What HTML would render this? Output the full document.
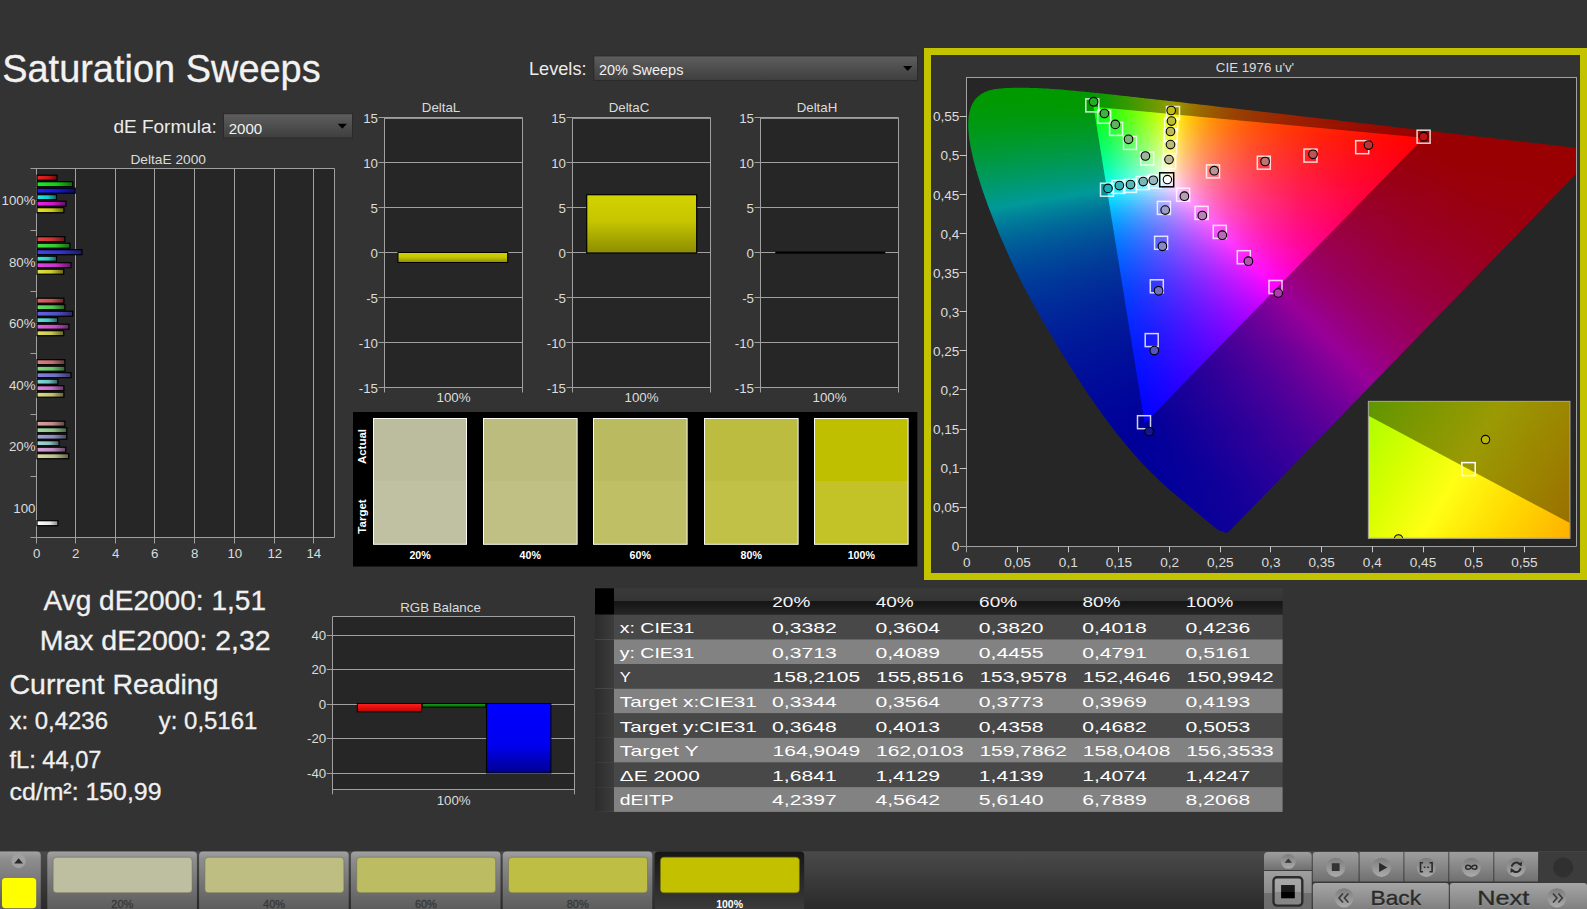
<!DOCTYPE html>
<html><head><meta charset="utf-8"><title>Saturation Sweeps</title>
<style>html,body{margin:0;padding:0;background:#333333;overflow:hidden}svg{display:block}text{font-family:'Liberation Sans', sans-serif}</style>
</head><body>
<svg width="1587" height="909" viewBox="0 0 1587 909">
<defs>
<linearGradient id="dd" x1="0" y1="0" x2="0" y2="1"><stop offset="0" stop-color="#5e5e5e"/><stop offset="1" stop-color="#3e3e3e"/></linearGradient>
<linearGradient id="b1" x1="0" y1="0" x2="1" y2="0"><stop offset="0" stop-color="#e52626"/><stop offset="0.55" stop-color="#cc1616"/><stop offset="1" stop-color="#660b0b"/></linearGradient>
<linearGradient id="b2" x1="0" y1="0" x2="1" y2="0"><stop offset="0" stop-color="#26e526"/><stop offset="0.55" stop-color="#16cc16"/><stop offset="1" stop-color="#0b660b"/></linearGradient>
<linearGradient id="b3" x1="0" y1="0" x2="1" y2="0"><stop offset="0" stop-color="#2626e5"/><stop offset="0.55" stop-color="#1616cc"/><stop offset="1" stop-color="#0b0b66"/></linearGradient>
<linearGradient id="b4" x1="0" y1="0" x2="1" y2="0"><stop offset="0" stop-color="#26e5e5"/><stop offset="0.55" stop-color="#16cccc"/><stop offset="1" stop-color="#0b6666"/></linearGradient>
<linearGradient id="b5" x1="0" y1="0" x2="1" y2="0"><stop offset="0" stop-color="#e526e5"/><stop offset="0.55" stop-color="#cc16cc"/><stop offset="1" stop-color="#660b66"/></linearGradient>
<linearGradient id="b6" x1="0" y1="0" x2="1" y2="0"><stop offset="0" stop-color="#e5e526"/><stop offset="0.55" stop-color="#cccc16"/><stop offset="1" stop-color="#66660b"/></linearGradient>
<linearGradient id="b7" x1="0" y1="0" x2="1" y2="0"><stop offset="0" stop-color="#e24545"/><stop offset="0.55" stop-color="#c93333"/><stop offset="1" stop-color="#641919"/></linearGradient>
<linearGradient id="b8" x1="0" y1="0" x2="1" y2="0"><stop offset="0" stop-color="#45e245"/><stop offset="0.55" stop-color="#33c933"/><stop offset="1" stop-color="#196419"/></linearGradient>
<linearGradient id="b9" x1="0" y1="0" x2="1" y2="0"><stop offset="0" stop-color="#4545e2"/><stop offset="0.55" stop-color="#3333c9"/><stop offset="1" stop-color="#191964"/></linearGradient>
<linearGradient id="b10" x1="0" y1="0" x2="1" y2="0"><stop offset="0" stop-color="#45e2e2"/><stop offset="0.55" stop-color="#33c9c9"/><stop offset="1" stop-color="#196464"/></linearGradient>
<linearGradient id="b11" x1="0" y1="0" x2="1" y2="0"><stop offset="0" stop-color="#e245e2"/><stop offset="0.55" stop-color="#c933c9"/><stop offset="1" stop-color="#641964"/></linearGradient>
<linearGradient id="b12" x1="0" y1="0" x2="1" y2="0"><stop offset="0" stop-color="#e2e245"/><stop offset="0.55" stop-color="#c9c933"/><stop offset="1" stop-color="#646419"/></linearGradient>
<linearGradient id="b13" x1="0" y1="0" x2="1" y2="0"><stop offset="0" stop-color="#df6464"/><stop offset="0.55" stop-color="#c65151"/><stop offset="1" stop-color="#632828"/></linearGradient>
<linearGradient id="b14" x1="0" y1="0" x2="1" y2="0"><stop offset="0" stop-color="#64df64"/><stop offset="0.55" stop-color="#51c651"/><stop offset="1" stop-color="#286328"/></linearGradient>
<linearGradient id="b15" x1="0" y1="0" x2="1" y2="0"><stop offset="0" stop-color="#6464df"/><stop offset="0.55" stop-color="#5151c6"/><stop offset="1" stop-color="#282863"/></linearGradient>
<linearGradient id="b16" x1="0" y1="0" x2="1" y2="0"><stop offset="0" stop-color="#64dfdf"/><stop offset="0.55" stop-color="#51c6c6"/><stop offset="1" stop-color="#286363"/></linearGradient>
<linearGradient id="b17" x1="0" y1="0" x2="1" y2="0"><stop offset="0" stop-color="#df64df"/><stop offset="0.55" stop-color="#c651c6"/><stop offset="1" stop-color="#632863"/></linearGradient>
<linearGradient id="b18" x1="0" y1="0" x2="1" y2="0"><stop offset="0" stop-color="#dfdf64"/><stop offset="0.55" stop-color="#c6c651"/><stop offset="1" stop-color="#636328"/></linearGradient>
<linearGradient id="b19" x1="0" y1="0" x2="1" y2="0"><stop offset="0" stop-color="#dc8383"/><stop offset="0.55" stop-color="#c36f6f"/><stop offset="1" stop-color="#613737"/></linearGradient>
<linearGradient id="b20" x1="0" y1="0" x2="1" y2="0"><stop offset="0" stop-color="#83dc83"/><stop offset="0.55" stop-color="#6fc36f"/><stop offset="1" stop-color="#376137"/></linearGradient>
<linearGradient id="b21" x1="0" y1="0" x2="1" y2="0"><stop offset="0" stop-color="#8383dc"/><stop offset="0.55" stop-color="#6f6fc3"/><stop offset="1" stop-color="#373761"/></linearGradient>
<linearGradient id="b22" x1="0" y1="0" x2="1" y2="0"><stop offset="0" stop-color="#83dcdc"/><stop offset="0.55" stop-color="#6fc3c3"/><stop offset="1" stop-color="#376161"/></linearGradient>
<linearGradient id="b23" x1="0" y1="0" x2="1" y2="0"><stop offset="0" stop-color="#dc83dc"/><stop offset="0.55" stop-color="#c36fc3"/><stop offset="1" stop-color="#613761"/></linearGradient>
<linearGradient id="b24" x1="0" y1="0" x2="1" y2="0"><stop offset="0" stop-color="#dcdc83"/><stop offset="0.55" stop-color="#c3c36f"/><stop offset="1" stop-color="#616137"/></linearGradient>
<linearGradient id="b25" x1="0" y1="0" x2="1" y2="0"><stop offset="0" stop-color="#d9a3a3"/><stop offset="0.55" stop-color="#c08d8d"/><stop offset="1" stop-color="#604646"/></linearGradient>
<linearGradient id="b26" x1="0" y1="0" x2="1" y2="0"><stop offset="0" stop-color="#a3d9a3"/><stop offset="0.55" stop-color="#8dc08d"/><stop offset="1" stop-color="#466046"/></linearGradient>
<linearGradient id="b27" x1="0" y1="0" x2="1" y2="0"><stop offset="0" stop-color="#a3a3d9"/><stop offset="0.55" stop-color="#8d8dc0"/><stop offset="1" stop-color="#464660"/></linearGradient>
<linearGradient id="b28" x1="0" y1="0" x2="1" y2="0"><stop offset="0" stop-color="#a3d9d9"/><stop offset="0.55" stop-color="#8dc0c0"/><stop offset="1" stop-color="#466060"/></linearGradient>
<linearGradient id="b29" x1="0" y1="0" x2="1" y2="0"><stop offset="0" stop-color="#d9a3d9"/><stop offset="0.55" stop-color="#c08dc0"/><stop offset="1" stop-color="#604660"/></linearGradient>
<linearGradient id="b30" x1="0" y1="0" x2="1" y2="0"><stop offset="0" stop-color="#d9d9a3"/><stop offset="0.55" stop-color="#c0c08d"/><stop offset="1" stop-color="#606046"/></linearGradient>
<linearGradient id="bw" x1="0" y1="0" x2="1" y2="0"><stop offset="0" stop-color="#ffffff"/><stop offset="0.6" stop-color="#e8e8e8"/><stop offset="1" stop-color="#8a8a8a"/></linearGradient>
<linearGradient id="yb" x1="0" y1="0" x2="0" y2="1"><stop offset="0" stop-color="#d2d200"/><stop offset="0.45" stop-color="#c6c600"/><stop offset="1" stop-color="#8c8c00"/></linearGradient>
<linearGradient id="d1" gradientUnits="userSpaceOnUse" x1="1005.5" x2="1035.5"><stop offset="0" stop-color="#009900"/><stop offset="1" stop-color="#009900"/></linearGradient>
<linearGradient id="d2" gradientUnits="userSpaceOnUse" x1="989.5" x2="1066.5"><stop offset="0" stop-color="#009900"/><stop offset="1" stop-color="#009900"/></linearGradient>
<linearGradient id="d3" gradientUnits="userSpaceOnUse" x1="984.5" x2="1088.5"><stop offset="0" stop-color="#009900"/><stop offset="1" stop-color="#019900"/></linearGradient>
<linearGradient id="d4" gradientUnits="userSpaceOnUse" x1="980.5" x2="1107.5"><stop offset="0" stop-color="#009900"/><stop offset="0.8425" stop-color="#009900"/><stop offset="0.9055" stop-color="#059900"/><stop offset="1" stop-color="#159900"/></linearGradient>
<linearGradient id="d5" gradientUnits="userSpaceOnUse" x1="977.5" x2="1125.5"><stop offset="0" stop-color="#009901"/><stop offset="0.7568" stop-color="#019900"/><stop offset="0.8311" stop-color="#0b9900"/><stop offset="1" stop-color="#339900"/></linearGradient>
<linearGradient id="d6" gradientUnits="userSpaceOnUse" x1="975.5" x2="1143.5"><stop offset="0" stop-color="#009901"/><stop offset="0.6905" stop-color="#029900"/><stop offset="0.8036" stop-color="#1a9900"/><stop offset="1" stop-color="#549900"/></linearGradient>
<linearGradient id="d7" gradientUnits="userSpaceOnUse" x1="973.5" x2="1161.5"><stop offset="0" stop-color="#009902"/><stop offset="0.633" stop-color="#029900"/><stop offset="0.6862" stop-color="#0e9900"/><stop offset="0.8032" stop-color="#319900"/><stop offset="1" stop-color="#7a9900"/></linearGradient>
<linearGradient id="d8" gradientUnits="userSpaceOnUse" x1="972.5" x2="1179.5"><stop offset="0" stop-color="#009903"/><stop offset="0.5845" stop-color="#039900"/><stop offset="0.6522" stop-color="#159900"/><stop offset="0.7778" stop-color="#419900"/><stop offset="0.9758" stop-color="#989900"/><stop offset="1" stop-color="#998f00"/></linearGradient>
<linearGradient id="d9" gradientUnits="userSpaceOnUse" x1="971.5" x2="1196.5"><stop offset="0" stop-color="#009904"/><stop offset="0.5422" stop-color="#039901"/><stop offset="0.6044" stop-color="#159901"/><stop offset="0.72" stop-color="#419900"/><stop offset="0.9022" stop-color="#999900"/><stop offset="1" stop-color="#996f00"/></linearGradient>
<linearGradient id="d10" gradientUnits="userSpaceOnUse" x1="970.5" x2="1213.5"><stop offset="0" stop-color="#009905"/><stop offset="0.5021" stop-color="#029902"/><stop offset="0.5514" stop-color="#109901"/><stop offset="0.6667" stop-color="#409901"/><stop offset="0.7531" stop-color="#699900"/><stop offset="0.8395" stop-color="#999900"/><stop offset="0.9136" stop-color="#997500"/><stop offset="1" stop-color="#995800"/></linearGradient>
<linearGradient id="d11" gradientUnits="userSpaceOnUse" x1="969.5" x2="1231.5"><stop offset="0" stop-color="#009906"/><stop offset="0.4695" stop-color="#029903"/><stop offset="0.5153" stop-color="#109902"/><stop offset="0.6183" stop-color="#3e9901"/><stop offset="0.6985" stop-color="#679901"/><stop offset="0.7824" stop-color="#999900"/><stop offset="0.8779" stop-color="#996a00"/><stop offset="1" stop-color="#994600"/></linearGradient>
<linearGradient id="d12" gradientUnits="userSpaceOnUse" x1="1092.5" x2="1108.5"><stop offset="0" stop-color="#03ff05"/><stop offset="0.375" stop-color="#0cff05"/><stop offset="1" stop-color="#25ff04"/></linearGradient>
<linearGradient id="d13" gradientUnits="userSpaceOnUse" x1="969.5" x2="1248.5"><stop offset="0" stop-color="#009907"/><stop offset="0.448" stop-color="#039905"/><stop offset="0.5878" stop-color="#429902"/><stop offset="0.7312" stop-color="#979901"/><stop offset="0.7885" stop-color="#997900"/><stop offset="0.8459" stop-color="#996100"/><stop offset="0.9176" stop-color="#994b00"/><stop offset="1" stop-color="#993900"/></linearGradient>
<linearGradient id="d14" gradientUnits="userSpaceOnUse" x1="1092.5" x2="1129.5"><stop offset="0" stop-color="#03ff08"/><stop offset="0.2973" stop-color="#18ff07"/><stop offset="1" stop-color="#61ff04"/></linearGradient>
<linearGradient id="d15" gradientUnits="userSpaceOnUse" x1="968.5" x2="1265.5"><stop offset="0" stop-color="#009908"/><stop offset="0.4242" stop-color="#039907"/><stop offset="0.5926" stop-color="#579903"/><stop offset="0.6902" stop-color="#989901"/><stop offset="0.7508" stop-color="#997501"/><stop offset="0.8182" stop-color="#995900"/><stop offset="0.899" stop-color="#994200"/><stop offset="1" stop-color="#992f00"/></linearGradient>
<linearGradient id="d16" gradientUnits="userSpaceOnUse" x1="1093.5" x2="1151.5"><stop offset="0" stop-color="#04ff0b"/><stop offset="0.1379" stop-color="#12ff0b"/><stop offset="0.431" stop-color="#40ff08"/><stop offset="1" stop-color="#a9ff04"/></linearGradient>
<linearGradient id="d17" gradientUnits="userSpaceOnUse" x1="968.5" x2="1283.5"><stop offset="0" stop-color="#00990a"/><stop offset="0.4" stop-color="#039909"/><stop offset="0.6254" stop-color="#859903"/><stop offset="0.6508" stop-color="#989903"/><stop offset="0.7143" stop-color="#997201"/><stop offset="0.7905" stop-color="#995200"/><stop offset="0.8825" stop-color="#993a00"/><stop offset="1" stop-color="#992600"/></linearGradient>
<linearGradient id="d18" gradientUnits="userSpaceOnUse" x1="1093.5" x2="1172.5"><stop offset="0" stop-color="#03ff10"/><stop offset="0.1392" stop-color="#19ff0e"/><stop offset="0.481" stop-color="#67ff0a"/><stop offset="0.7468" stop-color="#adff07"/><stop offset="1" stop-color="#faff05"/></linearGradient>
<linearGradient id="d19" gradientUnits="userSpaceOnUse" x1="967.5" x2="1300.5"><stop offset="0" stop-color="#00990b"/><stop offset="0.3754" stop-color="#01990c"/><stop offset="0.6577" stop-color="#997d03"/><stop offset="0.7207" stop-color="#995d01"/><stop offset="0.7958" stop-color="#994400"/><stop offset="0.8889" stop-color="#992f00"/><stop offset="1" stop-color="#991e00"/></linearGradient>
<linearGradient id="d20" gradientUnits="userSpaceOnUse" x1="1093.5" x2="1193.5"><stop offset="0" stop-color="#03ff14"/><stop offset="0.11" stop-color="#19ff13"/><stop offset="0.38" stop-color="#67ff0f"/><stop offset="0.59" stop-color="#aeff0b"/><stop offset="0.8" stop-color="#ffff08"/><stop offset="0.9" stop-color="#ffda05"/><stop offset="1" stop-color="#ffbd04"/></linearGradient>
<linearGradient id="d21" gradientUnits="userSpaceOnUse" x1="967.5" x2="1317.5"><stop offset="0" stop-color="#00990c"/><stop offset="0.3571" stop-color="#01990f"/><stop offset="0.6886" stop-color="#995c02"/><stop offset="0.7486" stop-color="#994601"/><stop offset="0.8171" stop-color="#993500"/><stop offset="1" stop-color="#991800"/></linearGradient>
<linearGradient id="d22" gradientUnits="userSpaceOnUse" x1="1094.5" x2="1215.5"><stop offset="0" stop-color="#04ff19"/><stop offset="0.09917" stop-color="#1dff18"/><stop offset="0.314" stop-color="#6aff13"/><stop offset="0.4793" stop-color="#aeff10"/><stop offset="0.6529" stop-color="#ffff0c"/><stop offset="0.7273" stop-color="#ffdd09"/><stop offset="0.8099" stop-color="#ffbf07"/><stop offset="1" stop-color="#ff8c03"/></linearGradient>
<linearGradient id="d23" gradientUnits="userSpaceOnUse" x1="967.5" x2="1335.5"><stop offset="0" stop-color="#00990d"/><stop offset="0.3397" stop-color="#019912"/><stop offset="0.712" stop-color="#994602"/><stop offset="0.8342" stop-color="#992900"/><stop offset="1" stop-color="#991300"/></linearGradient>
<linearGradient id="d24" gradientUnits="userSpaceOnUse" x1="1094.5" x2="1236.5"><stop offset="0" stop-color="#03ff1e"/><stop offset="0.07746" stop-color="#1aff1d"/><stop offset="0.2606" stop-color="#66ff19"/><stop offset="0.4014" stop-color="#aaff15"/><stop offset="0.5563" stop-color="#fffe11"/><stop offset="0.6479" stop-color="#ffcf0c"/><stop offset="0.7465" stop-color="#ffaa08"/><stop offset="0.8662" stop-color="#ff8705"/><stop offset="1" stop-color="#ff6b03"/></linearGradient>
<linearGradient id="d25" gradientUnits="userSpaceOnUse" x1="967.5" x2="1352.5"><stop offset="0" stop-color="#00990e"/><stop offset="0.3247" stop-color="#019915"/><stop offset="0.7351" stop-color="#993602"/><stop offset="0.8519" stop-color="#992000"/><stop offset="1" stop-color="#990e00"/></linearGradient>
<linearGradient id="d26" gradientUnits="userSpaceOnUse" x1="1094.5" x2="1257.5"><stop offset="0" stop-color="#03ff22"/><stop offset="0.06748" stop-color="#19ff22"/><stop offset="0.2209" stop-color="#63ff1e"/><stop offset="0.3436" stop-color="#a7ff1b"/><stop offset="0.4847" stop-color="#fffd17"/><stop offset="0.5828" stop-color="#ffc50f"/><stop offset="0.6994" stop-color="#ff970a"/><stop offset="0.8344" stop-color="#ff7205"/><stop offset="1" stop-color="#ff5302"/></linearGradient>
<linearGradient id="d27" gradientUnits="userSpaceOnUse" x1="967.5" x2="1369.5"><stop offset="0" stop-color="#00990f"/><stop offset="0.3134" stop-color="#019918"/><stop offset="0.7587" stop-color="#992901"/><stop offset="0.8657" stop-color="#991800"/><stop offset="1" stop-color="#990a00"/></linearGradient>
<linearGradient id="d28" gradientUnits="userSpaceOnUse" x1="1095.5" x2="1279.5"><stop offset="0" stop-color="#04ff27"/><stop offset="0.05978" stop-color="#1bff27"/><stop offset="0.1957" stop-color="#66ff24"/><stop offset="0.2935" stop-color="#a3ff21"/><stop offset="0.4239" stop-color="#fffc1d"/><stop offset="0.4728" stop-color="#ffdb18"/><stop offset="0.5272" stop-color="#ffbc13"/><stop offset="0.6522" stop-color="#ff890b"/><stop offset="0.8098" stop-color="#ff6006"/><stop offset="1" stop-color="#ff3f02"/></linearGradient>
<linearGradient id="d29" gradientUnits="userSpaceOnUse" x1="967.5" x2="1387.5"><stop offset="0" stop-color="#009911"/><stop offset="0.2857" stop-color="#00991a"/><stop offset="0.3095" stop-color="#04991b"/><stop offset="0.7762" stop-color="#992001"/><stop offset="1" stop-color="#990700"/></linearGradient>
<linearGradient id="d30" gradientUnits="userSpaceOnUse" x1="1095.5" x2="1300.5"><stop offset="0" stop-color="#03ff2c"/><stop offset="0.05366" stop-color="#1bff2c"/><stop offset="0.1805" stop-color="#69ff29"/><stop offset="0.278" stop-color="#afff27"/><stop offset="0.3756" stop-color="#feff24"/><stop offset="0.4293" stop-color="#ffd61d"/><stop offset="0.4829" stop-color="#ffb617"/><stop offset="0.5463" stop-color="#ff9812"/><stop offset="0.6146" stop-color="#ff7e0d"/><stop offset="0.7854" stop-color="#ff5306"/><stop offset="1" stop-color="#ff3102"/></linearGradient>
<linearGradient id="d31" gradientUnits="userSpaceOnUse" x1="967.5" x2="1404.5"><stop offset="0" stop-color="#009913"/><stop offset="0.2746" stop-color="#00991d"/><stop offset="0.2975" stop-color="#03991e"/><stop offset="0.7941" stop-color="#991801"/><stop offset="1" stop-color="#990400"/></linearGradient>
<linearGradient id="d32" gradientUnits="userSpaceOnUse" x1="1095.5" x2="1321.5"><stop offset="0" stop-color="#03ff32"/><stop offset="0.04867" stop-color="#1aff31"/><stop offset="0.1593" stop-color="#65ff2f"/><stop offset="0.2478" stop-color="#abff2d"/><stop offset="0.3407" stop-color="#ffff2a"/><stop offset="0.3938" stop-color="#ffd221"/><stop offset="0.4469" stop-color="#ffb01b"/><stop offset="0.5088" stop-color="#ff9115"/><stop offset="0.5841" stop-color="#ff740f"/><stop offset="0.6681" stop-color="#ff5c0b"/><stop offset="0.7655" stop-color="#ff4707"/><stop offset="1" stop-color="#ff2502"/></linearGradient>
<linearGradient id="d33" gradientUnits="userSpaceOnUse" x1="967.5" x2="1422.5"><stop offset="0" stop-color="#009915"/><stop offset="0.2857" stop-color="#039921"/><stop offset="0.811" stop-color="#991101"/><stop offset="1" stop-color="#990100"/></linearGradient>
<linearGradient id="d34" gradientUnits="userSpaceOnUse" x1="1096.5" x2="1343.5"><stop offset="0" stop-color="#04ff37"/><stop offset="0.04453" stop-color="#1cff37"/><stop offset="0.1457" stop-color="#68ff35"/><stop offset="0.2227" stop-color="#abff33"/><stop offset="0.3077" stop-color="#fffe31"/><stop offset="0.3563" stop-color="#ffd127"/><stop offset="0.413" stop-color="#ffaa1f"/><stop offset="0.4777" stop-color="#ff8917"/><stop offset="0.5547" stop-color="#ff6b11"/><stop offset="0.6437" stop-color="#ff520c"/><stop offset="0.7449" stop-color="#ff3d07"/><stop offset="1" stop-color="#ff1a01"/></linearGradient>
<linearGradient id="d35" gradientUnits="userSpaceOnUse" x1="967.5" x2="1439.5"><stop offset="0" stop-color="#009917"/><stop offset="0.2564" stop-color="#009923"/><stop offset="0.2775" stop-color="#049924"/><stop offset="0.8263" stop-color="#990c01"/><stop offset="1" stop-color="#990000"/></linearGradient>
<linearGradient id="d36" gradientUnits="userSpaceOnUse" x1="1096.5" x2="1364.5"><stop offset="0" stop-color="#04ff3c"/><stop offset="0.04104" stop-color="#1bff3c"/><stop offset="0.1306" stop-color="#65ff3b"/><stop offset="0.2015" stop-color="#a8ff39"/><stop offset="0.2836" stop-color="#fffd37"/><stop offset="0.3321" stop-color="#ffcd2c"/><stop offset="0.3881" stop-color="#ffa422"/><stop offset="0.4552" stop-color="#ff811a"/><stop offset="0.5336" stop-color="#ff6313"/><stop offset="0.6231" stop-color="#ff4a0d"/><stop offset="0.7313" stop-color="#ff3408"/><stop offset="1" stop-color="#ff1201"/></linearGradient>
<linearGradient id="d37" gradientUnits="userSpaceOnUse" x1="967.5" x2="1456.5"><stop offset="0" stop-color="#009919"/><stop offset="0.2474" stop-color="#009926"/><stop offset="0.2679" stop-color="#039927"/><stop offset="0.8405" stop-color="#990801"/><stop offset="1" stop-color="#990000"/></linearGradient>
<linearGradient id="d38" gradientUnits="userSpaceOnUse" x1="1096.5" x2="1385.5"><stop offset="0" stop-color="#03ff41"/><stop offset="0.03806" stop-color="#1bff41"/><stop offset="0.1211" stop-color="#64ff41"/><stop offset="0.1834" stop-color="#a4ff40"/><stop offset="0.263" stop-color="#fffc3e"/><stop offset="0.3114" stop-color="#ffc931"/><stop offset="0.3668" stop-color="#ff9f26"/><stop offset="0.4325" stop-color="#ff7b1c"/><stop offset="0.5121" stop-color="#ff5c15"/><stop offset="0.6055" stop-color="#ff420e"/><stop offset="0.7163" stop-color="#ff2d08"/><stop offset="1" stop-color="#ff0b01"/></linearGradient>
<linearGradient id="d39" gradientUnits="userSpaceOnUse" x1="967.5" x2="1474.5"><stop offset="0" stop-color="#00991c"/><stop offset="0.2584" stop-color="#03992b"/><stop offset="0.854" stop-color="#990401"/><stop offset="1" stop-color="#990000"/></linearGradient>
<linearGradient id="d40" gradientUnits="userSpaceOnUse" x1="1097.5" x2="1406.5"><stop offset="0" stop-color="#04ff47"/><stop offset="0.0356" stop-color="#1dff47"/><stop offset="0.11" stop-color="#64ff47"/><stop offset="0.165" stop-color="#a0ff46"/><stop offset="0.2395" stop-color="#feff46"/><stop offset="0.2427" stop-color="#fffc45"/><stop offset="0.2913" stop-color="#ffc535"/><stop offset="0.3463" stop-color="#ff9a29"/><stop offset="0.4142" stop-color="#ff741f"/><stop offset="0.4919" stop-color="#ff5616"/><stop offset="0.5858" stop-color="#ff3c0f"/><stop offset="0.699" stop-color="#ff2609"/><stop offset="1" stop-color="#ff0401"/></linearGradient>
<linearGradient id="d41" gradientUnits="userSpaceOnUse" x1="968.5" x2="1491.5"><stop offset="0" stop-color="#00991e"/><stop offset="0.2294" stop-color="#00992d"/><stop offset="0.2505" stop-color="#04992e"/><stop offset="0.8662" stop-color="#990001"/><stop offset="1" stop-color="#990000"/></linearGradient>
<linearGradient id="d42" gradientUnits="userSpaceOnUse" x1="1097.5" x2="1424.5"><stop offset="0" stop-color="#04ff4c"/><stop offset="0.03364" stop-color="#1cff4d"/><stop offset="0.107" stop-color="#67ff4d"/><stop offset="0.1651" stop-color="#acff4d"/><stop offset="0.2263" stop-color="#ffff4d"/><stop offset="0.2752" stop-color="#ffc43b"/><stop offset="0.3303" stop-color="#ff972d"/><stop offset="0.3976" stop-color="#ff7022"/><stop offset="0.4771" stop-color="#ff5118"/><stop offset="0.5749" stop-color="#ff3710"/><stop offset="0.6942" stop-color="#ff200a"/><stop offset="0.841" stop-color="#ff0e04"/><stop offset="1" stop-color="#ff0001"/></linearGradient>
<linearGradient id="d43" gradientUnits="userSpaceOnUse" x1="968.5" x2="1508.5"><stop offset="0" stop-color="#009921"/><stop offset="0.2241" stop-color="#009930"/><stop offset="0.2426" stop-color="#049931"/><stop offset="0.8389" stop-color="#990001"/><stop offset="1" stop-color="#990000"/></linearGradient>
<linearGradient id="d44" gradientUnits="userSpaceOnUse" x1="1097.5" x2="1424.5"><stop offset="0" stop-color="#03ff52"/><stop offset="0.03364" stop-color="#1bff52"/><stop offset="0.107" stop-color="#67ff53"/><stop offset="0.1651" stop-color="#acff53"/><stop offset="0.2263" stop-color="#fffe54"/><stop offset="0.2722" stop-color="#ffc641"/><stop offset="0.3272" stop-color="#ff9832"/><stop offset="0.3945" stop-color="#ff7126"/><stop offset="0.474" stop-color="#ff511c"/><stop offset="0.5719" stop-color="#ff3713"/><stop offset="0.6911" stop-color="#ff200c"/><stop offset="0.844" stop-color="#ff0d06"/><stop offset="1" stop-color="#ff0002"/></linearGradient>
<linearGradient id="d45" gradientUnits="userSpaceOnUse" x1="968.5" x2="1526.5"><stop offset="0" stop-color="#009923"/><stop offset="0.2348" stop-color="#039935"/><stop offset="0.8082" stop-color="#990002"/><stop offset="1" stop-color="#990000"/></linearGradient>
<linearGradient id="d46" gradientUnits="userSpaceOnUse" x1="1097.5" x2="1422.5"><stop offset="0" stop-color="#03ff57"/><stop offset="0.03077" stop-color="#18ff58"/><stop offset="0.1046" stop-color="#63ff59"/><stop offset="0.1631" stop-color="#a8ff5a"/><stop offset="0.2277" stop-color="#fffd5a"/><stop offset="0.2738" stop-color="#ffc647"/><stop offset="0.3292" stop-color="#ff9737"/><stop offset="0.3969" stop-color="#ff702a"/><stop offset="0.4769" stop-color="#ff511f"/><stop offset="0.5754" stop-color="#ff3616"/><stop offset="0.6923" stop-color="#ff200e"/><stop offset="0.8431" stop-color="#ff0d08"/><stop offset="1" stop-color="#ff0003"/></linearGradient>
<linearGradient id="d47" gradientUnits="userSpaceOnUse" x1="968.5" x2="1543.5"><stop offset="0" stop-color="#009926"/><stop offset="0.2104" stop-color="#009937"/><stop offset="0.2296" stop-color="#049938"/><stop offset="0.7809" stop-color="#990003"/><stop offset="1" stop-color="#990000"/></linearGradient>
<linearGradient id="d48" gradientUnits="userSpaceOnUse" x1="1098.5" x2="1420.5"><stop offset="0" stop-color="#04ff5d"/><stop offset="0.03106" stop-color="#1aff5e"/><stop offset="0.1025" stop-color="#63ff5f"/><stop offset="0.1584" stop-color="#a5ff61"/><stop offset="0.2267" stop-color="#fffd61"/><stop offset="0.2733" stop-color="#ffc54d"/><stop offset="0.3292" stop-color="#ff963c"/><stop offset="0.3944" stop-color="#ff712e"/><stop offset="0.4752" stop-color="#ff5122"/><stop offset="0.5745" stop-color="#ff3619"/><stop offset="0.6925" stop-color="#ff2010"/><stop offset="0.8447" stop-color="#ff0d09"/><stop offset="1" stop-color="#ff0004"/></linearGradient>
<linearGradient id="d49" gradientUnits="userSpaceOnUse" x1="969.5" x2="1560.5"><stop offset="0" stop-color="#009929"/><stop offset="0.2047" stop-color="#00993a"/><stop offset="0.2217" stop-color="#04993b"/><stop offset="0.7547" stop-color="#990004"/><stop offset="1" stop-color="#990000"/></linearGradient>
<linearGradient id="d50" gradientUnits="userSpaceOnUse" x1="1098.5" x2="1418.5"><stop offset="0" stop-color="#03ff63"/><stop offset="0.03125" stop-color="#19ff64"/><stop offset="0.1031" stop-color="#62ff66"/><stop offset="0.1562" stop-color="#a1ff67"/><stop offset="0.225" stop-color="#feff6a"/><stop offset="0.2281" stop-color="#fffc69"/><stop offset="0.275" stop-color="#ffc453"/><stop offset="0.3312" stop-color="#ff9541"/><stop offset="0.3969" stop-color="#ff7032"/><stop offset="0.4781" stop-color="#ff5026"/><stop offset="0.575" stop-color="#ff361b"/><stop offset="0.6937" stop-color="#ff2013"/><stop offset="0.8438" stop-color="#ff0d0c"/><stop offset="1" stop-color="#ff0006"/></linearGradient>
<linearGradient id="d51" gradientUnits="userSpaceOnUse" x1="969.5" x2="1575.5"><stop offset="0" stop-color="#00992c"/><stop offset="0.1997" stop-color="#00993e"/><stop offset="0.2162" stop-color="#03993f"/><stop offset="0.7327" stop-color="#990005"/><stop offset="1" stop-color="#990000"/></linearGradient>
<linearGradient id="d52" gradientUnits="userSpaceOnUse" x1="1098.5" x2="1416.5"><stop offset="0" stop-color="#03ff69"/><stop offset="0.03145" stop-color="#18ff6a"/><stop offset="0.1069" stop-color="#66ff6d"/><stop offset="0.1667" stop-color="#adff6f"/><stop offset="0.2264" stop-color="#ffff71"/><stop offset="0.2736" stop-color="#ffc65a"/><stop offset="0.327" stop-color="#ff9947"/><stop offset="0.3931" stop-color="#ff7237"/><stop offset="0.4748" stop-color="#ff512a"/><stop offset="0.5723" stop-color="#ff371f"/><stop offset="0.6918" stop-color="#ff2015"/><stop offset="0.8428" stop-color="#ff0d0e"/><stop offset="1" stop-color="#ff0007"/></linearGradient>
<linearGradient id="d53" gradientUnits="userSpaceOnUse" x1="969.5" x2="1575.5"><stop offset="0" stop-color="#00992e"/><stop offset="0.1997" stop-color="#009941"/><stop offset="0.2178" stop-color="#049943"/><stop offset="0.7294" stop-color="#990006"/><stop offset="1" stop-color="#990000"/></linearGradient>
<linearGradient id="d54" gradientUnits="userSpaceOnUse" x1="1099.5" x2="1414.5"><stop offset="0" stop-color="#04ff6f"/><stop offset="0.03175" stop-color="#1bff70"/><stop offset="0.1048" stop-color="#65ff73"/><stop offset="0.1651" stop-color="#adff76"/><stop offset="0.2254" stop-color="#ffff79"/><stop offset="0.273" stop-color="#ffc560"/><stop offset="0.327" stop-color="#ff984c"/><stop offset="0.3937" stop-color="#ff713b"/><stop offset="0.4762" stop-color="#ff502d"/><stop offset="0.5746" stop-color="#ff3621"/><stop offset="0.6921" stop-color="#ff2018"/><stop offset="0.8444" stop-color="#ff0d0f"/><stop offset="1" stop-color="#ff0009"/></linearGradient>
<linearGradient id="d55" gradientUnits="userSpaceOnUse" x1="970.5" x2="1575.5"><stop offset="0" stop-color="#009931"/><stop offset="0.2" stop-color="#009945"/><stop offset="0.2165" stop-color="#049946"/><stop offset="0.7256" stop-color="#990007"/><stop offset="1" stop-color="#990000"/></linearGradient>
<linearGradient id="d56" gradientUnits="userSpaceOnUse" x1="1099.5" x2="1412.5"><stop offset="0" stop-color="#04ff75"/><stop offset="0.03195" stop-color="#1aff76"/><stop offset="0.1054" stop-color="#65ff7a"/><stop offset="0.1629" stop-color="#a9ff7d"/><stop offset="0.2268" stop-color="#fffe80"/><stop offset="0.2748" stop-color="#ffc466"/><stop offset="0.3291" stop-color="#ff9751"/><stop offset="0.3962" stop-color="#ff703f"/><stop offset="0.476" stop-color="#ff5131"/><stop offset="0.5751" stop-color="#ff3624"/><stop offset="0.6933" stop-color="#ff201a"/><stop offset="0.8435" stop-color="#ff0d12"/><stop offset="1" stop-color="#ff000b"/></linearGradient>
<linearGradient id="d57" gradientUnits="userSpaceOnUse" x1="970.5" x2="1575.5"><stop offset="0" stop-color="#009934"/><stop offset="0.2" stop-color="#009948"/><stop offset="0.2165" stop-color="#03994a"/><stop offset="0.7223" stop-color="#990008"/><stop offset="0.7868" stop-color="#990003"/><stop offset="1" stop-color="#990000"/></linearGradient>
<linearGradient id="d58" gradientUnits="userSpaceOnUse" x1="1099.5" x2="1410.5"><stop offset="0" stop-color="#03ff7b"/><stop offset="0.03215" stop-color="#19ff7d"/><stop offset="0.1029" stop-color="#61ff81"/><stop offset="0.1608" stop-color="#a5ff84"/><stop offset="0.2283" stop-color="#fffd88"/><stop offset="0.2765" stop-color="#ffc36c"/><stop offset="0.3312" stop-color="#ff9656"/><stop offset="0.3955" stop-color="#ff7144"/><stop offset="0.4759" stop-color="#ff5134"/><stop offset="0.5756" stop-color="#ff3627"/><stop offset="0.6945" stop-color="#ff201d"/><stop offset="0.8457" stop-color="#ff0d14"/><stop offset="1" stop-color="#ff000c"/></linearGradient>
<linearGradient id="d59" gradientUnits="userSpaceOnUse" x1="971.5" x2="1575.5"><stop offset="0" stop-color="#009937"/><stop offset="0.2152" stop-color="#03994e"/><stop offset="0.7185" stop-color="#990009"/><stop offset="0.7897" stop-color="#990003"/><stop offset="1" stop-color="#990001"/></linearGradient>
<linearGradient id="d60" gradientUnits="userSpaceOnUse" x1="1100.5" x2="1408.5"><stop offset="0" stop-color="#04ff81"/><stop offset="0.03247" stop-color="#1bff83"/><stop offset="0.1039" stop-color="#64ff88"/><stop offset="0.1558" stop-color="#a1ff8b"/><stop offset="0.2273" stop-color="#fffc8f"/><stop offset="0.276" stop-color="#ffc272"/><stop offset="0.3312" stop-color="#ff955b"/><stop offset="0.3961" stop-color="#ff7048"/><stop offset="0.4773" stop-color="#ff5038"/><stop offset="0.5747" stop-color="#ff362b"/><stop offset="0.6948" stop-color="#ff201f"/><stop offset="0.8442" stop-color="#ff0d16"/><stop offset="1" stop-color="#ff000e"/></linearGradient>
<linearGradient id="d61" gradientUnits="userSpaceOnUse" x1="971.5" x2="1575.5"><stop offset="0" stop-color="#00993a"/><stop offset="0.2003" stop-color="#009950"/><stop offset="0.2169" stop-color="#049952"/><stop offset="0.7152" stop-color="#99000a"/><stop offset="0.7914" stop-color="#990004"/><stop offset="1" stop-color="#990001"/></linearGradient>
<linearGradient id="d62" gradientUnits="userSpaceOnUse" x1="1100.5" x2="1406.5"><stop offset="0" stop-color="#04ff87"/><stop offset="0.03268" stop-color="#1aff8a"/><stop offset="0.1046" stop-color="#64ff8f"/><stop offset="0.1634" stop-color="#aaff93"/><stop offset="0.2255" stop-color="#feff99"/><stop offset="0.2745" stop-color="#ffc47a"/><stop offset="0.3268" stop-color="#ff9862"/><stop offset="0.3922" stop-color="#ff724e"/><stop offset="0.4739" stop-color="#ff513c"/><stop offset="0.5719" stop-color="#ff372e"/><stop offset="0.6928" stop-color="#ff2022"/><stop offset="0.8431" stop-color="#ff0d18"/><stop offset="1" stop-color="#ff0010"/></linearGradient>
<linearGradient id="d63" gradientUnits="userSpaceOnUse" x1="972.5" x2="1575.5"><stop offset="0" stop-color="#00993d"/><stop offset="0.199" stop-color="#009953"/><stop offset="0.2156" stop-color="#049955"/><stop offset="0.7114" stop-color="#99000b"/><stop offset="0.7927" stop-color="#990004"/><stop offset="1" stop-color="#990001"/></linearGradient>
<linearGradient id="d64" gradientUnits="userSpaceOnUse" x1="1100.5" x2="1404.5"><stop offset="0" stop-color="#03ff8e"/><stop offset="0.03289" stop-color="#1aff90"/><stop offset="0.1053" stop-color="#64ff96"/><stop offset="0.1645" stop-color="#aaff9b"/><stop offset="0.227" stop-color="#ffffa1"/><stop offset="0.273" stop-color="#ffc782"/><stop offset="0.3289" stop-color="#ff9767"/><stop offset="0.3947" stop-color="#ff7152"/><stop offset="0.477" stop-color="#ff5140"/><stop offset="0.5757" stop-color="#ff3631"/><stop offset="0.6941" stop-color="#ff2025"/><stop offset="0.8454" stop-color="#ff0d1a"/><stop offset="1" stop-color="#ff0012"/></linearGradient>
<linearGradient id="d65" gradientUnits="userSpaceOnUse" x1="972.5" x2="1575.5"><stop offset="0" stop-color="#009940"/><stop offset="0.199" stop-color="#009957"/><stop offset="0.2156" stop-color="#039959"/><stop offset="0.7081" stop-color="#99000c"/><stop offset="0.796" stop-color="#990004"/><stop offset="1" stop-color="#990001"/></linearGradient>
<linearGradient id="d66" gradientUnits="userSpaceOnUse" x1="1101.5" x2="1402.5"><stop offset="0" stop-color="#04ff94"/><stop offset="0.03322" stop-color="#1cff97"/><stop offset="0.1063" stop-color="#67ff9d"/><stop offset="0.1628" stop-color="#aaffa3"/><stop offset="0.2259" stop-color="#fffea9"/><stop offset="0.2724" stop-color="#ffc688"/><stop offset="0.3289" stop-color="#ff976d"/><stop offset="0.3953" stop-color="#ff7056"/><stop offset="0.4751" stop-color="#ff5144"/><stop offset="0.5748" stop-color="#ff3634"/><stop offset="0.6944" stop-color="#ff2027"/><stop offset="0.8439" stop-color="#ff0d1c"/><stop offset="1" stop-color="#ff0014"/></linearGradient>
<linearGradient id="d67" gradientUnits="userSpaceOnUse" x1="973.5" x2="1575.5"><stop offset="0" stop-color="#009943"/><stop offset="0.1993" stop-color="#00995b"/><stop offset="0.2159" stop-color="#04995d"/><stop offset="0.7043" stop-color="#99000d"/><stop offset="0.7973" stop-color="#990005"/><stop offset="1" stop-color="#990002"/></linearGradient>
<linearGradient id="d68" gradientUnits="userSpaceOnUse" x1="1101.5" x2="1400.5"><stop offset="0" stop-color="#04ff9b"/><stop offset="0.03344" stop-color="#1bff9e"/><stop offset="0.1037" stop-color="#63ffa4"/><stop offset="0.1605" stop-color="#a6ffaa"/><stop offset="0.2274" stop-color="#fffdb1"/><stop offset="0.2742" stop-color="#ffc58f"/><stop offset="0.3311" stop-color="#ff9672"/><stop offset="0.398" stop-color="#ff705b"/><stop offset="0.4783" stop-color="#ff5047"/><stop offset="0.5753" stop-color="#ff3637"/><stop offset="0.6957" stop-color="#ff202a"/><stop offset="0.8462" stop-color="#ff0d1e"/><stop offset="1" stop-color="#ff0016"/></linearGradient>
<linearGradient id="d69" gradientUnits="userSpaceOnUse" x1="973.5" x2="1575.5"><stop offset="0" stop-color="#009946"/><stop offset="0.1993" stop-color="#00995f"/><stop offset="0.2159" stop-color="#049961"/><stop offset="0.7027" stop-color="#99000e"/><stop offset="0.8007" stop-color="#990005"/><stop offset="1" stop-color="#990002"/></linearGradient>
<linearGradient id="d70" gradientUnits="userSpaceOnUse" x1="1101.5" x2="1398.5"><stop offset="0" stop-color="#03ffa1"/><stop offset="0.0303" stop-color="#17ffa4"/><stop offset="0.101" stop-color="#5fffab"/><stop offset="0.1582" stop-color="#a2ffb2"/><stop offset="0.229" stop-color="#fffcb9"/><stop offset="0.2761" stop-color="#ffc495"/><stop offset="0.33" stop-color="#ff9778"/><stop offset="0.3973" stop-color="#ff7060"/><stop offset="0.4781" stop-color="#ff504c"/><stop offset="0.5758" stop-color="#ff363b"/><stop offset="0.6936" stop-color="#ff202d"/><stop offset="0.8451" stop-color="#ff0d21"/><stop offset="1" stop-color="#ff0018"/></linearGradient>
<linearGradient id="d71" gradientUnits="userSpaceOnUse" x1="974.5" x2="1575.5"><stop offset="0" stop-color="#00994a"/><stop offset="0.198" stop-color="#009963"/><stop offset="0.2146" stop-color="#039965"/><stop offset="0.6988" stop-color="#990010"/><stop offset="0.8037" stop-color="#990006"/><stop offset="1" stop-color="#990002"/></linearGradient>
<linearGradient id="d72" gradientUnits="userSpaceOnUse" x1="1102.5" x2="1397.5"><stop offset="0" stop-color="#04ffa9"/><stop offset="0.0339" stop-color="#1dffac"/><stop offset="0.1017" stop-color="#62ffb3"/><stop offset="0.1525" stop-color="#9effba"/><stop offset="0.2237" stop-color="#feffc4"/><stop offset="0.2271" stop-color="#fffbc1"/><stop offset="0.2746" stop-color="#ffc39c"/><stop offset="0.3288" stop-color="#ff967e"/><stop offset="0.3966" stop-color="#ff6f64"/><stop offset="0.478" stop-color="#ff504f"/><stop offset="0.5763" stop-color="#ff353e"/><stop offset="0.6949" stop-color="#ff1f2f"/><stop offset="0.8475" stop-color="#ff0c23"/><stop offset="1" stop-color="#ff0019"/></linearGradient>
<linearGradient id="d73" gradientUnits="userSpaceOnUse" x1="974.5" x2="1575.5"><stop offset="0" stop-color="#00994d"/><stop offset="0.1997" stop-color="#009967"/><stop offset="0.2163" stop-color="#04996a"/><stop offset="0.6955" stop-color="#990011"/><stop offset="0.8053" stop-color="#990006"/><stop offset="1" stop-color="#990003"/></linearGradient>
<linearGradient id="d74" gradientUnits="userSpaceOnUse" x1="1102.5" x2="1395.5"><stop offset="0" stop-color="#04ffaf"/><stop offset="0.03413" stop-color="#1cffb3"/><stop offset="0.1058" stop-color="#66ffbb"/><stop offset="0.1638" stop-color="#abffc3"/><stop offset="0.2253" stop-color="#ffffcd"/><stop offset="0.273" stop-color="#ffc5a5"/><stop offset="0.3276" stop-color="#ff9785"/><stop offset="0.3925" stop-color="#ff726b"/><stop offset="0.4744" stop-color="#ff5154"/><stop offset="0.5734" stop-color="#ff3642"/><stop offset="0.6928" stop-color="#ff2032"/><stop offset="0.8464" stop-color="#ff0d25"/><stop offset="1" stop-color="#ff001b"/></linearGradient>
<linearGradient id="d75" gradientUnits="userSpaceOnUse" x1="975.5" x2="1575.5"><stop offset="0" stop-color="#009950"/><stop offset="0.1983" stop-color="#00996b"/><stop offset="0.215" stop-color="#04996e"/><stop offset="0.6917" stop-color="#990012"/><stop offset="0.8083" stop-color="#990006"/><stop offset="1" stop-color="#990003"/></linearGradient>
<linearGradient id="d76" gradientUnits="userSpaceOnUse" x1="1102.5" x2="1393.5"><stop offset="0" stop-color="#04ffb6"/><stop offset="0.03093" stop-color="#18ffba"/><stop offset="0.1031" stop-color="#62ffc3"/><stop offset="0.1615" stop-color="#a7ffcb"/><stop offset="0.2268" stop-color="#fffed5"/><stop offset="0.2749" stop-color="#ffc4ab"/><stop offset="0.3299" stop-color="#ff968a"/><stop offset="0.3952" stop-color="#ff716f"/><stop offset="0.4742" stop-color="#ff5159"/><stop offset="0.5739" stop-color="#ff3645"/><stop offset="0.6942" stop-color="#ff2035"/><stop offset="0.8454" stop-color="#ff0d28"/><stop offset="1" stop-color="#ff001d"/></linearGradient>
<linearGradient id="d77" gradientUnits="userSpaceOnUse" x1="975.5" x2="1575.5"><stop offset="0" stop-color="#009953"/><stop offset="0.1983" stop-color="#00996f"/><stop offset="0.215" stop-color="#049972"/><stop offset="0.6883" stop-color="#990013"/><stop offset="0.81" stop-color="#990007"/><stop offset="1" stop-color="#990003"/></linearGradient>
<linearGradient id="d78" gradientUnits="userSpaceOnUse" x1="1103.5" x2="1391.5"><stop offset="0" stop-color="#04ffbe"/><stop offset="0.03472" stop-color="#1effc2"/><stop offset="0.1042" stop-color="#65ffcb"/><stop offset="0.1597" stop-color="#a7ffd4"/><stop offset="0.2257" stop-color="#fffdde"/><stop offset="0.2743" stop-color="#ffc3b2"/><stop offset="0.3299" stop-color="#ff9590"/><stop offset="0.3958" stop-color="#ff7074"/><stop offset="0.4757" stop-color="#ff505c"/><stop offset="0.5764" stop-color="#ff3548"/><stop offset="0.6944" stop-color="#ff2038"/><stop offset="0.8472" stop-color="#ff0c2a"/><stop offset="1" stop-color="#ff001f"/></linearGradient>
<linearGradient id="d79" gradientUnits="userSpaceOnUse" x1="976.5" x2="1575.5"><stop offset="0" stop-color="#009957"/><stop offset="0.1987" stop-color="#009974"/><stop offset="0.2154" stop-color="#049977"/><stop offset="0.6845" stop-color="#990015"/><stop offset="0.813" stop-color="#990007"/><stop offset="1" stop-color="#990004"/></linearGradient>
<linearGradient id="d80" gradientUnits="userSpaceOnUse" x1="1103.5" x2="1389.5"><stop offset="0" stop-color="#04ffc5"/><stop offset="0.03147" stop-color="#1affc9"/><stop offset="0.1014" stop-color="#61ffd3"/><stop offset="0.1573" stop-color="#a3ffdc"/><stop offset="0.2273" stop-color="#fffce6"/><stop offset="0.2727" stop-color="#ffc6bc"/><stop offset="0.3287" stop-color="#ff9797"/><stop offset="0.3951" stop-color="#ff707a"/><stop offset="0.4755" stop-color="#ff5161"/><stop offset="0.5734" stop-color="#ff364c"/><stop offset="0.6923" stop-color="#ff203b"/><stop offset="0.8462" stop-color="#ff0d2c"/><stop offset="1" stop-color="#ff0022"/></linearGradient>
<linearGradient id="d81" gradientUnits="userSpaceOnUse" x1="976.5" x2="1575.5"><stop offset="0" stop-color="#00995a"/><stop offset="0.1987" stop-color="#009978"/><stop offset="0.2154" stop-color="#04997b"/><stop offset="0.6811" stop-color="#990016"/><stop offset="0.8164" stop-color="#990007"/><stop offset="1" stop-color="#990004"/></linearGradient>
<linearGradient id="d82" gradientUnits="userSpaceOnUse" x1="1103.5" x2="1387.5"><stop offset="0" stop-color="#04ffcc"/><stop offset="0.03169" stop-color="#19ffd0"/><stop offset="0.09859" stop-color="#5dffda"/><stop offset="0.1549" stop-color="#9effe4"/><stop offset="0.2254" stop-color="#fefff1"/><stop offset="0.2289" stop-color="#fffbef"/><stop offset="0.2746" stop-color="#ffc5c3"/><stop offset="0.331" stop-color="#ff969d"/><stop offset="0.3979" stop-color="#ff6f7e"/><stop offset="0.4789" stop-color="#ff5065"/><stop offset="0.5775" stop-color="#ff3550"/><stop offset="0.6972" stop-color="#ff1f3e"/><stop offset="0.8486" stop-color="#ff0c2f"/><stop offset="1" stop-color="#ff0024"/></linearGradient>
<linearGradient id="d83" gradientUnits="userSpaceOnUse" x1="977.5" x2="1573.5"><stop offset="0" stop-color="#00995d"/><stop offset="0.198" stop-color="#00997c"/><stop offset="0.2148" stop-color="#04997f"/><stop offset="0.6795" stop-color="#990017"/><stop offset="0.8205" stop-color="#990008"/><stop offset="1" stop-color="#990004"/></linearGradient>
<linearGradient id="d84" gradientUnits="userSpaceOnUse" x1="1104.5" x2="1385.5"><stop offset="0" stop-color="#05ffd4"/><stop offset="0.03559" stop-color="#1effd9"/><stop offset="0.1068" stop-color="#68ffe4"/><stop offset="0.1673" stop-color="#b1ffef"/><stop offset="0.2242" stop-color="#fffffb"/><stop offset="0.274" stop-color="#ffc4ca"/><stop offset="0.3274" stop-color="#ff97a5"/><stop offset="0.395" stop-color="#ff7084"/><stop offset="0.4733" stop-color="#ff516b"/><stop offset="0.573" stop-color="#ff3654"/><stop offset="0.6904" stop-color="#ff2042"/><stop offset="0.8434" stop-color="#ff0d32"/><stop offset="1" stop-color="#ff0026"/></linearGradient>
<linearGradient id="d85" gradientUnits="userSpaceOnUse" x1="978.5" x2="1571.5"><stop offset="0" stop-color="#009961"/><stop offset="0.199" stop-color="#009981"/><stop offset="0.2159" stop-color="#049984"/><stop offset="0.6779" stop-color="#990019"/><stop offset="0.8263" stop-color="#990008"/><stop offset="1" stop-color="#990005"/></linearGradient>
<linearGradient id="d86" gradientUnits="userSpaceOnUse" x1="1104.5" x2="1383.5"><stop offset="0" stop-color="#04ffdb"/><stop offset="0.03226" stop-color="#1affe0"/><stop offset="0.09677" stop-color="#5cffeb"/><stop offset="0.1505" stop-color="#9afff5"/><stop offset="0.2007" stop-color="#dcffff"/><stop offset="0.2294" stop-color="#fef9ff"/><stop offset="0.2796" stop-color="#ffbfce"/><stop offset="0.3333" stop-color="#ff93a8"/><stop offset="0.4014" stop-color="#ff6d88"/><stop offset="0.4803" stop-color="#ff4f6d"/><stop offset="0.5806" stop-color="#ff3456"/><stop offset="0.6989" stop-color="#ff1f44"/><stop offset="0.8495" stop-color="#ff0c34"/><stop offset="1" stop-color="#ff0028"/></linearGradient>
<linearGradient id="d87" gradientUnits="userSpaceOnUse" x1="978.5" x2="1569.5"><stop offset="0" stop-color="#009964"/><stop offset="0.1997" stop-color="#009985"/><stop offset="0.2166" stop-color="#049989"/><stop offset="0.6768" stop-color="#99001a"/><stop offset="0.8308" stop-color="#990009"/><stop offset="1" stop-color="#990005"/></linearGradient>
<linearGradient id="d88" gradientUnits="userSpaceOnUse" x1="1104.5" x2="1381.5"><stop offset="0" stop-color="#04ffe3"/><stop offset="0.02888" stop-color="#16ffe7"/><stop offset="0.07942" stop-color="#48fff0"/><stop offset="0.1588" stop-color="#a3ffff"/><stop offset="0.2383" stop-color="#feeeff"/><stop offset="0.2888" stop-color="#ffb7cf"/><stop offset="0.343" stop-color="#ff8eaa"/><stop offset="0.4079" stop-color="#ff6b8b"/><stop offset="0.4874" stop-color="#ff4d70"/><stop offset="0.5848" stop-color="#ff345a"/><stop offset="0.704" stop-color="#ff1e46"/><stop offset="0.852" stop-color="#ff0c36"/><stop offset="1" stop-color="#ff002a"/></linearGradient>
<linearGradient id="d89" gradientUnits="userSpaceOnUse" x1="979.5" x2="1567.5"><stop offset="0" stop-color="#009968"/><stop offset="0.199" stop-color="#00998a"/><stop offset="0.216" stop-color="#04998d"/><stop offset="0.6752" stop-color="#99001b"/><stop offset="0.835" stop-color="#990009"/><stop offset="1" stop-color="#990005"/></linearGradient>
<linearGradient id="d90" gradientUnits="userSpaceOnUse" x1="1105.5" x2="1379.5"><stop offset="0" stop-color="#05ffeb"/><stop offset="0.0365" stop-color="#1ffff1"/><stop offset="0.1131" stop-color="#6fffff"/><stop offset="0.2445" stop-color="#fee3ff"/><stop offset="0.2956" stop-color="#ffb0d0"/><stop offset="0.3504" stop-color="#ff88ab"/><stop offset="0.4161" stop-color="#ff678d"/><stop offset="0.4964" stop-color="#ff4a72"/><stop offset="0.5912" stop-color="#ff325c"/><stop offset="0.708" stop-color="#ff1e49"/><stop offset="0.8577" stop-color="#ff0b38"/><stop offset="1" stop-color="#ff002c"/></linearGradient>
<linearGradient id="d91" gradientUnits="userSpaceOnUse" x1="980.5" x2="1565.5"><stop offset="0" stop-color="#00996c"/><stop offset="0.2" stop-color="#00998f"/><stop offset="0.2171" stop-color="#059992"/><stop offset="0.6735" stop-color="#99001d"/><stop offset="0.841" stop-color="#990009"/><stop offset="1" stop-color="#990006"/></linearGradient>
<linearGradient id="d92" gradientUnits="userSpaceOnUse" x1="1105.5" x2="1377.5"><stop offset="0" stop-color="#04fff3"/><stop offset="0.02206" stop-color="#12fff6"/><stop offset="0.05147" stop-color="#2dfffc"/><stop offset="0.07353" stop-color="#43feff"/><stop offset="0.2537" stop-color="#fed9ff"/><stop offset="0.3051" stop-color="#ffa8d1"/><stop offset="0.3603" stop-color="#ff83ad"/><stop offset="0.4265" stop-color="#ff638e"/><stop offset="0.5037" stop-color="#ff4875"/><stop offset="0.5993" stop-color="#ff315e"/><stop offset="0.7132" stop-color="#ff1d4c"/><stop offset="0.8603" stop-color="#ff0b3b"/><stop offset="1" stop-color="#ff002f"/></linearGradient>
<linearGradient id="d93" gradientUnits="userSpaceOnUse" x1="980.5" x2="1563.5"><stop offset="0" stop-color="#009970"/><stop offset="0.2007" stop-color="#009993"/><stop offset="0.2178" stop-color="#049997"/><stop offset="0.6724" stop-color="#99001e"/><stop offset="0.8456" stop-color="#99000a"/><stop offset="1" stop-color="#990006"/></linearGradient>
<linearGradient id="d94" gradientUnits="userSpaceOnUse" x1="1105.5" x2="1375.5"><stop offset="0" stop-color="#04fffa"/><stop offset="0.02593" stop-color="#14ffff"/><stop offset="0.07407" stop-color="#40f6ff"/><stop offset="0.263" stop-color="#fed0ff"/><stop offset="0.3148" stop-color="#ffa1d2"/><stop offset="0.3704" stop-color="#ff7eae"/><stop offset="0.437" stop-color="#ff5f90"/><stop offset="0.5148" stop-color="#ff4576"/><stop offset="0.6111" stop-color="#ff2e60"/><stop offset="0.7222" stop-color="#ff1c4e"/><stop offset="1" stop-color="#ff0031"/></linearGradient>
<linearGradient id="d95" gradientUnits="userSpaceOnUse" x1="981.5" x2="1561.5"><stop offset="0" stop-color="#009973"/><stop offset="0.2" stop-color="#009998"/><stop offset="0.2172" stop-color="#049699"/><stop offset="0.6707" stop-color="#990020"/><stop offset="0.8517" stop-color="#99000a"/><stop offset="1" stop-color="#990006"/></linearGradient>
<linearGradient id="d96" gradientUnits="userSpaceOnUse" x1="1106.5" x2="1373.5"><stop offset="0" stop-color="#05fbff"/><stop offset="0.02622" stop-color="#15f7ff"/><stop offset="0.0824" stop-color="#48ecff"/><stop offset="0.2697" stop-color="#fec7ff"/><stop offset="0.3184" stop-color="#ff9ed6"/><stop offset="0.3745" stop-color="#ff7ab2"/><stop offset="0.4419" stop-color="#ff5c93"/><stop offset="0.5206" stop-color="#ff4379"/><stop offset="0.6142" stop-color="#ff2d63"/><stop offset="0.7266" stop-color="#ff1b50"/><stop offset="1" stop-color="#ff0034"/></linearGradient>
<linearGradient id="d97" gradientUnits="userSpaceOnUse" x1="982.5" x2="1559.5"><stop offset="0" stop-color="#009977"/><stop offset="0.182" stop-color="#009999"/><stop offset="0.2184" stop-color="#049199"/><stop offset="0.669" stop-color="#990021"/><stop offset="0.8562" stop-color="#99000a"/><stop offset="1" stop-color="#990007"/></linearGradient>
<linearGradient id="d98" gradientUnits="userSpaceOnUse" x1="1106.5" x2="1371.5"><stop offset="0" stop-color="#04f4ff"/><stop offset="0.02642" stop-color="#14efff"/><stop offset="0.08302" stop-color="#45e5ff"/><stop offset="0.2792" stop-color="#febeff"/><stop offset="0.3283" stop-color="#ff97d6"/><stop offset="0.3849" stop-color="#ff76b3"/><stop offset="0.4491" stop-color="#ff5a96"/><stop offset="0.5283" stop-color="#ff417c"/><stop offset="0.6226" stop-color="#ff2c65"/><stop offset="0.7321" stop-color="#ff1a53"/><stop offset="1" stop-color="#ff0036"/></linearGradient>
<linearGradient id="d99" gradientUnits="userSpaceOnUse" x1="982.5" x2="1557.5"><stop offset="0" stop-color="#00997b"/><stop offset="0.1617" stop-color="#009999"/><stop offset="0.2191" stop-color="#048d99"/><stop offset="0.6678" stop-color="#990023"/><stop offset="0.8609" stop-color="#99000b"/><stop offset="1" stop-color="#990007"/></linearGradient>
<linearGradient id="d100" gradientUnits="userSpaceOnUse" x1="1106.5" x2="1369.5"><stop offset="0" stop-color="#04ecff"/><stop offset="0.02662" stop-color="#12e8ff"/><stop offset="0.08745" stop-color="#46ddff"/><stop offset="0.289" stop-color="#feb6ff"/><stop offset="0.3422" stop-color="#ff8ed4"/><stop offset="0.3954" stop-color="#ff71b4"/><stop offset="0.4601" stop-color="#ff5697"/><stop offset="0.5361" stop-color="#ff3f7e"/><stop offset="0.6274" stop-color="#ff2b69"/><stop offset="0.73" stop-color="#ff1b57"/><stop offset="1" stop-color="#ff0038"/></linearGradient>
<linearGradient id="d101" gradientUnits="userSpaceOnUse" x1="983.5" x2="1555.5"><stop offset="0" stop-color="#00997f"/><stop offset="0.1399" stop-color="#009999"/><stop offset="0.2185" stop-color="#048999"/><stop offset="0.6661" stop-color="#990124"/><stop offset="0.8654" stop-color="#99000b"/><stop offset="1" stop-color="#990008"/></linearGradient>
<linearGradient id="d102" gradientUnits="userSpaceOnUse" x1="1107.5" x2="1367.5"><stop offset="0" stop-color="#05e5ff"/><stop offset="0.02692" stop-color="#14e0ff"/><stop offset="0.09615" stop-color="#4dd4ff"/><stop offset="0.2962" stop-color="#feaeff"/><stop offset="0.35" stop-color="#ff88d5"/><stop offset="0.4038" stop-color="#ff6cb5"/><stop offset="0.4692" stop-color="#ff5399"/><stop offset="0.5462" stop-color="#ff3c80"/><stop offset="0.7346" stop-color="#ff1a59"/><stop offset="1" stop-color="#ff003b"/></linearGradient>
<linearGradient id="d103" gradientUnits="userSpaceOnUse" x1="984.5" x2="1553.5"><stop offset="0" stop-color="#009983"/><stop offset="0.1178" stop-color="#009999"/><stop offset="0.2039" stop-color="#008899"/><stop offset="0.2197" stop-color="#048499"/><stop offset="0.6643" stop-color="#990126"/><stop offset="0.8699" stop-color="#99000c"/><stop offset="1" stop-color="#990008"/></linearGradient>
<linearGradient id="d104" gradientUnits="userSpaceOnUse" x1="1107.5" x2="1365.5"><stop offset="0" stop-color="#04deff"/><stop offset="0.02713" stop-color="#13daff"/><stop offset="0.0969" stop-color="#4aceff"/><stop offset="0.3062" stop-color="#fea7ff"/><stop offset="0.3605" stop-color="#ff83d6"/><stop offset="0.4147" stop-color="#ff68b7"/><stop offset="0.4806" stop-color="#ff4f9a"/><stop offset="0.5543" stop-color="#ff3b83"/><stop offset="0.7403" stop-color="#ff195c"/><stop offset="1" stop-color="#ff003e"/></linearGradient>
<linearGradient id="d105" gradientUnits="userSpaceOnUse" x1="985.5" x2="1551.5"><stop offset="0" stop-color="#009987"/><stop offset="0.09541" stop-color="#009999"/><stop offset="0.2032" stop-color="#008499"/><stop offset="0.2191" stop-color="#048199"/><stop offset="0.6625" stop-color="#990127"/><stop offset="0.8728" stop-color="#99000c"/><stop offset="1" stop-color="#990008"/></linearGradient>
<linearGradient id="d106" gradientUnits="userSpaceOnUse" x1="1107.5" x2="1363.5"><stop offset="0" stop-color="#04d8ff"/><stop offset="0.02734" stop-color="#11d3ff"/><stop offset="0.09766" stop-color="#47c8ff"/><stop offset="0.3164" stop-color="#fea0ff"/><stop offset="0.3711" stop-color="#ff7dd7"/><stop offset="0.4258" stop-color="#ff63b8"/><stop offset="0.4883" stop-color="#ff4d9d"/><stop offset="0.5625" stop-color="#ff3985"/><stop offset="0.7461" stop-color="#ff185f"/><stop offset="1" stop-color="#ff0040"/></linearGradient>
<linearGradient id="d107" gradientUnits="userSpaceOnUse" x1="985.5" x2="1549.5"><stop offset="0" stop-color="#00998b"/><stop offset="0.07447" stop-color="#009999"/><stop offset="0.2128" stop-color="#017e99"/><stop offset="0.6613" stop-color="#990129"/><stop offset="0.8777" stop-color="#99000d"/><stop offset="1" stop-color="#990009"/></linearGradient>
<linearGradient id="d108" gradientUnits="userSpaceOnUse" x1="1108.5" x2="1361.5"><stop offset="0" stop-color="#04d1ff"/><stop offset="0.03162" stop-color="#16ccff"/><stop offset="0.1107" stop-color="#51bfff"/><stop offset="0.3241" stop-color="#fe99ff"/><stop offset="0.3755" stop-color="#ff7ada"/><stop offset="0.4308" stop-color="#ff61bb"/><stop offset="0.4941" stop-color="#ff4ba0"/><stop offset="0.5692" stop-color="#ff3788"/><stop offset="0.751" stop-color="#ff1861"/><stop offset="1" stop-color="#ff0043"/></linearGradient>
<linearGradient id="d109" gradientUnits="userSpaceOnUse" x1="986.5" x2="1547.5"><stop offset="0" stop-color="#009990"/><stop offset="0.05169" stop-color="#009999"/><stop offset="0.2139" stop-color="#017a99"/><stop offset="0.6595" stop-color="#99012b"/><stop offset="0.877" stop-color="#99000e"/><stop offset="1" stop-color="#990009"/></linearGradient>
<linearGradient id="d110" gradientUnits="userSpaceOnUse" x1="1108.5" x2="1359.5"><stop offset="0" stop-color="#04cbff"/><stop offset="0.03187" stop-color="#14c6ff"/><stop offset="0.1116" stop-color="#4eb9ff"/><stop offset="0.3347" stop-color="#fe92ff"/><stop offset="0.3904" stop-color="#ff73d8"/><stop offset="0.4422" stop-color="#ff5dbc"/><stop offset="0.506" stop-color="#ff47a1"/><stop offset="0.5777" stop-color="#ff358a"/><stop offset="0.757" stop-color="#ff1764"/><stop offset="1" stop-color="#ff0045"/></linearGradient>
<linearGradient id="d111" gradientUnits="userSpaceOnUse" x1="987.5" x2="1545.5"><stop offset="0" stop-color="#009994"/><stop offset="0.02688" stop-color="#009999"/><stop offset="0.2133" stop-color="#017799"/><stop offset="0.6577" stop-color="#99012c"/><stop offset="0.8728" stop-color="#99000f"/><stop offset="1" stop-color="#99000a"/></linearGradient>
<linearGradient id="d112" gradientUnits="userSpaceOnUse" x1="1108.5" x2="1357.5"><stop offset="0" stop-color="#03c5ff"/><stop offset="0.03213" stop-color="#13c0ff"/><stop offset="0.1124" stop-color="#4cb4ff"/><stop offset="0.3454" stop-color="#fe8cff"/><stop offset="0.4016" stop-color="#ff6ed9"/><stop offset="0.4538" stop-color="#ff59bd"/><stop offset="0.5141" stop-color="#ff45a4"/><stop offset="0.5863" stop-color="#ff338d"/><stop offset="0.7631" stop-color="#ff1667"/><stop offset="1" stop-color="#ff0048"/></linearGradient>
<linearGradient id="d113" gradientUnits="userSpaceOnUse" x1="987.5" x2="1543.5"><stop offset="0" stop-color="#009998"/><stop offset="0.2158" stop-color="#017399"/><stop offset="0.6565" stop-color="#99012e"/><stop offset="0.8651" stop-color="#990011"/><stop offset="1" stop-color="#99000a"/></linearGradient>
<linearGradient id="d114" gradientUnits="userSpaceOnUse" x1="1108.5" x2="1355.5"><stop offset="0" stop-color="#03c0ff"/><stop offset="0.03239" stop-color="#12bbff"/><stop offset="0.1134" stop-color="#49afff"/><stop offset="0.3563" stop-color="#fe86ff"/><stop offset="0.413" stop-color="#ff69d9"/><stop offset="0.4656" stop-color="#ff55be"/><stop offset="0.5263" stop-color="#ff42a5"/><stop offset="0.5992" stop-color="#ff318e"/><stop offset="0.7692" stop-color="#ff1669"/><stop offset="1" stop-color="#ff004b"/></linearGradient>
<linearGradient id="d115" gradientUnits="userSpaceOnUse" x1="988.5" x2="1542.5"><stop offset="0" stop-color="#009699"/><stop offset="0.2148" stop-color="#017099"/><stop offset="0.6552" stop-color="#99002f"/><stop offset="0.8592" stop-color="#990012"/><stop offset="1" stop-color="#99000a"/></linearGradient>
<linearGradient id="d116" gradientUnits="userSpaceOnUse" x1="1109.5" x2="1353.5"><stop offset="0" stop-color="#04baff"/><stop offset="0.03279" stop-color="#13b5ff"/><stop offset="0.127" stop-color="#52a7ff"/><stop offset="0.3648" stop-color="#fe80ff"/><stop offset="0.4221" stop-color="#ff65da"/><stop offset="0.4754" stop-color="#ff51bf"/><stop offset="0.6066" stop-color="#ff2f90"/><stop offset="0.7746" stop-color="#ff156c"/><stop offset="1" stop-color="#ff014e"/></linearGradient>
<linearGradient id="d117" gradientUnits="userSpaceOnUse" x1="989.5" x2="1540.5"><stop offset="0" stop-color="#009199"/><stop offset="0.216" stop-color="#016d99"/><stop offset="0.6534" stop-color="#990031"/><stop offset="0.8512" stop-color="#990014"/><stop offset="1" stop-color="#99000b"/></linearGradient>
<linearGradient id="d118" gradientUnits="userSpaceOnUse" x1="1109.5" x2="1352.5"><stop offset="0" stop-color="#03b5ff"/><stop offset="0.03292" stop-color="#12b0ff"/><stop offset="0.1276" stop-color="#50a2ff"/><stop offset="0.3745" stop-color="#fe7aff"/><stop offset="0.428" stop-color="#ff62dd"/><stop offset="0.4815" stop-color="#ff4fc2"/><stop offset="0.6132" stop-color="#ff2d93"/><stop offset="0.7778" stop-color="#ff146f"/><stop offset="1" stop-color="#ff0050"/></linearGradient>
<linearGradient id="d119" gradientUnits="userSpaceOnUse" x1="990.5" x2="1538.5"><stop offset="0" stop-color="#008d99"/><stop offset="0.2153" stop-color="#016a99"/><stop offset="0.6515" stop-color="#990033"/><stop offset="0.8449" stop-color="#990016"/><stop offset="1" stop-color="#99000b"/></linearGradient>
<linearGradient id="d120" gradientUnits="userSpaceOnUse" x1="1109.5" x2="1350.5"><stop offset="0" stop-color="#03b0ff"/><stop offset="0.0332" stop-color="#11abff"/><stop offset="0.1286" stop-color="#4d9eff"/><stop offset="0.3859" stop-color="#fe75ff"/><stop offset="0.4398" stop-color="#ff5dde"/><stop offset="0.4938" stop-color="#ff4bc3"/><stop offset="0.6224" stop-color="#ff2c95"/><stop offset="0.7842" stop-color="#ff1371"/><stop offset="1" stop-color="#ff0053"/></linearGradient>
<linearGradient id="d121" gradientUnits="userSpaceOnUse" x1="991.5" x2="1536.5"><stop offset="0" stop-color="#008999"/><stop offset="0.2147" stop-color="#016799"/><stop offset="0.6495" stop-color="#990035"/><stop offset="0.8385" stop-color="#990018"/><stop offset="1" stop-color="#99000c"/></linearGradient>
<linearGradient id="d122" gradientUnits="userSpaceOnUse" x1="1110.5" x2="1348.5"><stop offset="0" stop-color="#03abff"/><stop offset="0.03361" stop-color="#12a6ff"/><stop offset="0.1387" stop-color="#5397ff"/><stop offset="0.395" stop-color="#fe70ff"/><stop offset="0.4496" stop-color="#ff59de"/><stop offset="0.5042" stop-color="#ff47c3"/><stop offset="0.6303" stop-color="#ff2a97"/><stop offset="0.7899" stop-color="#ff1374"/><stop offset="1" stop-color="#ff0056"/></linearGradient>
<linearGradient id="d123" gradientUnits="userSpaceOnUse" x1="991.5" x2="1534.5"><stop offset="0" stop-color="#008699"/><stop offset="0.2173" stop-color="#016499"/><stop offset="0.6483" stop-color="#990137"/><stop offset="0.8324" stop-color="#99001a"/><stop offset="1" stop-color="#99000c"/></linearGradient>
<linearGradient id="d124" gradientUnits="userSpaceOnUse" x1="1110.5" x2="1346.5"><stop offset="0" stop-color="#03a6ff"/><stop offset="0.0339" stop-color="#11a2ff"/><stop offset="0.1441" stop-color="#5392ff"/><stop offset="0.4068" stop-color="#fe6bff"/><stop offset="0.5127" stop-color="#ff45c6"/><stop offset="0.6398" stop-color="#ff299a"/><stop offset="0.7966" stop-color="#ff1277"/><stop offset="1" stop-color="#ff0059"/></linearGradient>
<linearGradient id="d125" gradientUnits="userSpaceOnUse" x1="992.5" x2="1532.5"><stop offset="0" stop-color="#008299"/><stop offset="0.2167" stop-color="#016199"/><stop offset="0.6463" stop-color="#990139"/><stop offset="0.8259" stop-color="#99001c"/><stop offset="1" stop-color="#99000c"/></linearGradient>
<linearGradient id="d126" gradientUnits="userSpaceOnUse" x1="1110.5" x2="1344.5"><stop offset="0" stop-color="#03a2ff"/><stop offset="0.03419" stop-color="#109eff"/><stop offset="0.141" stop-color="#4e8fff"/><stop offset="0.4188" stop-color="#fe66ff"/><stop offset="0.5256" stop-color="#ff42c7"/><stop offset="0.6496" stop-color="#ff279c"/><stop offset="0.8034" stop-color="#ff117a"/><stop offset="1" stop-color="#ff005d"/></linearGradient>
<linearGradient id="d127" gradientUnits="userSpaceOnUse" x1="993.5" x2="1530.5"><stop offset="0" stop-color="#007f99"/><stop offset="0.2179" stop-color="#015f99"/><stop offset="0.6443" stop-color="#99013b"/><stop offset="0.8212" stop-color="#99001d"/><stop offset="1" stop-color="#99000d"/></linearGradient>
<linearGradient id="d128" gradientUnits="userSpaceOnUse" x1="1111.5" x2="1342.5"><stop offset="0" stop-color="#039dff"/><stop offset="0.03896" stop-color="#1498ff"/><stop offset="0.1558" stop-color="#5689ff"/><stop offset="0.4286" stop-color="#fe61ff"/><stop offset="0.5325" stop-color="#ff40c9"/><stop offset="0.6537" stop-color="#ff26a0"/><stop offset="0.8052" stop-color="#ff117d"/><stop offset="1" stop-color="#ff0060"/></linearGradient>
<linearGradient id="d129" gradientUnits="userSpaceOnUse" x1="994.5" x2="1528.5"><stop offset="0" stop-color="#007b99"/><stop offset="0.2172" stop-color="#015c99"/><stop offset="0.6423" stop-color="#99013d"/><stop offset="0.8146" stop-color="#99001f"/><stop offset="1" stop-color="#99000d"/></linearGradient>
<linearGradient id="d130" gradientUnits="userSpaceOnUse" x1="1111.5" x2="1340.5"><stop offset="0" stop-color="#0399ff"/><stop offset="0.0393" stop-color="#1294ff"/><stop offset="0.1572" stop-color="#5485ff"/><stop offset="0.441" stop-color="#fe5cff"/><stop offset="0.5459" stop-color="#ff3cca"/><stop offset="0.6638" stop-color="#ff24a2"/><stop offset="0.8122" stop-color="#ff1080"/><stop offset="1" stop-color="#ff0063"/></linearGradient>
<linearGradient id="d131" gradientUnits="userSpaceOnUse" x1="995.5" x2="1526.5"><stop offset="0" stop-color="#007899"/><stop offset="0.2185" stop-color="#025a99"/><stop offset="0.6403" stop-color="#99013f"/><stop offset="0.8098" stop-color="#990021"/><stop offset="1" stop-color="#99000e"/></linearGradient>
<linearGradient id="d132" gradientUnits="userSpaceOnUse" x1="1111.5" x2="1338.5"><stop offset="0" stop-color="#0395ff"/><stop offset="0.03965" stop-color="#1191ff"/><stop offset="0.1586" stop-color="#5281ff"/><stop offset="0.4537" stop-color="#fe58ff"/><stop offset="0.5551" stop-color="#ff3acd"/><stop offset="0.674" stop-color="#ff23a4"/><stop offset="0.815" stop-color="#ff1084"/><stop offset="1" stop-color="#ff0066"/></linearGradient>
<linearGradient id="d133" gradientUnits="userSpaceOnUse" x1="995.5" x2="1524.5"><stop offset="0" stop-color="#007599"/><stop offset="0.2193" stop-color="#015799"/><stop offset="0.6389" stop-color="#990141"/><stop offset="0.8053" stop-color="#990023"/><stop offset="1" stop-color="#99000e"/></linearGradient>
<linearGradient id="d134" gradientUnits="userSpaceOnUse" x1="1112.5" x2="1336.5"><stop offset="0" stop-color="#0391ff"/><stop offset="0.04018" stop-color="#138cff"/><stop offset="0.1741" stop-color="#597bff"/><stop offset="0.4643" stop-color="#fe54ff"/><stop offset="0.567" stop-color="#ff37cd"/><stop offset="0.683" stop-color="#ff21a6"/><stop offset="0.8214" stop-color="#ff0f86"/><stop offset="1" stop-color="#ff006a"/></linearGradient>
<linearGradient id="d135" gradientUnits="userSpaceOnUse" x1="996.5" x2="1522.5"><stop offset="0" stop-color="#007299"/><stop offset="0.2186" stop-color="#015599"/><stop offset="0.6369" stop-color="#990143"/><stop offset="0.8004" stop-color="#990025"/><stop offset="1" stop-color="#99000f"/></linearGradient>
<linearGradient id="d136" gradientUnits="userSpaceOnUse" x1="1112.5" x2="1334.5"><stop offset="0" stop-color="#038dff"/><stop offset="0.04054" stop-color="#1289ff"/><stop offset="0.1757" stop-color="#5778ff"/><stop offset="0.4775" stop-color="#fe50ff"/><stop offset="0.5811" stop-color="#ff34ce"/><stop offset="0.6937" stop-color="#ff20a9"/><stop offset="0.8288" stop-color="#ff0e89"/><stop offset="1" stop-color="#ff006d"/></linearGradient>
<linearGradient id="d137" gradientUnits="userSpaceOnUse" x1="997.5" x2="1520.5"><stop offset="0" stop-color="#006f99"/><stop offset="0.2199" stop-color="#025399"/><stop offset="0.6348" stop-color="#990145"/><stop offset="0.7973" stop-color="#990027"/><stop offset="1" stop-color="#990010"/></linearGradient>
<linearGradient id="d138" gradientUnits="userSpaceOnUse" x1="1112.5" x2="1332.5"><stop offset="0" stop-color="#038aff"/><stop offset="0.04091" stop-color="#1185ff"/><stop offset="0.1773" stop-color="#5575ff"/><stop offset="0.4909" stop-color="#fe4cff"/><stop offset="0.5909" stop-color="#ff32d1"/><stop offset="0.7" stop-color="#ff1fac"/><stop offset="0.8318" stop-color="#ff0e8d"/><stop offset="1" stop-color="#ff0071"/></linearGradient>
<linearGradient id="d139" gradientUnits="userSpaceOnUse" x1="998.5" x2="1518.5"><stop offset="0" stop-color="#006c99"/><stop offset="0.2192" stop-color="#015199"/><stop offset="0.6327" stop-color="#990147"/><stop offset="0.7942" stop-color="#990028"/><stop offset="1" stop-color="#990010"/></linearGradient>
<linearGradient id="d140" gradientUnits="userSpaceOnUse" x1="1113.5" x2="1330.5"><stop offset="0" stop-color="#0386ff"/><stop offset="0.04147" stop-color="#1281ff"/><stop offset="0.1935" stop-color="#5c6fff"/><stop offset="0.5023" stop-color="#fe48ff"/><stop offset="0.6037" stop-color="#ff2fd1"/><stop offset="0.7097" stop-color="#ff1dae"/><stop offset="0.8387" stop-color="#ff0d90"/><stop offset="1" stop-color="#ff0174"/></linearGradient>
<linearGradient id="d141" gradientUnits="userSpaceOnUse" x1="999.5" x2="1516.5"><stop offset="0" stop-color="#006999"/><stop offset="0.2205" stop-color="#024e99"/><stop offset="0.6306" stop-color="#990149"/><stop offset="0.793" stop-color="#99002a"/><stop offset="1" stop-color="#990011"/></linearGradient>
<linearGradient id="d142" gradientUnits="userSpaceOnUse" x1="1113.5" x2="1328.5"><stop offset="0" stop-color="#0383ff"/><stop offset="0.04186" stop-color="#117eff"/><stop offset="0.1953" stop-color="#5a6cff"/><stop offset="0.5163" stop-color="#fe44ff"/><stop offset="0.614" stop-color="#ff2dd3"/><stop offset="0.7209" stop-color="#ff1cb0"/><stop offset="0.8465" stop-color="#ff0c93"/><stop offset="1" stop-color="#ff0178"/></linearGradient>
<linearGradient id="d143" gradientUnits="userSpaceOnUse" x1="1000.5" x2="1514.5"><stop offset="0" stop-color="#006799"/><stop offset="0.2198" stop-color="#014c99"/><stop offset="0.6284" stop-color="#99014c"/><stop offset="0.7918" stop-color="#99002b"/><stop offset="1" stop-color="#990012"/></linearGradient>
<linearGradient id="d144" gradientUnits="userSpaceOnUse" x1="1113.5" x2="1326.5"><stop offset="0" stop-color="#027fff"/><stop offset="0.04225" stop-color="#107bff"/><stop offset="0.1972" stop-color="#5869ff"/><stop offset="0.5305" stop-color="#fe40ff"/><stop offset="0.6291" stop-color="#ff2bd4"/><stop offset="0.7324" stop-color="#ff1ab3"/><stop offset="0.8498" stop-color="#ff0c97"/><stop offset="1" stop-color="#ff017c"/></linearGradient>
<linearGradient id="d145" gradientUnits="userSpaceOnUse" x1="1000.5" x2="1512.5"><stop offset="0" stop-color="#006499"/><stop offset="0.2207" stop-color="#014b99"/><stop offset="0.627" stop-color="#99014e"/><stop offset="0.791" stop-color="#99002d"/><stop offset="1" stop-color="#990013"/></linearGradient>
<linearGradient id="d146" gradientUnits="userSpaceOnUse" x1="1114.5" x2="1324.5"><stop offset="0" stop-color="#037cff"/><stop offset="0.04286" stop-color="#1177ff"/><stop offset="0.2095" stop-color="#5c65ff"/><stop offset="0.5429" stop-color="#fe3dff"/><stop offset="0.6381" stop-color="#ff29d6"/><stop offset="0.7381" stop-color="#ff19b6"/><stop offset="0.8571" stop-color="#ff0b9a"/><stop offset="1" stop-color="#ff0180"/></linearGradient>
<linearGradient id="d147" gradientUnits="userSpaceOnUse" x1="1001.5" x2="1510.5"><stop offset="0" stop-color="#006299"/><stop offset="0.222" stop-color="#024899"/><stop offset="0.6248" stop-color="#990151"/><stop offset="0.7878" stop-color="#99002f"/><stop offset="1" stop-color="#990014"/></linearGradient>
<linearGradient id="d148" gradientUnits="userSpaceOnUse" x1="1114.5" x2="1322.5"><stop offset="0" stop-color="#0379ff"/><stop offset="0.04327" stop-color="#1074ff"/><stop offset="0.2115" stop-color="#5a62ff"/><stop offset="0.5577" stop-color="#fe39ff"/><stop offset="0.6538" stop-color="#ff26d7"/><stop offset="0.75" stop-color="#ff18b8"/><stop offset="0.8606" stop-color="#ff0b9d"/><stop offset="1" stop-color="#ff0184"/></linearGradient>
<linearGradient id="d149" gradientUnits="userSpaceOnUse" x1="1002.5" x2="1509.5"><stop offset="0" stop-color="#006099"/><stop offset="0.2209" stop-color="#014799"/><stop offset="0.6213" stop-color="#990153"/><stop offset="0.787" stop-color="#990030"/><stop offset="1" stop-color="#990015"/></linearGradient>
<linearGradient id="d150" gradientUnits="userSpaceOnUse" x1="1114.5" x2="1320.5"><stop offset="0" stop-color="#0276ff"/><stop offset="0.04369" stop-color="#0f72ff"/><stop offset="0.2136" stop-color="#5860ff"/><stop offset="0.5728" stop-color="#fe36ff"/><stop offset="0.665" stop-color="#ff24d9"/><stop offset="0.7573" stop-color="#ff17bc"/><stop offset="0.8641" stop-color="#ff0ba1"/><stop offset="1" stop-color="#ff0188"/></linearGradient>
<linearGradient id="d151" gradientUnits="userSpaceOnUse" x1="1003.5" x2="1507.5"><stop offset="0" stop-color="#005d99"/><stop offset="0.2222" stop-color="#024599"/><stop offset="0.619" stop-color="#990156"/><stop offset="0.7837" stop-color="#990032"/><stop offset="1" stop-color="#990016"/></linearGradient>
<linearGradient id="d152" gradientUnits="userSpaceOnUse" x1="1115.5" x2="1318.5"><stop offset="0" stop-color="#0373ff"/><stop offset="0.04926" stop-color="#126eff"/><stop offset="0.2315" stop-color="#5e5bff"/><stop offset="0.5862" stop-color="#fe33ff"/><stop offset="0.6798" stop-color="#ff22da"/><stop offset="0.7685" stop-color="#ff15be"/><stop offset="0.8719" stop-color="#ff0aa4"/><stop offset="1" stop-color="#ff018c"/></linearGradient>
<linearGradient id="d153" gradientUnits="userSpaceOnUse" x1="1004.5" x2="1505.5"><stop offset="0" stop-color="#005b99"/><stop offset="0.2216" stop-color="#024399"/><stop offset="0.6168" stop-color="#990158"/><stop offset="0.7824" stop-color="#990034"/><stop offset="1" stop-color="#990017"/></linearGradient>
<linearGradient id="d154" gradientUnits="userSpaceOnUse" x1="1115.5" x2="1316.5"><stop offset="0" stop-color="#0370ff"/><stop offset="0.04975" stop-color="#116bff"/><stop offset="0.2338" stop-color="#5c58ff"/><stop offset="0.602" stop-color="#fe30ff"/><stop offset="0.6915" stop-color="#ff20dc"/><stop offset="0.7811" stop-color="#ff14c0"/><stop offset="1" stop-color="#ff0190"/></linearGradient>
<linearGradient id="d155" gradientUnits="userSpaceOnUse" x1="1005.5" x2="1503.5"><stop offset="0" stop-color="#005999"/><stop offset="0.2229" stop-color="#024199"/><stop offset="0.6145" stop-color="#99015b"/><stop offset="0.7811" stop-color="#990035"/><stop offset="1" stop-color="#990018"/></linearGradient>
<linearGradient id="d156" gradientUnits="userSpaceOnUse" x1="1115.5" x2="1314.5"><stop offset="0" stop-color="#026dff"/><stop offset="0.05025" stop-color="#1169ff"/><stop offset="0.2362" stop-color="#5a56ff"/><stop offset="0.6181" stop-color="#fe2dff"/><stop offset="0.7035" stop-color="#ff1ede"/><stop offset="0.7889" stop-color="#ff13c3"/><stop offset="1" stop-color="#ff0195"/></linearGradient>
<linearGradient id="d157" gradientUnits="userSpaceOnUse" x1="1006.5" x2="1501.5"><stop offset="0" stop-color="#005699"/><stop offset="0.2222" stop-color="#024099"/><stop offset="0.6121" stop-color="#99015e"/><stop offset="0.7798" stop-color="#990037"/><stop offset="1" stop-color="#990019"/></linearGradient>
<linearGradient id="d158" gradientUnits="userSpaceOnUse" x1="1116.5" x2="1312.5"><stop offset="0" stop-color="#036aff"/><stop offset="0.05102" stop-color="#1266ff"/><stop offset="0.2551" stop-color="#6152ff"/><stop offset="0.6327" stop-color="#fe2aff"/><stop offset="0.801" stop-color="#ff11c5"/><stop offset="1" stop-color="#ff0199"/></linearGradient>
<linearGradient id="d159" gradientUnits="userSpaceOnUse" x1="1007.5" x2="1499.5"><stop offset="0" stop-color="#005499"/><stop offset="0.2236" stop-color="#023e99"/><stop offset="0.6098" stop-color="#990160"/><stop offset="0.7785" stop-color="#990039"/><stop offset="1" stop-color="#99001a"/></linearGradient>
<linearGradient id="d160" gradientUnits="userSpaceOnUse" x1="1116.5" x2="1310.5"><stop offset="0" stop-color="#0268ff"/><stop offset="0.05155" stop-color="#1163ff"/><stop offset="0.2577" stop-color="#5f4fff"/><stop offset="0.6495" stop-color="#fe27ff"/><stop offset="0.8093" stop-color="#ff11c9"/><stop offset="1" stop-color="#ff019e"/></linearGradient>
<linearGradient id="d161" gradientUnits="userSpaceOnUse" x1="1008.5" x2="1497.5"><stop offset="0" stop-color="#005299"/><stop offset="0.2229" stop-color="#023c99"/><stop offset="0.6094" stop-color="#990163"/><stop offset="0.7771" stop-color="#99003a"/><stop offset="1" stop-color="#99001c"/></linearGradient>
<linearGradient id="d162" gradientUnits="userSpaceOnUse" x1="1116.5" x2="1308.5"><stop offset="0" stop-color="#0265ff"/><stop offset="0.05208" stop-color="#1061ff"/><stop offset="0.2604" stop-color="#5d4dff"/><stop offset="0.6667" stop-color="#fe24ff"/><stop offset="0.8177" stop-color="#ff10cc"/><stop offset="1" stop-color="#ff01a2"/></linearGradient>
<linearGradient id="d163" gradientUnits="userSpaceOnUse" x1="1008.5" x2="1495.5"><stop offset="0" stop-color="#005199"/><stop offset="0.2238" stop-color="#023b99"/><stop offset="0.6078" stop-color="#990165"/><stop offset="0.7762" stop-color="#99003c"/><stop offset="1" stop-color="#99001d"/></linearGradient>
<linearGradient id="d164" gradientUnits="userSpaceOnUse" x1="1117.5" x2="1307.5"><stop offset="0" stop-color="#0362ff"/><stop offset="0.05263" stop-color="#115eff"/><stop offset="0.2737" stop-color="#614aff"/><stop offset="0.6789" stop-color="#fe21ff"/><stop offset="0.8263" stop-color="#ff0ece"/><stop offset="1" stop-color="#ff01a6"/></linearGradient>
<linearGradient id="d165" gradientUnits="userSpaceOnUse" x1="1009.5" x2="1493.5"><stop offset="0" stop-color="#004f99"/><stop offset="0.2252" stop-color="#023999"/><stop offset="0.6054" stop-color="#990168"/><stop offset="0.7748" stop-color="#99003e"/><stop offset="1" stop-color="#99001e"/></linearGradient>
<linearGradient id="d166" gradientUnits="userSpaceOnUse" x1="1117.5" x2="1305.5"><stop offset="0" stop-color="#0260ff"/><stop offset="0.05319" stop-color="#105cff"/><stop offset="0.2766" stop-color="#5f48ff"/><stop offset="0.6968" stop-color="#fe1fff"/><stop offset="0.8404" stop-color="#ff0dd0"/><stop offset="1" stop-color="#ff01ab"/></linearGradient>
<linearGradient id="d167" gradientUnits="userSpaceOnUse" x1="1010.5" x2="1491.5"><stop offset="0" stop-color="#004d99"/><stop offset="0.2245" stop-color="#023899"/><stop offset="0.6029" stop-color="#99016c"/><stop offset="0.6819" stop-color="#990054"/><stop offset="0.7734" stop-color="#990040"/><stop offset="1" stop-color="#99001f"/></linearGradient>
<linearGradient id="d168" gradientUnits="userSpaceOnUse" x1="1117.5" x2="1303.5"><stop offset="0" stop-color="#025eff"/><stop offset="0.05376" stop-color="#0f59ff"/><stop offset="0.2796" stop-color="#5d46ff"/><stop offset="0.7151" stop-color="#fe1cff"/><stop offset="0.8495" stop-color="#ff0cd4"/><stop offset="1" stop-color="#ff01b0"/></linearGradient>
<linearGradient id="d169" gradientUnits="userSpaceOnUse" x1="1011.5" x2="1489.5"><stop offset="0" stop-color="#004b99"/><stop offset="0.2259" stop-color="#023699"/><stop offset="0.6004" stop-color="#99016f"/><stop offset="0.6799" stop-color="#990057"/><stop offset="0.7699" stop-color="#990042"/><stop offset="1" stop-color="#990020"/></linearGradient>
<linearGradient id="d170" gradientUnits="userSpaceOnUse" x1="1118.5" x2="1301.5"><stop offset="0" stop-color="#035bff"/><stop offset="0.05464" stop-color="#1057ff"/><stop offset="0.3005" stop-color="#6342ff"/><stop offset="0.7322" stop-color="#fe1aff"/><stop offset="0.8634" stop-color="#ff0ad6"/><stop offset="1" stop-color="#ff01b5"/></linearGradient>
<linearGradient id="d171" gradientUnits="userSpaceOnUse" x1="1012.5" x2="1487.5"><stop offset="0" stop-color="#004999"/><stop offset="0.2253" stop-color="#023599"/><stop offset="0.5979" stop-color="#990172"/><stop offset="0.6779" stop-color="#990059"/><stop offset="0.7684" stop-color="#990044"/><stop offset="1" stop-color="#990021"/></linearGradient>
<linearGradient id="d172" gradientUnits="userSpaceOnUse" x1="1118.5" x2="1299.5"><stop offset="0" stop-color="#0259ff"/><stop offset="0.05525" stop-color="#1055ff"/><stop offset="0.3039" stop-color="#6140ff"/><stop offset="0.7514" stop-color="#fe17ff"/><stop offset="0.8729" stop-color="#ff0ad9"/><stop offset="1" stop-color="#ff01ba"/></linearGradient>
<linearGradient id="d173" gradientUnits="userSpaceOnUse" x1="1013.5" x2="1485.5"><stop offset="0" stop-color="#004799"/><stop offset="0.2267" stop-color="#023499"/><stop offset="0.5953" stop-color="#990175"/><stop offset="0.6758" stop-color="#99005c"/><stop offset="0.7669" stop-color="#990046"/><stop offset="1" stop-color="#990023"/></linearGradient>
<linearGradient id="d174" gradientUnits="userSpaceOnUse" x1="1118.5" x2="1297.5"><stop offset="0" stop-color="#0257ff"/><stop offset="0.05587" stop-color="#0f53ff"/><stop offset="0.3073" stop-color="#5f3eff"/><stop offset="0.7709" stop-color="#fe15ff"/><stop offset="0.8827" stop-color="#ff09dd"/><stop offset="1" stop-color="#ff01c0"/></linearGradient>
<linearGradient id="d175" gradientUnits="userSpaceOnUse" x1="1014.5" x2="1483.5"><stop offset="0" stop-color="#004699"/><stop offset="0.226" stop-color="#023299"/><stop offset="0.5928" stop-color="#990179"/><stop offset="0.6738" stop-color="#99005e"/><stop offset="0.7655" stop-color="#990048"/><stop offset="1" stop-color="#990024"/></linearGradient>
<linearGradient id="d176" gradientUnits="userSpaceOnUse" x1="1119.5" x2="1295.5"><stop offset="0" stop-color="#0354ff"/><stop offset="0.0625" stop-color="#1250ff"/><stop offset="0.3295" stop-color="#643aff"/><stop offset="0.7898" stop-color="#fe12ff"/><stop offset="1" stop-color="#ff01c5"/></linearGradient>
<linearGradient id="d177" gradientUnits="userSpaceOnUse" x1="1015.5" x2="1481.5"><stop offset="0" stop-color="#004499"/><stop offset="0.2275" stop-color="#023199"/><stop offset="0.5901" stop-color="#99017c"/><stop offset="0.6695" stop-color="#990062"/><stop offset="0.7639" stop-color="#99004a"/><stop offset="1" stop-color="#990025"/></linearGradient>
<linearGradient id="d178" gradientUnits="userSpaceOnUse" x1="1119.5" x2="1293.5"><stop offset="0" stop-color="#0252ff"/><stop offset="0.06322" stop-color="#114eff"/><stop offset="0.3333" stop-color="#6239ff"/><stop offset="0.8103" stop-color="#fe10ff"/><stop offset="1" stop-color="#ff01cb"/></linearGradient>
<linearGradient id="d179" gradientUnits="userSpaceOnUse" x1="1016.5" x2="1479.5"><stop offset="0" stop-color="#004299"/><stop offset="0.2268" stop-color="#023099"/><stop offset="0.5875" stop-color="#990180"/><stop offset="0.6674" stop-color="#990064"/><stop offset="0.7624" stop-color="#99004c"/><stop offset="1" stop-color="#990026"/></linearGradient>
<linearGradient id="d180" gradientUnits="userSpaceOnUse" x1="1119.5" x2="1291.5"><stop offset="0" stop-color="#0250ff"/><stop offset="0.06395" stop-color="#104cff"/><stop offset="0.3372" stop-color="#6137ff"/><stop offset="0.8314" stop-color="#fe0eff"/><stop offset="1" stop-color="#ff01d1"/></linearGradient>
<linearGradient id="d181" gradientUnits="userSpaceOnUse" x1="1017.5" x2="1477.5"><stop offset="0" stop-color="#004199"/><stop offset="0.2261" stop-color="#022f99"/><stop offset="0.5848" stop-color="#990183"/><stop offset="0.6652" stop-color="#990067"/><stop offset="0.7587" stop-color="#99004f"/><stop offset="1" stop-color="#990028"/></linearGradient>
<linearGradient id="d182" gradientUnits="userSpaceOnUse" x1="1119.5" x2="1289.5"><stop offset="0" stop-color="#024fff"/><stop offset="0.06471" stop-color="#0f4aff"/><stop offset="0.3412" stop-color="#5f35ff"/><stop offset="0.8529" stop-color="#fe0cff"/><stop offset="1" stop-color="#ff01d7"/></linearGradient>
<linearGradient id="d183" gradientUnits="userSpaceOnUse" x1="1018.5" x2="1476.5"><stop offset="0" stop-color="#003f99"/><stop offset="0.2271" stop-color="#022d99"/><stop offset="0.5808" stop-color="#990187"/><stop offset="0.6616" stop-color="#99006a"/><stop offset="0.7576" stop-color="#990051"/><stop offset="0.869" stop-color="#99003b"/><stop offset="1" stop-color="#990029"/></linearGradient>
<linearGradient id="d184" gradientUnits="userSpaceOnUse" x1="1120.5" x2="1287.5"><stop offset="0" stop-color="#024cff"/><stop offset="0.06587" stop-color="#1048ff"/><stop offset="0.3593" stop-color="#6232ff"/><stop offset="0.8743" stop-color="#fe09ff"/><stop offset="1" stop-color="#ff01dd"/></linearGradient>
<linearGradient id="d185" gradientUnits="userSpaceOnUse" x1="1019.5" x2="1474.5"><stop offset="0" stop-color="#003e99"/><stop offset="0.2264" stop-color="#022c99"/><stop offset="0.578" stop-color="#99018b"/><stop offset="0.6593" stop-color="#99006d"/><stop offset="0.7538" stop-color="#990053"/><stop offset="0.8659" stop-color="#99003d"/><stop offset="1" stop-color="#99002a"/></linearGradient>
<linearGradient id="d186" gradientUnits="userSpaceOnUse" x1="1120.5" x2="1285.5"><stop offset="0" stop-color="#024aff"/><stop offset="0.06667" stop-color="#1046ff"/><stop offset="0.3636" stop-color="#6131ff"/><stop offset="0.897" stop-color="#fe07ff"/><stop offset="1" stop-color="#ff01e3"/></linearGradient>
<linearGradient id="d187" gradientUnits="userSpaceOnUse" x1="1020.5" x2="1472.5"><stop offset="0" stop-color="#003c99"/><stop offset="0.2257" stop-color="#022b99"/><stop offset="0.5752" stop-color="#99018f"/><stop offset="0.6571" stop-color="#990070"/><stop offset="0.7522" stop-color="#990056"/><stop offset="0.865" stop-color="#99003f"/><stop offset="1" stop-color="#99002b"/></linearGradient>
<linearGradient id="d188" gradientUnits="userSpaceOnUse" x1="1120.5" x2="1283.5"><stop offset="0" stop-color="#0249ff"/><stop offset="0.06748" stop-color="#0f44ff"/><stop offset="0.3681" stop-color="#5f2fff"/><stop offset="0.9202" stop-color="#fe05ff"/><stop offset="1" stop-color="#ff01ea"/></linearGradient>
<linearGradient id="d189" gradientUnits="userSpaceOnUse" x1="1021.5" x2="1470.5"><stop offset="0" stop-color="#003b99"/><stop offset="0.2272" stop-color="#022a99"/><stop offset="0.5724" stop-color="#990193"/><stop offset="0.6548" stop-color="#990073"/><stop offset="0.7506" stop-color="#990058"/><stop offset="0.8641" stop-color="#990041"/><stop offset="1" stop-color="#99002d"/></linearGradient>
<linearGradient id="d190" gradientUnits="userSpaceOnUse" x1="1121.5" x2="1281.5"><stop offset="0" stop-color="#0247ff"/><stop offset="0.06875" stop-color="#1042ff"/><stop offset="0.3937" stop-color="#642cff"/><stop offset="0.9437" stop-color="#fe04ff"/><stop offset="1" stop-color="#ff01f0"/></linearGradient>
<linearGradient id="d191" gradientUnits="userSpaceOnUse" x1="1022.5" x2="1468.5"><stop offset="0" stop-color="#003a99"/><stop offset="0.2265" stop-color="#022999"/><stop offset="0.5695" stop-color="#990197"/><stop offset="0.6525" stop-color="#990076"/><stop offset="0.7489" stop-color="#99005a"/><stop offset="0.8632" stop-color="#990043"/><stop offset="1" stop-color="#99002e"/></linearGradient>
<linearGradient id="d192" gradientUnits="userSpaceOnUse" x1="1121.5" x2="1279.5"><stop offset="0" stop-color="#0245ff"/><stop offset="0.06962" stop-color="#0f41ff"/><stop offset="0.3987" stop-color="#622bff"/><stop offset="0.9684" stop-color="#fe02ff"/><stop offset="1" stop-color="#ff01f7"/></linearGradient>
<linearGradient id="d193" gradientUnits="userSpaceOnUse" x1="1023.5" x2="1466.5"><stop offset="0" stop-color="#003899"/><stop offset="0.2257" stop-color="#022899"/><stop offset="0.5734" stop-color="#990098"/><stop offset="0.6546" stop-color="#990078"/><stop offset="0.7517" stop-color="#99005c"/><stop offset="0.8646" stop-color="#990044"/><stop offset="1" stop-color="#99002f"/></linearGradient>
<linearGradient id="d194" gradientUnits="userSpaceOnUse" x1="1121.5" x2="1277.5"><stop offset="0" stop-color="#0243ff"/><stop offset="0.07051" stop-color="#0e3fff"/><stop offset="0.3846" stop-color="#5c2bff"/><stop offset="1" stop-color="#ff01fe"/></linearGradient>
<linearGradient id="d195" gradientUnits="userSpaceOnUse" x1="1024.5" x2="1464.5"><stop offset="0" stop-color="#003799"/><stop offset="0.225" stop-color="#022799"/><stop offset="0.5795" stop-color="#990099"/><stop offset="0.6614" stop-color="#990078"/><stop offset="0.7568" stop-color="#99005c"/><stop offset="0.8682" stop-color="#990045"/><stop offset="1" stop-color="#990031"/></linearGradient>
<linearGradient id="d196" gradientUnits="userSpaceOnUse" x1="1122.5" x2="1275.5"><stop offset="0" stop-color="#0241ff"/><stop offset="0.0719" stop-color="#0f3dff"/><stop offset="0.4183" stop-color="#6227ff"/><stop offset="1" stop-color="#f901ff"/></linearGradient>
<linearGradient id="d197" gradientUnits="userSpaceOnUse" x1="1025.5" x2="1462.5"><stop offset="0" stop-color="#003699"/><stop offset="0.2265" stop-color="#022699"/><stop offset="0.5858" stop-color="#990099"/><stop offset="0.6659" stop-color="#990079"/><stop offset="0.7597" stop-color="#99005e"/><stop offset="0.8696" stop-color="#990047"/><stop offset="1" stop-color="#990032"/></linearGradient>
<linearGradient id="d198" gradientUnits="userSpaceOnUse" x1="1122.5" x2="1273.5"><stop offset="0" stop-color="#0240ff"/><stop offset="0.07285" stop-color="#0f3cff"/><stop offset="0.4106" stop-color="#5e27ff"/><stop offset="1" stop-color="#f201ff"/></linearGradient>
<linearGradient id="d199" gradientUnits="userSpaceOnUse" x1="1026.5" x2="1460.5"><stop offset="0" stop-color="#003499"/><stop offset="0.2258" stop-color="#022599"/><stop offset="0.5922" stop-color="#990099"/><stop offset="0.6728" stop-color="#990079"/><stop offset="0.765" stop-color="#99005f"/><stop offset="0.8733" stop-color="#990048"/><stop offset="1" stop-color="#990034"/></linearGradient>
<linearGradient id="d200" gradientUnits="userSpaceOnUse" x1="1122.5" x2="1271.5"><stop offset="0" stop-color="#023eff"/><stop offset="0.06711" stop-color="#0d3bff"/><stop offset="0.396" stop-color="#5727ff"/><stop offset="1" stop-color="#eb01ff"/></linearGradient>
<linearGradient id="d201" gradientUnits="userSpaceOnUse" x1="1027.5" x2="1458.5"><stop offset="0" stop-color="#003399"/><stop offset="0.2251" stop-color="#022499"/><stop offset="0.5545" stop-color="#860199"/><stop offset="0.5986" stop-color="#990099"/><stop offset="0.6775" stop-color="#99007a"/><stop offset="0.768" stop-color="#990060"/><stop offset="0.8747" stop-color="#990049"/><stop offset="1" stop-color="#990035"/></linearGradient>
<linearGradient id="d202" gradientUnits="userSpaceOnUse" x1="1123.5" x2="1269.5"><stop offset="0" stop-color="#023cff"/><stop offset="0.06849" stop-color="#0d39ff"/><stop offset="0.4041" stop-color="#5725ff"/><stop offset="1" stop-color="#e401ff"/></linearGradient>
<linearGradient id="d203" gradientUnits="userSpaceOnUse" x1="1029.5" x2="1456.5"><stop offset="0" stop-color="#003299"/><stop offset="0.2248" stop-color="#022399"/><stop offset="0.5504" stop-color="#820199"/><stop offset="0.6042" stop-color="#990099"/><stop offset="0.6838" stop-color="#99007a"/><stop offset="0.7728" stop-color="#990061"/><stop offset="0.8782" stop-color="#99004a"/><stop offset="1" stop-color="#990037"/></linearGradient>
<linearGradient id="d204" gradientUnits="userSpaceOnUse" x1="1123.5" x2="1267.5"><stop offset="0" stop-color="#023bff"/><stop offset="0.06944" stop-color="#0d37ff"/><stop offset="0.3958" stop-color="#5325ff"/><stop offset="1" stop-color="#de01ff"/></linearGradient>
<linearGradient id="d205" gradientUnits="userSpaceOnUse" x1="1030.5" x2="1454.5"><stop offset="0" stop-color="#003099"/><stop offset="0.2241" stop-color="#022299"/><stop offset="0.5472" stop-color="#7e0199"/><stop offset="0.6108" stop-color="#990099"/><stop offset="0.6887" stop-color="#99007b"/><stop offset="0.7783" stop-color="#990062"/><stop offset="1" stop-color="#990038"/></linearGradient>
<linearGradient id="d206" gradientUnits="userSpaceOnUse" x1="1123.5" x2="1265.5"><stop offset="0" stop-color="#0239ff"/><stop offset="0.07042" stop-color="#0c36ff"/><stop offset="0.3803" stop-color="#4d24ff"/><stop offset="1" stop-color="#d801ff"/></linearGradient>
<linearGradient id="d207" gradientUnits="userSpaceOnUse" x1="1031.5" x2="1452.5"><stop offset="0" stop-color="#002f99"/><stop offset="0.2233" stop-color="#022199"/><stop offset="0.5463" stop-color="#7c0199"/><stop offset="0.6152" stop-color="#980099"/><stop offset="0.6983" stop-color="#99007a"/><stop offset="0.7838" stop-color="#990062"/><stop offset="1" stop-color="#99003a"/></linearGradient>
<linearGradient id="d208" gradientUnits="userSpaceOnUse" x1="1124.5" x2="1263.5"><stop offset="0" stop-color="#0238ff"/><stop offset="0.3885" stop-color="#4d23ff"/><stop offset="1" stop-color="#d201ff"/></linearGradient>
<linearGradient id="d209" gradientUnits="userSpaceOnUse" x1="1032.5" x2="1450.5"><stop offset="0" stop-color="#002e99"/><stop offset="0.2249" stop-color="#022099"/><stop offset="0.5431" stop-color="#780199"/><stop offset="0.622" stop-color="#980099"/><stop offset="0.7033" stop-color="#99007b"/><stop offset="0.7871" stop-color="#990064"/><stop offset="1" stop-color="#99003b"/></linearGradient>
<linearGradient id="d210" gradientUnits="userSpaceOnUse" x1="1124.5" x2="1262.5"><stop offset="0" stop-color="#0236ff"/><stop offset="0.07246" stop-color="#0c33ff"/><stop offset="0.3768" stop-color="#4923ff"/><stop offset="1" stop-color="#cd01ff"/></linearGradient>
<linearGradient id="d211" gradientUnits="userSpaceOnUse" x1="1033.5" x2="1448.5"><stop offset="0" stop-color="#002d99"/><stop offset="0.2241" stop-color="#021f99"/><stop offset="0.5398" stop-color="#750199"/><stop offset="0.6289" stop-color="#980099"/><stop offset="0.7108" stop-color="#99007c"/><stop offset="0.7928" stop-color="#990064"/><stop offset="1" stop-color="#99003d"/></linearGradient>
<linearGradient id="d212" gradientUnits="userSpaceOnUse" x1="1124.5" x2="1260.5"><stop offset="0" stop-color="#0235ff"/><stop offset="0.06618" stop-color="#0b32ff"/><stop offset="0.3529" stop-color="#4223ff"/><stop offset="1" stop-color="#c701ff"/></linearGradient>
<linearGradient id="d213" gradientUnits="userSpaceOnUse" x1="1034.5" x2="1446.5"><stop offset="0" stop-color="#002c99"/><stop offset="0.2233" stop-color="#021f99"/><stop offset="0.5364" stop-color="#710199"/><stop offset="0.6359" stop-color="#980099"/><stop offset="0.716" stop-color="#99007c"/><stop offset="0.7961" stop-color="#990066"/><stop offset="1" stop-color="#99003f"/></linearGradient>
<linearGradient id="d214" gradientUnits="userSpaceOnUse" x1="1125.5" x2="1258.5"><stop offset="0" stop-color="#0233ff"/><stop offset="0.3684" stop-color="#4421ff"/><stop offset="1" stop-color="#c101ff"/></linearGradient>
<linearGradient id="d215" gradientUnits="userSpaceOnUse" x1="1035.5" x2="1444.5"><stop offset="0" stop-color="#002b99"/><stop offset="0.2249" stop-color="#021e99"/><stop offset="0.533" stop-color="#6e0199"/><stop offset="0.6455" stop-color="#990099"/><stop offset="0.7188" stop-color="#99007e"/><stop offset="0.7995" stop-color="#990067"/><stop offset="1" stop-color="#990040"/></linearGradient>
<linearGradient id="d216" gradientUnits="userSpaceOnUse" x1="1125.5" x2="1256.5"><stop offset="0" stop-color="#0232ff"/><stop offset="0.3511" stop-color="#3e21ff"/><stop offset="1" stop-color="#bc01ff"/></linearGradient>
<linearGradient id="d217" gradientUnits="userSpaceOnUse" x1="1036.5" x2="1443.5"><stop offset="0" stop-color="#002a99"/><stop offset="0.2236" stop-color="#021d99"/><stop offset="0.5283" stop-color="#6b0199"/><stop offset="0.6511" stop-color="#990099"/><stop offset="0.8034" stop-color="#990068"/><stop offset="1" stop-color="#990042"/></linearGradient>
<linearGradient id="d218" gradientUnits="userSpaceOnUse" x1="1125.5" x2="1254.5"><stop offset="0" stop-color="#0231ff"/><stop offset="0.3256" stop-color="#3821ff"/><stop offset="1" stop-color="#b601ff"/></linearGradient>
<linearGradient id="d219" gradientUnits="userSpaceOnUse" x1="1037.5" x2="1441.5"><stop offset="0" stop-color="#002999"/><stop offset="0.2228" stop-color="#021c99"/><stop offset="0.5248" stop-color="#680199"/><stop offset="0.6584" stop-color="#990099"/><stop offset="0.8094" stop-color="#990069"/><stop offset="1" stop-color="#990043"/></linearGradient>
<linearGradient id="d220" gradientUnits="userSpaceOnUse" x1="1126.5" x2="1252.5"><stop offset="0" stop-color="#022fff"/><stop offset="0.3413" stop-color="#3920ff"/><stop offset="1" stop-color="#b101ff"/></linearGradient>
<linearGradient id="d221" gradientUnits="userSpaceOnUse" x1="1039.5" x2="1439.5"><stop offset="0" stop-color="#002899"/><stop offset="0.2225" stop-color="#021b99"/><stop offset="0.52" stop-color="#640199"/><stop offset="0.665" stop-color="#990099"/><stop offset="0.8125" stop-color="#99006a"/><stop offset="1" stop-color="#990045"/></linearGradient>
<linearGradient id="d222" gradientUnits="userSpaceOnUse" x1="1126.5" x2="1250.5"><stop offset="0" stop-color="#022eff"/><stop offset="0.3226" stop-color="#3420ff"/><stop offset="1" stop-color="#ac01ff"/></linearGradient>
<linearGradient id="d223" gradientUnits="userSpaceOnUse" x1="1040.5" x2="1437.5"><stop offset="0" stop-color="#002799"/><stop offset="0.2217" stop-color="#021b99"/><stop offset="0.5164" stop-color="#610199"/><stop offset="0.6725" stop-color="#990099"/><stop offset="0.8186" stop-color="#99006b"/><stop offset="1" stop-color="#990047"/></linearGradient>
<linearGradient id="d224" gradientUnits="userSpaceOnUse" x1="1126.5" x2="1248.5"><stop offset="0" stop-color="#022dff"/><stop offset="0.2951" stop-color="#2e20ff"/><stop offset="1" stop-color="#a701ff"/></linearGradient>
<linearGradient id="d225" gradientUnits="userSpaceOnUse" x1="1041.5" x2="1435.5"><stop offset="0" stop-color="#002699"/><stop offset="0.2208" stop-color="#011a99"/><stop offset="0.5127" stop-color="#5e0199"/><stop offset="0.6802" stop-color="#990099"/><stop offset="0.8223" stop-color="#99006c"/><stop offset="1" stop-color="#990049"/></linearGradient>
<linearGradient id="d226" gradientUnits="userSpaceOnUse" x1="1127.5" x2="1246.5"><stop offset="0" stop-color="#022bff"/><stop offset="0.3109" stop-color="#301eff"/><stop offset="1" stop-color="#a101ff"/></linearGradient>
<linearGradient id="d227" gradientUnits="userSpaceOnUse" x1="1042.5" x2="1433.5"><stop offset="0" stop-color="#002599"/><stop offset="0.2225" stop-color="#021999"/><stop offset="0.509" stop-color="#5b0199"/><stop offset="0.688" stop-color="#990099"/><stop offset="0.8286" stop-color="#99006d"/><stop offset="1" stop-color="#99004b"/></linearGradient>
<linearGradient id="d228" gradientUnits="userSpaceOnUse" x1="1127.5" x2="1244.5"><stop offset="0" stop-color="#022aff"/><stop offset="0.2906" stop-color="#2b1eff"/><stop offset="1" stop-color="#9d01ff"/></linearGradient>
<linearGradient id="d229" gradientUnits="userSpaceOnUse" x1="1043.5" x2="1431.5"><stop offset="0" stop-color="#002499"/><stop offset="0.2216" stop-color="#021899"/><stop offset="0.5052" stop-color="#590199"/><stop offset="0.6959" stop-color="#990099"/><stop offset="0.8325" stop-color="#99006f"/><stop offset="1" stop-color="#99004c"/></linearGradient>
<linearGradient id="d230" gradientUnits="userSpaceOnUse" x1="1127.5" x2="1242.5"><stop offset="0" stop-color="#0229ff"/><stop offset="0.2609" stop-color="#251fff"/><stop offset="1" stop-color="#9801ff"/></linearGradient>
<linearGradient id="d231" gradientUnits="userSpaceOnUse" x1="1044.5" x2="1429.5"><stop offset="0" stop-color="#002399"/><stop offset="0.2208" stop-color="#011899"/><stop offset="0.5013" stop-color="#560199"/><stop offset="0.7039" stop-color="#990099"/><stop offset="0.8364" stop-color="#990070"/><stop offset="1" stop-color="#99004e"/></linearGradient>
<linearGradient id="d232" gradientUnits="userSpaceOnUse" x1="1128.5" x2="1240.5"><stop offset="0" stop-color="#0228ff"/><stop offset="0.2768" stop-color="#271dff"/><stop offset="1" stop-color="#9301ff"/></linearGradient>
<linearGradient id="d233" gradientUnits="userSpaceOnUse" x1="1045.5" x2="1427.5"><stop offset="0" stop-color="#002299"/><stop offset="0.2225" stop-color="#021799"/><stop offset="0.4974" stop-color="#530199"/><stop offset="0.712" stop-color="#990099"/><stop offset="0.8429" stop-color="#990071"/><stop offset="1" stop-color="#990050"/></linearGradient>
<linearGradient id="d234" gradientUnits="userSpaceOnUse" x1="1128.5" x2="1238.5"><stop offset="0" stop-color="#0227ff"/><stop offset="0.2455" stop-color="#211dff"/><stop offset="1" stop-color="#8e01ff"/></linearGradient>
<linearGradient id="d235" gradientUnits="userSpaceOnUse" x1="1047.5" x2="1425.5"><stop offset="0" stop-color="#002199"/><stop offset="0.2196" stop-color="#021699"/><stop offset="0.4921" stop-color="#500199"/><stop offset="0.7196" stop-color="#990099"/><stop offset="0.8466" stop-color="#990072"/><stop offset="1" stop-color="#990052"/></linearGradient>
<linearGradient id="d236" gradientUnits="userSpaceOnUse" x1="1128.5" x2="1236.5"><stop offset="0" stop-color="#0125ff"/><stop offset="0.213" stop-color="#1b1eff"/><stop offset="1" stop-color="#8a01ff"/></linearGradient>
<linearGradient id="d237" gradientUnits="userSpaceOnUse" x1="1048.5" x2="1423.5"><stop offset="0" stop-color="#002099"/><stop offset="0.2187" stop-color="#011699"/><stop offset="0.4907" stop-color="#4f0199"/><stop offset="0.728" stop-color="#990099"/><stop offset="0.8533" stop-color="#990073"/><stop offset="1" stop-color="#990054"/></linearGradient>
<linearGradient id="d238" gradientUnits="userSpaceOnUse" x1="1129.5" x2="1234.5"><stop offset="0" stop-color="#0224ff"/><stop offset="0.2381" stop-color="#1e1cff"/><stop offset="1" stop-color="#8601ff"/></linearGradient>
<linearGradient id="d239" gradientUnits="userSpaceOnUse" x1="1049.5" x2="1421.5"><stop offset="0" stop-color="#001f99"/><stop offset="0.2204" stop-color="#021599"/><stop offset="0.4866" stop-color="#4c0199"/><stop offset="0.7366" stop-color="#990099"/><stop offset="0.8575" stop-color="#990075"/><stop offset="1" stop-color="#990056"/></linearGradient>
<linearGradient id="d240" gradientUnits="userSpaceOnUse" x1="1129.5" x2="1232.5"><stop offset="0" stop-color="#0223ff"/><stop offset="0.2039" stop-color="#181cff"/><stop offset="1" stop-color="#8101ff"/></linearGradient>
<linearGradient id="d241" gradientUnits="userSpaceOnUse" x1="1050.5" x2="1419.5"><stop offset="0" stop-color="#001e99"/><stop offset="0.2195" stop-color="#021499"/><stop offset="0.4824" stop-color="#4a0199"/><stop offset="0.7453" stop-color="#990099"/><stop offset="0.8645" stop-color="#990076"/><stop offset="1" stop-color="#990059"/></linearGradient>
<linearGradient id="d242" gradientUnits="userSpaceOnUse" x1="1129.5" x2="1230.5"><stop offset="0" stop-color="#0122ff"/><stop offset="0.1683" stop-color="#131dff"/><stop offset="1" stop-color="#7d01ff"/></linearGradient>
<linearGradient id="d243" gradientUnits="userSpaceOnUse" x1="1051.5" x2="1417.5"><stop offset="0" stop-color="#001e99"/><stop offset="0.2186" stop-color="#011499"/><stop offset="0.4781" stop-color="#470199"/><stop offset="0.6257" stop-color="#700099"/><stop offset="0.7541" stop-color="#990099"/><stop offset="0.8689" stop-color="#990077"/><stop offset="1" stop-color="#99005b"/></linearGradient>
<linearGradient id="d244" gradientUnits="userSpaceOnUse" x1="1129.5" x2="1228.5"><stop offset="0" stop-color="#0121ff"/><stop offset="0.1414" stop-color="#0f1dff"/><stop offset="1" stop-color="#7901ff"/></linearGradient>
<linearGradient id="d245" gradientUnits="userSpaceOnUse" x1="1053.5" x2="1415.5"><stop offset="0" stop-color="#001d99"/><stop offset="0.2182" stop-color="#021399"/><stop offset="0.4751" stop-color="#450099"/><stop offset="0.6298" stop-color="#6f0099"/><stop offset="0.7624" stop-color="#990099"/><stop offset="0.8729" stop-color="#990079"/><stop offset="1" stop-color="#99005d"/></linearGradient>
<linearGradient id="d246" gradientUnits="userSpaceOnUse" x1="1130.5" x2="1226.5"><stop offset="0" stop-color="#0220ff"/><stop offset="1" stop-color="#7501ff"/></linearGradient>
<linearGradient id="d247" gradientUnits="userSpaceOnUse" x1="1054.5" x2="1413.5"><stop offset="0" stop-color="#001c99"/><stop offset="0.2173" stop-color="#021299"/><stop offset="0.4708" stop-color="#430099"/><stop offset="0.6323" stop-color="#6d0099"/><stop offset="0.7716" stop-color="#990099"/><stop offset="0.8802" stop-color="#990079"/><stop offset="1" stop-color="#99005f"/></linearGradient>
<linearGradient id="d248" gradientUnits="userSpaceOnUse" x1="1130.5" x2="1224.5"><stop offset="0" stop-color="#011fff"/><stop offset="0.1383" stop-color="#0e1bff"/><stop offset="1" stop-color="#7101ff"/></linearGradient>
<linearGradient id="d249" gradientUnits="userSpaceOnUse" x1="1055.5" x2="1411.5"><stop offset="0" stop-color="#001b99"/><stop offset="0.2163" stop-color="#011299"/><stop offset="0.4663" stop-color="#410099"/><stop offset="0.6348" stop-color="#6c0099"/><stop offset="0.7809" stop-color="#990099"/><stop offset="0.8848" stop-color="#99007b"/><stop offset="1" stop-color="#990061"/></linearGradient>
<linearGradient id="d250" gradientUnits="userSpaceOnUse" x1="1130.5" x2="1222.5"><stop offset="0" stop-color="#011eff"/><stop offset="0.1413" stop-color="#0d1aff"/><stop offset="1" stop-color="#6d01ff"/></linearGradient>
<linearGradient id="d251" gradientUnits="userSpaceOnUse" x1="1056.5" x2="1410.5"><stop offset="0" stop-color="#001a99"/><stop offset="0.2175" stop-color="#021199"/><stop offset="0.4633" stop-color="#3f0099"/><stop offset="0.6384" stop-color="#6b0099"/><stop offset="0.7881" stop-color="#990099"/><stop offset="0.8898" stop-color="#99007c"/><stop offset="1" stop-color="#990063"/></linearGradient>
<linearGradient id="d252" gradientUnits="userSpaceOnUse" x1="1131.5" x2="1220.5"><stop offset="0" stop-color="#021dff"/><stop offset="1" stop-color="#6901ff"/></linearGradient>
<linearGradient id="d253" gradientUnits="userSpaceOnUse" x1="1057.5" x2="1408.5"><stop offset="0" stop-color="#001a99"/><stop offset="0.2165" stop-color="#011099"/><stop offset="0.4587" stop-color="#3d0099"/><stop offset="0.641" stop-color="#6a0099"/><stop offset="0.7977" stop-color="#990099"/><stop offset="0.8946" stop-color="#99007d"/><stop offset="1" stop-color="#990066"/></linearGradient>
<linearGradient id="d254" gradientUnits="userSpaceOnUse" x1="1131.5" x2="1218.5"><stop offset="0" stop-color="#011cff"/><stop offset="1" stop-color="#6501ff"/></linearGradient>
<linearGradient id="d255" gradientUnits="userSpaceOnUse" x1="1059.5" x2="1406.5"><stop offset="0" stop-color="#001999"/><stop offset="0.2133" stop-color="#011099"/><stop offset="0.4524" stop-color="#3b0099"/><stop offset="0.6427" stop-color="#690099"/><stop offset="0.8069" stop-color="#990099"/><stop offset="1" stop-color="#990068"/></linearGradient>
<linearGradient id="d256" gradientUnits="userSpaceOnUse" x1="1131.5" x2="1217.5"><stop offset="0" stop-color="#011bff"/><stop offset="0.1395" stop-color="#0c17ff"/><stop offset="1" stop-color="#6300ff"/></linearGradient>
<linearGradient id="d257" gradientUnits="userSpaceOnUse" x1="1060.5" x2="1404.5"><stop offset="0" stop-color="#001899"/><stop offset="0.2151" stop-color="#020f99"/><stop offset="0.4477" stop-color="#380099"/><stop offset="0.6483" stop-color="#680099"/><stop offset="0.8169" stop-color="#990099"/><stop offset="1" stop-color="#99006b"/></linearGradient>
<linearGradient id="d258" gradientUnits="userSpaceOnUse" x1="1132.5" x2="1215.5"><stop offset="0" stop-color="#021aff"/><stop offset="1" stop-color="#5f00ff"/></linearGradient>
<linearGradient id="d259" gradientUnits="userSpaceOnUse" x1="1061.5" x2="1402.5"><stop offset="0" stop-color="#001799"/><stop offset="0.2141" stop-color="#010f99"/><stop offset="0.4457" stop-color="#370099"/><stop offset="0.651" stop-color="#670099"/><stop offset="0.827" stop-color="#990099"/><stop offset="1" stop-color="#99006d"/></linearGradient>
<linearGradient id="d260" gradientUnits="userSpaceOnUse" x1="1132.5" x2="1213.5"><stop offset="0" stop-color="#0119ff"/><stop offset="1" stop-color="#5b00ff"/></linearGradient>
<linearGradient id="d261" gradientUnits="userSpaceOnUse" x1="1062.5" x2="1400.5"><stop offset="0" stop-color="#001799"/><stop offset="0.213" stop-color="#010e99"/><stop offset="0.4408" stop-color="#350099"/><stop offset="0.6568" stop-color="#660099"/><stop offset="0.8373" stop-color="#990099"/><stop offset="1" stop-color="#990070"/></linearGradient>
<linearGradient id="d262" gradientUnits="userSpaceOnUse" x1="1132.5" x2="1211.5"><stop offset="0" stop-color="#0118ff"/><stop offset="1" stop-color="#5800ff"/></linearGradient>
<linearGradient id="d263" gradientUnits="userSpaceOnUse" x1="1063.5" x2="1398.5"><stop offset="0" stop-color="#001699"/><stop offset="0.2119" stop-color="#010e99"/><stop offset="0.4358" stop-color="#330099"/><stop offset="0.6597" stop-color="#650099"/><stop offset="0.8478" stop-color="#990099"/><stop offset="1" stop-color="#990072"/></linearGradient>
<linearGradient id="d264" gradientUnits="userSpaceOnUse" x1="1133.5" x2="1209.5"><stop offset="0" stop-color="#0217ff"/><stop offset="1" stop-color="#5500ff"/></linearGradient>
<linearGradient id="d265" gradientUnits="userSpaceOnUse" x1="1065.5" x2="1396.5"><stop offset="0" stop-color="#001599"/><stop offset="0.2115" stop-color="#010d99"/><stop offset="0.429" stop-color="#310099"/><stop offset="0.6616" stop-color="#630099"/><stop offset="0.858" stop-color="#990099"/><stop offset="1" stop-color="#990075"/></linearGradient>
<linearGradient id="d266" gradientUnits="userSpaceOnUse" x1="1133.5" x2="1207.5"><stop offset="0" stop-color="#0116ff"/><stop offset="1" stop-color="#5100ff"/></linearGradient>
<linearGradient id="d267" gradientUnits="userSpaceOnUse" x1="1066.5" x2="1394.5"><stop offset="0" stop-color="#001499"/><stop offset="0.2104" stop-color="#010d99"/><stop offset="0.4268" stop-color="#2f0099"/><stop offset="0.6677" stop-color="#630099"/><stop offset="0.8689" stop-color="#980099"/><stop offset="1" stop-color="#990078"/></linearGradient>
<linearGradient id="d268" gradientUnits="userSpaceOnUse" x1="1133.5" x2="1205.5"><stop offset="0" stop-color="#0115ff"/><stop offset="1" stop-color="#4e00ff"/></linearGradient>
<linearGradient id="d269" gradientUnits="userSpaceOnUse" x1="1067.5" x2="1392.5"><stop offset="0" stop-color="#001499"/><stop offset="0.2092" stop-color="#010c99"/><stop offset="0.4215" stop-color="#2d0099"/><stop offset="0.6708" stop-color="#620099"/><stop offset="0.88" stop-color="#980099"/><stop offset="1" stop-color="#99007b"/></linearGradient>
<linearGradient id="d270" gradientUnits="userSpaceOnUse" x1="1134.5" x2="1203.5"><stop offset="0" stop-color="#0214ff"/><stop offset="1" stop-color="#4b00ff"/></linearGradient>
<linearGradient id="d271" gradientUnits="userSpaceOnUse" x1="1068.5" x2="1390.5"><stop offset="0" stop-color="#001399"/><stop offset="0.2112" stop-color="#010b99"/><stop offset="0.4068" stop-color="#2a0099"/><stop offset="0.6398" stop-color="#590099"/><stop offset="0.8913" stop-color="#980099"/><stop offset="1" stop-color="#99007d"/></linearGradient>
<linearGradient id="d272" gradientUnits="userSpaceOnUse" x1="1134.5" x2="1201.5"><stop offset="0" stop-color="#0114ff"/><stop offset="1" stop-color="#4700ff"/></linearGradient>
<linearGradient id="d273" gradientUnits="userSpaceOnUse" x1="1070.5" x2="1388.5"><stop offset="0" stop-color="#001299"/><stop offset="0.2075" stop-color="#010b99"/><stop offset="0.4025" stop-color="#280099"/><stop offset="0.6447" stop-color="#580099"/><stop offset="0.9025" stop-color="#980099"/><stop offset="1" stop-color="#990080"/></linearGradient>
<linearGradient id="d274" gradientUnits="userSpaceOnUse" x1="1134.5" x2="1199.5"><stop offset="0" stop-color="#0113ff"/><stop offset="1" stop-color="#4400ff"/></linearGradient>
<linearGradient id="d275" gradientUnits="userSpaceOnUse" x1="1071.5" x2="1386.5"><stop offset="0" stop-color="#001299"/><stop offset="0.2063" stop-color="#010b99"/><stop offset="0.3968" stop-color="#260099"/><stop offset="0.6476" stop-color="#570099"/><stop offset="0.9143" stop-color="#980099"/><stop offset="1" stop-color="#990083"/></linearGradient>
<linearGradient id="d276" gradientUnits="userSpaceOnUse" x1="1135.5" x2="1197.5"><stop offset="0" stop-color="#0112ff"/><stop offset="1" stop-color="#4100ff"/></linearGradient>
<linearGradient id="d277" gradientUnits="userSpaceOnUse" x1="1072.5" x2="1384.5"><stop offset="0" stop-color="#001199"/><stop offset="0.2083" stop-color="#010a99"/><stop offset="0.391" stop-color="#250099"/><stop offset="0.6538" stop-color="#570099"/><stop offset="0.9263" stop-color="#980099"/><stop offset="1" stop-color="#990087"/></linearGradient>
<linearGradient id="d278" gradientUnits="userSpaceOnUse" x1="1135.5" x2="1195.5"><stop offset="0" stop-color="#0111ff"/><stop offset="1" stop-color="#3e00ff"/></linearGradient>
<linearGradient id="d279" gradientUnits="userSpaceOnUse" x1="1073.5" x2="1382.5"><stop offset="0" stop-color="#001099"/><stop offset="0.2071" stop-color="#010a99"/><stop offset="0.3883" stop-color="#230099"/><stop offset="0.6602" stop-color="#560099"/><stop offset="0.9385" stop-color="#980099"/><stop offset="1" stop-color="#99008a"/></linearGradient>
<linearGradient id="d280" gradientUnits="userSpaceOnUse" x1="1135.5" x2="1193.5"><stop offset="0" stop-color="#0110ff"/><stop offset="1" stop-color="#3b00ff"/></linearGradient>
<linearGradient id="d281" gradientUnits="userSpaceOnUse" x1="1075.5" x2="1380.5"><stop offset="0" stop-color="#001099"/><stop offset="0.2033" stop-color="#010999"/><stop offset="0.3803" stop-color="#220099"/><stop offset="0.6623" stop-color="#550099"/><stop offset="0.9508" stop-color="#980099"/><stop offset="1" stop-color="#99008d"/></linearGradient>
<linearGradient id="d282" gradientUnits="userSpaceOnUse" x1="1136.5" x2="1191.5"><stop offset="0" stop-color="#010fff"/><stop offset="1" stop-color="#3800ff"/></linearGradient>
<linearGradient id="d283" gradientUnits="userSpaceOnUse" x1="1076.5" x2="1378.5"><stop offset="0" stop-color="#000f99"/><stop offset="0.2053" stop-color="#010999"/><stop offset="0.3742" stop-color="#200099"/><stop offset="0.6722" stop-color="#550099"/><stop offset="0.9636" stop-color="#980099"/><stop offset="1" stop-color="#990090"/></linearGradient>
<linearGradient id="d284" gradientUnits="userSpaceOnUse" x1="1136.5" x2="1189.5"><stop offset="0" stop-color="#010fff"/><stop offset="1" stop-color="#3500ff"/></linearGradient>
<linearGradient id="d285" gradientUnits="userSpaceOnUse" x1="1077.5" x2="1377.5"><stop offset="0" stop-color="#000f99"/><stop offset="0.2033" stop-color="#010899"/><stop offset="0.3667" stop-color="#1e0099"/><stop offset="0.64" stop-color="#4e0099"/><stop offset="0.8167" stop-color="#720099"/><stop offset="0.9733" stop-color="#980099"/><stop offset="1" stop-color="#990093"/></linearGradient>
<linearGradient id="d286" gradientUnits="userSpaceOnUse" x1="1136.5" x2="1187.5"><stop offset="0" stop-color="#010eff"/><stop offset="1" stop-color="#3200ff"/></linearGradient>
<linearGradient id="d287" gradientUnits="userSpaceOnUse" x1="1079.5" x2="1375.5"><stop offset="0" stop-color="#000e99"/><stop offset="0.1993" stop-color="#010899"/><stop offset="0.3615" stop-color="#1d0099"/><stop offset="0.6622" stop-color="#500099"/><stop offset="1" stop-color="#990096"/></linearGradient>
<linearGradient id="d288" gradientUnits="userSpaceOnUse" x1="1137.5" x2="1185.5"><stop offset="0" stop-color="#010dff"/><stop offset="1" stop-color="#3000ff"/></linearGradient>
<linearGradient id="d289" gradientUnits="userSpaceOnUse" x1="1080.5" x2="1373.5"><stop offset="0" stop-color="#000d99"/><stop offset="0.2014" stop-color="#010799"/><stop offset="0.3549" stop-color="#1b0099"/><stop offset="0.686" stop-color="#530099"/><stop offset="1" stop-color="#980099"/></linearGradient>
<linearGradient id="d290" gradientUnits="userSpaceOnUse" x1="1137.5" x2="1183.5"><stop offset="0" stop-color="#010cff"/><stop offset="1" stop-color="#2d00ff"/></linearGradient>
<linearGradient id="d291" gradientUnits="userSpaceOnUse" x1="1081.5" x2="1371.5"><stop offset="0" stop-color="#000d99"/><stop offset="0.2" stop-color="#010799"/><stop offset="0.3517" stop-color="#1a0099"/><stop offset="0.6828" stop-color="#510099"/><stop offset="1" stop-color="#950099"/></linearGradient>
<linearGradient id="d292" gradientUnits="userSpaceOnUse" x1="1137.5" x2="1181.5"><stop offset="0" stop-color="#010cff"/><stop offset="1" stop-color="#2a00ff"/></linearGradient>
<linearGradient id="d293" gradientUnits="userSpaceOnUse" x1="1083.5" x2="1369.5"><stop offset="0" stop-color="#000c99"/><stop offset="0.1958" stop-color="#010699"/><stop offset="0.3427" stop-color="#190099"/><stop offset="0.6783" stop-color="#4e0099"/><stop offset="1" stop-color="#910099"/></linearGradient>
<linearGradient id="d294" gradientUnits="userSpaceOnUse" x1="1138.5" x2="1179.5"><stop offset="0" stop-color="#010bff"/><stop offset="1" stop-color="#2800ff"/></linearGradient>
<linearGradient id="d295" gradientUnits="userSpaceOnUse" x1="1084.5" x2="1367.5"><stop offset="0" stop-color="#000c99"/><stop offset="0.1979" stop-color="#010699"/><stop offset="0.3357" stop-color="#170099"/><stop offset="0.6784" stop-color="#4d0099"/><stop offset="1" stop-color="#8e0099"/></linearGradient>
<linearGradient id="d296" gradientUnits="userSpaceOnUse" x1="1138.5" x2="1177.5"><stop offset="0" stop-color="#010aff"/><stop offset="1" stop-color="#2500ff"/></linearGradient>
<linearGradient id="d297" gradientUnits="userSpaceOnUse" x1="1085.5" x2="1365.5"><stop offset="0" stop-color="#000b99"/><stop offset="0.1964" stop-color="#010599"/><stop offset="0.3321" stop-color="#160099"/><stop offset="0.675" stop-color="#4b0099"/><stop offset="1" stop-color="#8b0099"/></linearGradient>
<linearGradient id="d298" gradientUnits="userSpaceOnUse" x1="1138.5" x2="1175.5"><stop offset="0" stop-color="#010aff"/><stop offset="1" stop-color="#2200ff"/></linearGradient>
<linearGradient id="d299" gradientUnits="userSpaceOnUse" x1="1087.5" x2="1363.5"><stop offset="0" stop-color="#000a99"/><stop offset="0.192" stop-color="#010599"/><stop offset="0.3225" stop-color="#150099"/><stop offset="0.6703" stop-color="#480099"/><stop offset="1" stop-color="#870099"/></linearGradient>
<linearGradient id="d300" gradientUnits="userSpaceOnUse" x1="1139.5" x2="1173.5"><stop offset="0" stop-color="#0109ff"/><stop offset="1" stop-color="#2000ff"/></linearGradient>
<linearGradient id="d301" gradientUnits="userSpaceOnUse" x1="1088.5" x2="1361.5"><stop offset="0" stop-color="#000a99"/><stop offset="0.1941" stop-color="#010599"/><stop offset="0.315" stop-color="#130099"/><stop offset="0.6703" stop-color="#470099"/><stop offset="1" stop-color="#840099"/></linearGradient>
<linearGradient id="d302" gradientUnits="userSpaceOnUse" x1="1139.5" x2="1172.5"><stop offset="0" stop-color="#0108ff"/><stop offset="1" stop-color="#1e00ff"/></linearGradient>
<linearGradient id="d303" gradientUnits="userSpaceOnUse" x1="1089.5" x2="1359.5"><stop offset="0" stop-color="#000999"/><stop offset="0.1926" stop-color="#010499"/><stop offset="0.3111" stop-color="#120099"/><stop offset="0.6667" stop-color="#450099"/><stop offset="1" stop-color="#810099"/></linearGradient>
<linearGradient id="d304" gradientUnits="userSpaceOnUse" x1="1139.5" x2="1170.5"><stop offset="0" stop-color="#0107ff"/><stop offset="1" stop-color="#1c00ff"/></linearGradient>
<linearGradient id="d305" gradientUnits="userSpaceOnUse" x1="1091.5" x2="1357.5"><stop offset="0" stop-color="#000999"/><stop offset="0.188" stop-color="#010499"/><stop offset="0.6617" stop-color="#430099"/><stop offset="1" stop-color="#7e0099"/></linearGradient>
<linearGradient id="d306" gradientUnits="userSpaceOnUse" x1="1140.5" x2="1168.5"><stop offset="0" stop-color="#0107ff"/><stop offset="1" stop-color="#1900ff"/></linearGradient>
<linearGradient id="d307" gradientUnits="userSpaceOnUse" x1="1092.5" x2="1355.5"><stop offset="0" stop-color="#000899"/><stop offset="0.1901" stop-color="#010399"/><stop offset="0.6578" stop-color="#410099"/><stop offset="1" stop-color="#7b0099"/></linearGradient>
<linearGradient id="d308" gradientUnits="userSpaceOnUse" x1="1140.5" x2="1166.5"><stop offset="0" stop-color="#0106ff"/><stop offset="1" stop-color="#1700ff"/></linearGradient>
<linearGradient id="d309" gradientUnits="userSpaceOnUse" x1="1094.5" x2="1353.5"><stop offset="0" stop-color="#000899"/><stop offset="0.1853" stop-color="#010399"/><stop offset="0.6525" stop-color="#3e0099"/><stop offset="1" stop-color="#780099"/></linearGradient>
<linearGradient id="d310" gradientUnits="userSpaceOnUse" x1="1140.5" x2="1164.5"><stop offset="0" stop-color="#0105ff"/><stop offset="1" stop-color="#1400ff"/></linearGradient>
<linearGradient id="d311" gradientUnits="userSpaceOnUse" x1="1095.5" x2="1351.5"><stop offset="0" stop-color="#000799"/><stop offset="0.1836" stop-color="#010399"/><stop offset="0.6484" stop-color="#3d0099"/><stop offset="1" stop-color="#750099"/></linearGradient>
<linearGradient id="d312" gradientUnits="userSpaceOnUse" x1="1140.5" x2="1162.5"><stop offset="0" stop-color="#0105ff"/><stop offset="1" stop-color="#1200ff"/></linearGradient>
<linearGradient id="d313" gradientUnits="userSpaceOnUse" x1="1096.5" x2="1349.5"><stop offset="0" stop-color="#000799"/><stop offset="0.1858" stop-color="#010299"/><stop offset="0.6482" stop-color="#3b0099"/><stop offset="1" stop-color="#730099"/></linearGradient>
<linearGradient id="d314" gradientUnits="userSpaceOnUse" x1="1141.5" x2="1160.5"><stop offset="0" stop-color="#0104ff"/><stop offset="1" stop-color="#1000ff"/></linearGradient>
<linearGradient id="d315" gradientUnits="userSpaceOnUse" x1="1098.5" x2="1347.5"><stop offset="0" stop-color="#000699"/><stop offset="0.1807" stop-color="#010299"/><stop offset="0.6386" stop-color="#390099"/><stop offset="1" stop-color="#700099"/></linearGradient>
<linearGradient id="d316" gradientUnits="userSpaceOnUse" x1="1141.5" x2="1158.5"><stop offset="0" stop-color="#0104ff"/><stop offset="1" stop-color="#0e00ff"/></linearGradient>
<linearGradient id="d317" gradientUnits="userSpaceOnUse" x1="1099.5" x2="1345.5"><stop offset="0" stop-color="#000699"/><stop offset="0.1626" stop-color="#000299"/><stop offset="0.2195" stop-color="#050099"/><stop offset="0.6504" stop-color="#390099"/><stop offset="1" stop-color="#6d0099"/></linearGradient>
<linearGradient id="d318" gradientUnits="userSpaceOnUse" x1="1141.5" x2="1156.5"><stop offset="0" stop-color="#0103ff"/><stop offset="1" stop-color="#0b00ff"/></linearGradient>
<linearGradient id="d319" gradientUnits="userSpaceOnUse" x1="1101.5" x2="1344.5"><stop offset="0" stop-color="#000599"/><stop offset="0.2058" stop-color="#040099"/><stop offset="0.6461" stop-color="#380099"/><stop offset="1" stop-color="#6b0099"/></linearGradient>
<linearGradient id="d320" gradientUnits="userSpaceOnUse" x1="1142.5" x2="1154.5"><stop offset="0" stop-color="#0102ff"/><stop offset="1" stop-color="#0900ff"/></linearGradient>
<linearGradient id="d321" gradientUnits="userSpaceOnUse" x1="1102.5" x2="1342.5"><stop offset="0" stop-color="#000599"/><stop offset="0.2" stop-color="#030099"/><stop offset="0.6417" stop-color="#360099"/><stop offset="1" stop-color="#690099"/></linearGradient>
<linearGradient id="d322" gradientUnits="userSpaceOnUse" x1="1142.5" x2="1152.5"><stop offset="0" stop-color="#0102ff"/><stop offset="1" stop-color="#0700ff"/></linearGradient>
<linearGradient id="d323" gradientUnits="userSpaceOnUse" x1="1104.5" x2="1340.5"><stop offset="0" stop-color="#000499"/><stop offset="0.2034" stop-color="#040099"/><stop offset="0.6398" stop-color="#340099"/><stop offset="1" stop-color="#660099"/></linearGradient>
<linearGradient id="d324" gradientUnits="userSpaceOnUse" x1="1142.5" x2="1150.5"><stop offset="0" stop-color="#0101ff"/><stop offset="1" stop-color="#0500ff"/></linearGradient>
<linearGradient id="d325" gradientUnits="userSpaceOnUse" x1="1105.5" x2="1338.5"><stop offset="0" stop-color="#000499"/><stop offset="0.1545" stop-color="#000199"/><stop offset="0.2189" stop-color="#050099"/><stop offset="0.6438" stop-color="#340099"/><stop offset="1" stop-color="#640099"/></linearGradient>
<linearGradient id="d326" gradientUnits="userSpaceOnUse" x1="1143.5" x2="1148.5"><stop offset="0" stop-color="#0101ff"/><stop offset="1" stop-color="#0300ff"/></linearGradient>
<linearGradient id="d327" gradientUnits="userSpaceOnUse" x1="1107.5" x2="1336.5"><stop offset="0" stop-color="#000399"/><stop offset="0.1528" stop-color="#000099"/><stop offset="0.2271" stop-color="#060099"/><stop offset="0.6463" stop-color="#330099"/><stop offset="1" stop-color="#610099"/></linearGradient>
<linearGradient id="d328" gradientUnits="userSpaceOnUse" x1="1143.5" x2="1146.5"><stop offset="0" stop-color="#0101ff"/><stop offset="1" stop-color="#0200ff"/></linearGradient>
<linearGradient id="d329" gradientUnits="userSpaceOnUse" x1="1108.5" x2="1334.5"><stop offset="0" stop-color="#000399"/><stop offset="0.1504" stop-color="#000099"/><stop offset="0.2301" stop-color="#060099"/><stop offset="0.646" stop-color="#320099"/><stop offset="1" stop-color="#5f0099"/></linearGradient>
<linearGradient id="d330" gradientUnits="userSpaceOnUse" x1="1110.5" x2="1332.5"><stop offset="0" stop-color="#000299"/><stop offset="0.1486" stop-color="#000099"/><stop offset="0.2297" stop-color="#060099"/><stop offset="0.6441" stop-color="#300099"/><stop offset="1" stop-color="#5c0099"/></linearGradient>
<linearGradient id="d331" gradientUnits="userSpaceOnUse" x1="1111.5" x2="1330.5"><stop offset="0" stop-color="#000299"/><stop offset="0.1507" stop-color="#000099"/><stop offset="0.2329" stop-color="#060099"/><stop offset="0.6438" stop-color="#2f0099"/><stop offset="1" stop-color="#5a0099"/></linearGradient>
<linearGradient id="d332" gradientUnits="userSpaceOnUse" x1="1113.5" x2="1328.5"><stop offset="0" stop-color="#000299"/><stop offset="0.1488" stop-color="#000099"/><stop offset="0.2326" stop-color="#060099"/><stop offset="0.6465" stop-color="#2e0099"/><stop offset="1" stop-color="#580099"/></linearGradient>
<linearGradient id="d333" gradientUnits="userSpaceOnUse" x1="1114.5" x2="1326.5"><stop offset="0" stop-color="#000199"/><stop offset="0.1462" stop-color="#000099"/><stop offset="0.2358" stop-color="#060099"/><stop offset="0.6462" stop-color="#2d0099"/><stop offset="1" stop-color="#550099"/></linearGradient>
<linearGradient id="d334" gradientUnits="userSpaceOnUse" x1="1116.5" x2="1324.5"><stop offset="0" stop-color="#000199"/><stop offset="0.1442" stop-color="#000099"/><stop offset="0.2404" stop-color="#060099"/><stop offset="0.6442" stop-color="#2c0099"/><stop offset="1" stop-color="#530099"/></linearGradient>
<linearGradient id="d335" gradientUnits="userSpaceOnUse" x1="1117.5" x2="1322.5"><stop offset="0" stop-color="#000199"/><stop offset="0.1463" stop-color="#010099"/><stop offset="0.2439" stop-color="#060099"/><stop offset="0.6488" stop-color="#2b0099"/><stop offset="1" stop-color="#510099"/></linearGradient>
<linearGradient id="d336" gradientUnits="userSpaceOnUse" x1="1119.5" x2="1320.5"><stop offset="0" stop-color="#000199"/><stop offset="0.1393" stop-color="#000099"/><stop offset="0.2488" stop-color="#070099"/><stop offset="1" stop-color="#4f0099"/></linearGradient>
<linearGradient id="d337" gradientUnits="userSpaceOnUse" x1="1121.5" x2="1318.5"><stop offset="0" stop-color="#000099"/><stop offset="0.1371" stop-color="#010099"/><stop offset="0.2538" stop-color="#070099"/><stop offset="1" stop-color="#4d0099"/></linearGradient>
<linearGradient id="d338" gradientUnits="userSpaceOnUse" x1="1122.5" x2="1316.5"><stop offset="0" stop-color="#000099"/><stop offset="0.134" stop-color="#010099"/><stop offset="0.2577" stop-color="#070099"/><stop offset="1" stop-color="#4b0099"/></linearGradient>
<linearGradient id="d339" gradientUnits="userSpaceOnUse" x1="1124.5" x2="1314.5"><stop offset="0" stop-color="#000099"/><stop offset="0.1316" stop-color="#010099"/><stop offset="0.2632" stop-color="#080099"/><stop offset="1" stop-color="#490099"/></linearGradient>
<linearGradient id="d340" gradientUnits="userSpaceOnUse" x1="1126.5" x2="1312.5"><stop offset="0" stop-color="#000099"/><stop offset="0.129" stop-color="#010099"/><stop offset="0.2688" stop-color="#080099"/><stop offset="1" stop-color="#470099"/></linearGradient>
<linearGradient id="d341" gradientUnits="userSpaceOnUse" x1="1127.5" x2="1311.5"><stop offset="0" stop-color="#000099"/><stop offset="0.1304" stop-color="#010099"/><stop offset="0.2772" stop-color="#080099"/><stop offset="1" stop-color="#450099"/></linearGradient>
<linearGradient id="d342" gradientUnits="userSpaceOnUse" x1="1129.5" x2="1309.5"><stop offset="0" stop-color="#000099"/><stop offset="0.1222" stop-color="#010099"/><stop offset="0.2833" stop-color="#090099"/><stop offset="1" stop-color="#430099"/></linearGradient>
<linearGradient id="d343" gradientUnits="userSpaceOnUse" x1="1131.5" x2="1307.5"><stop offset="0" stop-color="#000099"/><stop offset="0.2841" stop-color="#090099"/><stop offset="1" stop-color="#420099"/></linearGradient>
<linearGradient id="d344" gradientUnits="userSpaceOnUse" x1="1132.5" x2="1305.5"><stop offset="0" stop-color="#000099"/><stop offset="0.2948" stop-color="#090099"/><stop offset="1" stop-color="#400099"/></linearGradient>
<linearGradient id="d345" gradientUnits="userSpaceOnUse" x1="1134.5" x2="1303.5"><stop offset="0" stop-color="#000099"/><stop offset="0.3018" stop-color="#090099"/><stop offset="1" stop-color="#3e0099"/></linearGradient>
<linearGradient id="d346" gradientUnits="userSpaceOnUse" x1="1136.5" x2="1301.5"><stop offset="0" stop-color="#000099"/><stop offset="0.3091" stop-color="#0a0099"/><stop offset="1" stop-color="#3c0099"/></linearGradient>
<linearGradient id="d347" gradientUnits="userSpaceOnUse" x1="1138.5" x2="1299.5"><stop offset="0" stop-color="#000099"/><stop offset="0.3168" stop-color="#0a0099"/><stop offset="1" stop-color="#3a0099"/></linearGradient>
<linearGradient id="d348" gradientUnits="userSpaceOnUse" x1="1140.5" x2="1297.5"><stop offset="0" stop-color="#000099"/><stop offset="0.3248" stop-color="#0a0099"/><stop offset="1" stop-color="#390099"/></linearGradient>
<linearGradient id="d349" gradientUnits="userSpaceOnUse" x1="1141.5" x2="1295.5"><stop offset="0" stop-color="#000099"/><stop offset="0.3312" stop-color="#0a0099"/><stop offset="1" stop-color="#370099"/></linearGradient>
<linearGradient id="d350" gradientUnits="userSpaceOnUse" x1="1143.5" x2="1293.5"><stop offset="0" stop-color="#000099"/><stop offset="0.34" stop-color="#0b0099"/><stop offset="1" stop-color="#350099"/></linearGradient>
<linearGradient id="d351" gradientUnits="userSpaceOnUse" x1="1145.5" x2="1291.5"><stop offset="0" stop-color="#000099"/><stop offset="0.3493" stop-color="#0b0099"/><stop offset="1" stop-color="#330099"/></linearGradient>
<linearGradient id="d352" gradientUnits="userSpaceOnUse" x1="1147.5" x2="1289.5"><stop offset="0" stop-color="#000099"/><stop offset="0.3592" stop-color="#0b0099"/><stop offset="1" stop-color="#320099"/></linearGradient>
<linearGradient id="d353" gradientUnits="userSpaceOnUse" x1="1149.5" x2="1287.5"><stop offset="0" stop-color="#000099"/><stop offset="0.3696" stop-color="#0c0099"/><stop offset="1" stop-color="#300099"/></linearGradient>
<linearGradient id="d354" gradientUnits="userSpaceOnUse" x1="1151.5" x2="1285.5"><stop offset="0" stop-color="#000099"/><stop offset="0.3806" stop-color="#0c0099"/><stop offset="1" stop-color="#2f0099"/></linearGradient>
<linearGradient id="d355" gradientUnits="userSpaceOnUse" x1="1153.5" x2="1283.5"><stop offset="0" stop-color="#000099"/><stop offset="0.3923" stop-color="#0c0099"/><stop offset="1" stop-color="#2d0099"/></linearGradient>
<linearGradient id="d356" gradientUnits="userSpaceOnUse" x1="1155.5" x2="1281.5"><stop offset="0" stop-color="#010099"/><stop offset="0.4048" stop-color="#0d0099"/><stop offset="1" stop-color="#2b0099"/></linearGradient>
<linearGradient id="d357" gradientUnits="userSpaceOnUse" x1="1158.5" x2="1279.5"><stop offset="0" stop-color="#010099"/><stop offset="0.4132" stop-color="#0d0099"/><stop offset="1" stop-color="#2a0099"/></linearGradient>
<linearGradient id="d358" gradientUnits="userSpaceOnUse" x1="1160.5" x2="1278.5"><stop offset="0" stop-color="#010099"/><stop offset="0.4153" stop-color="#0d0099"/><stop offset="1" stop-color="#290099"/></linearGradient>
<linearGradient id="d359" gradientUnits="userSpaceOnUse" x1="1162.5" x2="1276.5"><stop offset="0" stop-color="#020099"/><stop offset="0.4298" stop-color="#0d0099"/><stop offset="1" stop-color="#270099"/></linearGradient>
<linearGradient id="d360" gradientUnits="userSpaceOnUse" x1="1164.5" x2="1274.5"><stop offset="0" stop-color="#020099"/><stop offset="0.4455" stop-color="#0e0099"/><stop offset="1" stop-color="#260099"/></linearGradient>
<linearGradient id="d361" gradientUnits="userSpaceOnUse" x1="1166.5" x2="1272.5"><stop offset="0" stop-color="#020099"/><stop offset="0.4528" stop-color="#0e0099"/><stop offset="1" stop-color="#240099"/></linearGradient>
<linearGradient id="d362" gradientUnits="userSpaceOnUse" x1="1169.5" x2="1270.5"><stop offset="0" stop-color="#030099"/><stop offset="0.4653" stop-color="#0e0099"/><stop offset="1" stop-color="#230099"/></linearGradient>
<linearGradient id="d363" gradientUnits="userSpaceOnUse" x1="1171.5" x2="1268.5"><stop offset="0" stop-color="#030099"/><stop offset="0.4845" stop-color="#0e0099"/><stop offset="1" stop-color="#220099"/></linearGradient>
<linearGradient id="d364" gradientUnits="userSpaceOnUse" x1="1173.5" x2="1266.5"><stop offset="0" stop-color="#040099"/><stop offset="0.4946" stop-color="#0e0099"/><stop offset="1" stop-color="#200099"/></linearGradient>
<linearGradient id="d365" gradientUnits="userSpaceOnUse" x1="1176.5" x2="1264.5"><stop offset="0" stop-color="#040099"/><stop offset="0.5114" stop-color="#0f0099"/><stop offset="1" stop-color="#1f0099"/></linearGradient>
<linearGradient id="d366" gradientUnits="userSpaceOnUse" x1="1178.5" x2="1262.5"><stop offset="0" stop-color="#050099"/><stop offset="0.5238" stop-color="#0f0099"/><stop offset="1" stop-color="#1d0099"/></linearGradient>
<linearGradient id="d367" gradientUnits="userSpaceOnUse" x1="1180.5" x2="1260.5"><stop offset="0" stop-color="#050099"/><stop offset="1" stop-color="#1c0099"/></linearGradient>
<linearGradient id="d368" gradientUnits="userSpaceOnUse" x1="1183.5" x2="1258.5"><stop offset="0" stop-color="#050099"/><stop offset="1" stop-color="#1b0099"/></linearGradient>
<linearGradient id="d369" gradientUnits="userSpaceOnUse" x1="1185.5" x2="1256.5"><stop offset="0" stop-color="#060099"/><stop offset="1" stop-color="#190099"/></linearGradient>
<linearGradient id="d370" gradientUnits="userSpaceOnUse" x1="1188.5" x2="1254.5"><stop offset="0" stop-color="#060099"/><stop offset="1" stop-color="#180099"/></linearGradient>
<linearGradient id="d371" gradientUnits="userSpaceOnUse" x1="1190.5" x2="1252.5"><stop offset="0" stop-color="#070099"/><stop offset="1" stop-color="#170099"/></linearGradient>
<linearGradient id="d372" gradientUnits="userSpaceOnUse" x1="1192.5" x2="1250.5"><stop offset="0" stop-color="#070099"/><stop offset="1" stop-color="#160099"/></linearGradient>
<linearGradient id="d373" gradientUnits="userSpaceOnUse" x1="1195.5" x2="1248.5"><stop offset="0" stop-color="#070099"/><stop offset="1" stop-color="#140099"/></linearGradient>
<linearGradient id="d374" gradientUnits="userSpaceOnUse" x1="1197.5" x2="1246.5"><stop offset="0" stop-color="#080099"/><stop offset="1" stop-color="#130099"/></linearGradient>
<linearGradient id="d375" gradientUnits="userSpaceOnUse" x1="1200.5" x2="1245.5"><stop offset="0" stop-color="#080099"/><stop offset="1" stop-color="#130099"/></linearGradient>
<linearGradient id="d376" gradientUnits="userSpaceOnUse" x1="1202.5" x2="1243.5"><stop offset="0" stop-color="#090099"/><stop offset="1" stop-color="#120099"/></linearGradient>
<linearGradient id="d377" gradientUnits="userSpaceOnUse" x1="1205.5" x2="1241.5"><stop offset="0" stop-color="#090099"/><stop offset="1" stop-color="#110099"/></linearGradient>
<linearGradient id="d378" gradientUnits="userSpaceOnUse" x1="1207.5" x2="1239.5"><stop offset="0" stop-color="#090099"/><stop offset="1" stop-color="#100099"/></linearGradient>
<linearGradient id="d379" gradientUnits="userSpaceOnUse" x1="1209.5" x2="1237.5"><stop offset="0" stop-color="#0a0099"/><stop offset="1" stop-color="#0f0099"/></linearGradient>
<linearGradient id="d380" gradientUnits="userSpaceOnUse" x1="1212.5" x2="1235.5"><stop offset="0" stop-color="#0a0099"/><stop offset="1" stop-color="#0f0099"/></linearGradient>
<linearGradient id="d381" gradientUnits="userSpaceOnUse" x1="1214.5" x2="1233.5"><stop offset="0" stop-color="#0b0099"/><stop offset="1" stop-color="#0e0099"/></linearGradient>
<linearGradient id="d382" gradientUnits="userSpaceOnUse" x1="1217.5" x2="1231.5"><stop offset="0" stop-color="#0b0099"/><stop offset="1" stop-color="#0e0099"/></linearGradient>
<linearGradient id="d383" gradientUnits="userSpaceOnUse" x1="1222.5" x2="1229.5"><stop offset="0" stop-color="#0c0099"/><stop offset="1" stop-color="#0d0099"/></linearGradient>
<clipPath id="cpl"><polygon points="1229.4,531.0 1228.8,531.6 1228.1,532.0 1227.4,532.3 1226.6,532.5 1225.8,532.5 1225.0,532.5 1224.2,532.2 1218.3,530.1 1217.9,529.8 1217.4,529.4 1216.9,529.0 1216.4,528.6 1215.8,528.2 1215.2,527.7 1214.6,527.2 1214.0,526.7 1213.3,526.2 1212.7,525.6 1212.0,525.1 1211.2,524.5 1210.5,523.8 1209.8,523.2 1209.0,522.5 1208.2,521.9 1207.4,521.2 1206.5,520.4 1205.7,519.7 1204.8,518.9 1203.9,518.2 1202.9,517.4 1202.0,516.6 1201.0,515.8 1199.9,514.9 1198.9,514.0 1197.8,513.1 1196.6,512.2 1195.4,511.2 1194.2,510.2 1192.9,509.1 1191.6,508.0 1190.2,506.9 1188.8,505.7 1187.4,504.6 1185.9,503.4 1184.4,502.1 1182.9,500.9 1181.4,499.6 1179.8,498.3 1178.2,496.9 1176.5,495.5 1174.8,494.1 1173.0,492.5 1171.2,491.0 1169.3,489.3 1167.4,487.7 1165.5,485.9 1163.5,484.1 1161.4,482.2 1159.3,480.3 1157.2,478.2 1155.0,476.1 1152.8,474.0 1150.5,471.8 1148.3,469.5 1145.9,467.1 1143.4,464.6 1140.9,461.8 1138.2,458.8 1135.3,455.6 1132.4,452.2 1129.4,448.7 1126.2,445.0 1123.0,441.1 1119.7,437.0 1116.3,432.7 1112.9,428.3 1109.4,423.7 1105.9,418.9 1102.2,413.9 1098.5,408.8 1094.7,403.5 1090.9,398.0 1087.0,392.4 1083.2,386.6 1079.2,380.6 1075.2,374.4 1071.2,368.0 1067.1,361.5 1063.0,354.9 1058.9,348.2 1054.8,341.4 1050.8,334.6 1046.9,327.8 1042.8,320.9 1038.8,313.8 1034.8,306.7 1030.9,299.6 1027.0,292.5 1023.3,285.4 1019.7,278.5 1016.3,271.6 1013.0,264.7 1009.8,257.7 1006.7,250.9 1003.7,244.1 1000.8,237.4 998.1,230.9 995.4,224.6 993.0,218.4 990.6,212.3 988.3,206.4 986.2,200.6 984.2,194.9 982.3,189.5 980.6,184.2 979.0,179.1 977.5,174.3 976.1,169.6 974.9,165.1 973.8,160.9 972.8,156.7 971.9,152.8 971.1,149.0 970.4,145.3 969.8,141.9 969.3,138.6 968.9,135.4 968.7,132.5 968.5,129.6 968.3,126.9 968.3,124.3 968.4,121.8 968.5,119.4 968.7,117.1 969.0,115.0 969.4,112.9 969.8,111.0 970.4,109.1 970.9,107.3 971.6,105.7 972.3,104.1 973.2,102.6 974.0,101.2 975.0,99.8 976.0,98.6 977.1,97.5 978.2,96.4 979.4,95.4 980.6,94.5 981.8,93.7 983.1,92.9 984.5,92.3 985.9,91.7 987.4,91.1 988.8,90.6 990.3,90.2 991.9,89.8 993.4,89.4 995.0,89.1 996.7,88.9 998.3,88.7 1000.0,88.5 1001.7,88.4 1003.4,88.2 1005.1,88.1 1006.9,88.0 1008.6,87.9 1010.4,87.9 1012.2,87.8 1014.0,87.8 1015.8,87.8 1017.6,87.8 1019.4,87.7 1021.2,87.7 1023.0,87.7 1024.8,87.8 1026.6,87.8 1028.4,87.8 1030.3,87.9 1032.1,87.9 1034.0,88.0 1035.8,88.1 1037.7,88.1 1039.5,88.2 1041.4,88.3 1043.3,88.4 1045.3,88.5 1047.2,88.6 1049.2,88.8 1051.2,88.9 1053.2,89.0 1055.2,89.2 1057.2,89.3 1059.3,89.5 1061.4,89.6 1063.5,89.8 1065.6,90.0 1067.7,90.2 1069.9,90.4 1072.1,90.6 1074.3,90.8 1076.6,91.0 1078.8,91.2 1081.1,91.4 1083.5,91.6 1085.8,91.9 1088.2,92.1 1090.6,92.4 1093.0,92.6 1095.5,92.9 1098.0,93.1 1100.6,93.4 1103.1,93.6 1105.7,93.9 1108.4,94.2 1111.0,94.5 1113.7,94.8 1116.5,95.1 1119.3,95.4 1122.1,95.7 1124.9,96.0 1127.8,96.3 1130.7,96.7 1133.7,97.0 1136.7,97.3 1139.7,97.7 1142.8,98.0 1145.9,98.4 1149.0,98.7 1152.2,99.1 1155.5,99.4 1158.7,99.8 1162.1,100.2 1165.4,100.6 1168.8,101.0 1172.3,101.3 1175.7,101.7 1179.2,102.1 1182.8,102.6 1186.4,103.0 1190.0,103.4 1193.7,103.8 1197.5,104.2 1201.2,104.7 1205.0,105.1 1208.9,105.6 1212.8,106.0 1216.7,106.5 1220.7,106.9 1224.7,107.4 1228.7,107.8 1232.8,108.3 1236.9,108.8 1241.1,109.3 1245.3,109.8 1249.6,110.3 1253.9,110.7 1258.2,111.2 1262.5,111.7 1266.9,112.2 1271.3,112.8 1275.7,113.3 1280.2,113.8 1284.7,114.3 1289.3,114.8 1293.8,115.3 1298.4,115.9 1302.9,116.4 1307.5,116.9 1312.2,117.5 1316.8,118.0 1321.5,118.5 1326.1,119.1 1330.8,119.6 1335.4,120.1 1340.0,120.7 1344.5,121.2 1349.0,121.7 1353.6,122.2 1358.0,122.8 1362.5,123.3 1367.0,123.8 1371.4,124.3 1375.9,124.8 1380.3,125.3 1384.7,125.8 1389.2,126.3 1393.6,126.9 1398.0,127.4 1402.3,127.9 1406.6,128.4 1410.8,128.8 1414.9,129.3 1419.0,129.8 1423.1,130.2 1427.1,130.7 1431.0,131.1 1434.9,131.6 1438.7,132.0 1442.5,132.4 1446.2,132.9 1449.8,133.3 1453.4,133.7 1456.9,134.1 1460.4,134.5 1463.8,134.9 1467.2,135.3 1470.4,135.7 1473.6,136.1 1476.8,136.4 1479.8,136.8 1482.8,137.1 1485.8,137.5 1488.7,137.8 1491.5,138.1 1494.2,138.4 1496.9,138.8 1499.6,139.1 1502.1,139.3 1504.6,139.6 1507.1,139.9 1509.5,140.2 1511.8,140.5 1514.2,140.7 1516.4,141.0 1518.6,141.2 1520.8,141.5 1522.9,141.7 1525.0,142.0 1527.0,142.2 1529.0,142.4 1531.0,142.7 1532.9,142.9 1534.8,143.1 1536.7,143.3 1538.5,143.5 1540.3,143.7 1542.1,144.0 1543.8,144.2 1545.5,144.3 1547.2,144.5 1548.8,144.7 1550.4,144.9 1552.0,145.1 1553.5,145.3 1555.0,145.4 1556.5,145.6 1557.9,145.8 1559.2,145.9 1560.6,146.1 1561.9,146.2 1563.1,146.4 1564.4,146.5 1565.6,146.6 1566.7,146.8 1567.8,146.9 1568.9,147.0 1570.0,147.1 1571.0,147.3 1571.9,147.4 1572.9,147.5 1573.8,147.6 1574.7,147.7 1575.6,147.8 1576.4,147.9 1577.2,148.0 1578.0,148.1 1578.8,148.2 1579.5,148.2 1580.2,148.3 1580.9,148.4 1581.6,148.5 1582.2,148.6 1582.7,148.6 1583.2,148.7 1583.6,148.7 1584.1,148.8 1584.7,148.8 1585.3,148.9 1586.1,149.0 1587.0,149.1 1588.2,149.3 1589.4,149.4 1590.7,149.5 1592.0,149.7 1593.2,149.8 1594.3,150.0 1595.2,150.1 1596.0,150.2 1596.6,150.2 1597.1,150.3 1597.6,150.3 1597.9,150.4 1598.3,150.4 1598.5,150.5 1598.8,150.5"/></clipPath>
<clipPath id="cpt"><polygon points="1423.7,137.7 1093.6,106.7 1144.7,422.9"/></clipPath>
<clipPath id="cpr"><rect x="967" y="78" width="609" height="468"/></clipPath>
<clipPath id="cpi"><rect x="1368.0" y="401.0" width="202.3" height="137.7"/></clipPath>
<linearGradient id="ins" x1="1368.0" y1="401.0" x2="1576.0267798" y2="529.336145" gradientUnits="userSpaceOnUse"><stop offset="0" stop-color="#a8ff00"/><stop offset="0.2585452332742447" stop-color="#d8ff00"/><stop offset="0.47008224231680856" stop-color="#ffff14"/><stop offset="0.7350411211584043" stop-color="#ffd800"/><stop offset="1" stop-color="#ffb000"/></linearGradient>
<linearGradient id="insd" x1="1368.0" y1="401.0" x2="1576.0267798" y2="529.336145" gradientUnits="userSpaceOnUse"><stop offset="0" stop-color="#5e9600"/><stop offset="0.2585452332742447" stop-color="#829800"/><stop offset="0.47008224231680856" stop-color="#9a9a04"/><stop offset="0.7350411211584043" stop-color="#9c8400"/><stop offset="1" stop-color="#9a6c00"/></linearGradient>
<linearGradient id="gr" x1="0" y1="0" x2="0" y2="1"><stop offset="0" stop-color="#ff2020"/><stop offset="1" stop-color="#c00000"/></linearGradient>
<linearGradient id="gg" x1="0" y1="0" x2="0" y2="1"><stop offset="0" stop-color="#20a020"/><stop offset="1" stop-color="#006000"/></linearGradient>
<linearGradient id="gb" x1="0" y1="0" x2="0" y2="1"><stop offset="0" stop-color="#0000ff"/><stop offset="0.6" stop-color="#0000f0"/><stop offset="1" stop-color="#000090"/></linearGradient>
<linearGradient id="th" x1="0" y1="0" x2="0" y2="1"><stop offset="0" stop-color="#3a3a3a"/><stop offset="0.48" stop-color="#343434"/><stop offset="0.5" stop-color="#141414"/><stop offset="1" stop-color="#262626"/></linearGradient>
<linearGradient id="sel" x1="0" y1="0" x2="1" y2="0"><stop offset="0" stop-color="#2c2c2c"/><stop offset="1" stop-color="#3c3c3c"/></linearGradient>
<linearGradient id="bar" x1="0" y1="0" x2="0" y2="1"><stop offset="0" stop-color="#4a4a4a"/><stop offset="1" stop-color="#2a2a2a"/></linearGradient>
<linearGradient id="tab" x1="0" y1="0" x2="0" y2="1"><stop offset="0" stop-color="#a2a2a2"/><stop offset="0.12" stop-color="#8e8e8e"/><stop offset="1" stop-color="#5a5a5a"/></linearGradient>
<linearGradient id="tabs" x1="0" y1="0" x2="0" y2="1"><stop offset="0" stop-color="#161616"/><stop offset="1" stop-color="#3c3c3c"/></linearGradient>
<linearGradient id="btn" x1="0" y1="0" x2="0" y2="1"><stop offset="0" stop-color="#9e9e9e"/><stop offset="1" stop-color="#707070"/></linearGradient>
<linearGradient id="cir" x1="0" y1="0" x2="0" y2="1"><stop offset="0" stop-color="#7c7c7c"/><stop offset="1" stop-color="#ababab"/></linearGradient>
<linearGradient id="btn2" x1="0" y1="0" x2="0" y2="1"><stop offset="0" stop-color="#a0a0a0"/><stop offset="0.54" stop-color="#8a8a8a"/><stop offset="0.55" stop-color="#707070"/><stop offset="1" stop-color="#6a6a6a"/></linearGradient>
<linearGradient id="btn3" x1="0" y1="0" x2="0" y2="1"><stop offset="0" stop-color="#a8a8a8"/><stop offset="0.52" stop-color="#a0a0a0"/><stop offset="0.53" stop-color="#888888"/><stop offset="1" stop-color="#868686"/></linearGradient>
<linearGradient id="blk" x1="0" y1="0" x2="0" y2="1"><stop offset="0" stop-color="#1c1c1c"/><stop offset="0.5" stop-color="#181818"/><stop offset="0.51" stop-color="#000"/><stop offset="1" stop-color="#000"/></linearGradient>
<linearGradient id="bn" x1="0" y1="0" x2="0" y2="1"><stop offset="0" stop-color="#a6a6a6"/><stop offset="1" stop-color="#7a7a7a"/></linearGradient>
</defs>
<rect width="1587" height="909" fill="#333333"/>
<text x="2.2" y="82.0" font-size="38.0" fill="#f2f2f2" textLength="318.5" lengthAdjust="spacingAndGlyphs" stroke="#f2f2f2" stroke-width="0.3">Saturation Sweeps</text>
<text x="113.4" y="133.0" font-size="18.5" fill="#ececec" textLength="103.5" lengthAdjust="spacingAndGlyphs">dE Formula:</text>
<rect x="223.5" y="113.7" width="129.0" height="24.3" fill="url(#dd)" stroke="#2a2a2a" stroke-width="1"/>
<text x="228.7" y="133.5" font-size="15.5" fill="#f0f0f0" textLength="33.5" lengthAdjust="spacingAndGlyphs">2000</text>
<polygon points="337.7,123.7 346.9,123.7 342.3,128.7" fill="#000"/>
<text x="529.0" y="74.7" font-size="18.5" fill="#ececec" textLength="57.5" lengthAdjust="spacingAndGlyphs">Levels:</text>
<rect x="593.8" y="55.9" width="323.7" height="24.7" fill="url(#dd)" stroke="#2a2a2a" stroke-width="1"/>
<text x="598.9" y="74.7" font-size="15.5" fill="#f0f0f0" textLength="84.5" lengthAdjust="spacingAndGlyphs">20% Sweeps</text>
<polygon points="903.1,66.0 912.3,66.0 907.7,71.0" fill="#000"/>
<text x="130.4" y="163.6" font-size="13.3" fill="#dcdcdc" textLength="75.6" lengthAdjust="spacingAndGlyphs">DeltaE 2000</text>
<rect x="36.5" y="168.5" width="298.0" height="369.0" fill="#262626"/>
<line x1="75.5" y1="168.5" x2="75.5" y2="543.5" stroke="#a0a0a0" stroke-width="1"/>
<line x1="115.5" y1="168.5" x2="115.5" y2="543.5" stroke="#a0a0a0" stroke-width="1"/>
<line x1="154.5" y1="168.5" x2="154.5" y2="543.5" stroke="#a0a0a0" stroke-width="1"/>
<line x1="194.5" y1="168.5" x2="194.5" y2="543.5" stroke="#a0a0a0" stroke-width="1"/>
<line x1="234.5" y1="168.5" x2="234.5" y2="543.5" stroke="#a0a0a0" stroke-width="1"/>
<line x1="274.5" y1="168.5" x2="274.5" y2="543.5" stroke="#a0a0a0" stroke-width="1"/>
<line x1="313.5" y1="168.5" x2="313.5" y2="543.5" stroke="#a0a0a0" stroke-width="1"/>
<line x1="36.5" y1="537.5" x2="36.5" y2="543.5" stroke="#a0a0a0" stroke-width="1"/>
<line x1="30.5" y1="168.5" x2="334.5" y2="168.5" stroke="#a0a0a0" stroke-width="1"/>
<line x1="334.5" y1="168.5" x2="334.5" y2="537.5" stroke="#a0a0a0" stroke-width="1"/>
<line x1="30.5" y1="537.5" x2="334.5" y2="537.5" stroke="#a0a0a0" stroke-width="1"/>
<line x1="36.5" y1="168.5" x2="36.5" y2="537.5" stroke="#a0a0a0" stroke-width="1"/>
<line x1="30.5" y1="230.5" x2="36.5" y2="230.5" stroke="#a0a0a0" stroke-width="1"/>
<line x1="30.5" y1="291.5" x2="36.5" y2="291.5" stroke="#a0a0a0" stroke-width="1"/>
<line x1="30.5" y1="353.5" x2="36.5" y2="353.5" stroke="#a0a0a0" stroke-width="1"/>
<line x1="30.5" y1="414.5" x2="36.5" y2="414.5" stroke="#a0a0a0" stroke-width="1"/>
<line x1="30.5" y1="476.5" x2="36.5" y2="476.5" stroke="#a0a0a0" stroke-width="1"/>
<text x="36.8" y="557.6" font-size="13.3" fill="#dcdcdc" text-anchor="middle">0</text>
<text x="75.8" y="557.6" font-size="13.3" fill="#dcdcdc" text-anchor="middle">2</text>
<text x="115.8" y="557.6" font-size="13.3" fill="#dcdcdc" text-anchor="middle">4</text>
<text x="154.8" y="557.6" font-size="13.3" fill="#dcdcdc" text-anchor="middle">6</text>
<text x="194.8" y="557.6" font-size="13.3" fill="#dcdcdc" text-anchor="middle">8</text>
<text x="234.8" y="557.6" font-size="13.3" fill="#dcdcdc" text-anchor="middle">10</text>
<text x="274.8" y="557.6" font-size="13.3" fill="#dcdcdc" text-anchor="middle">12</text>
<text x="313.8" y="557.6" font-size="13.3" fill="#dcdcdc" text-anchor="middle">14</text>
<text x="35.5" y="205.2" font-size="13.3" fill="#dcdcdc" text-anchor="end">100%</text>
<text x="35.5" y="266.8" font-size="13.3" fill="#dcdcdc" text-anchor="end">80%</text>
<text x="35.5" y="328.2" font-size="13.3" fill="#dcdcdc" text-anchor="end">60%</text>
<text x="35.5" y="389.8" font-size="13.3" fill="#dcdcdc" text-anchor="end">40%</text>
<text x="35.5" y="451.2" font-size="13.3" fill="#dcdcdc" text-anchor="end">20%</text>
<text x="35.5" y="512.8" font-size="13.3" fill="#dcdcdc" text-anchor="end">100</text>
<rect x="37.0" y="175.2" width="20.0" height="5.0" fill="url(#b1)" stroke="#000" stroke-width="1.2"/>
<rect x="37.0" y="181.7" width="35.6" height="5.0" fill="url(#b2)" stroke="#000" stroke-width="1.2"/>
<rect x="37.0" y="188.2" width="38.2" height="5.0" fill="url(#b3)" stroke="#000" stroke-width="1.2"/>
<rect x="37.0" y="194.7" width="19.5" height="5.0" fill="url(#b4)" stroke="#000" stroke-width="1.2"/>
<rect x="37.0" y="201.2" width="29.0" height="5.0" fill="url(#b5)" stroke="#000" stroke-width="1.2"/>
<rect x="37.0" y="207.7" width="26.9" height="5.0" fill="url(#b6)" stroke="#000" stroke-width="1.2"/>
<rect x="37.0" y="236.7" width="27.9" height="5.0" fill="url(#b7)" stroke="#000" stroke-width="1.2"/>
<rect x="37.0" y="243.2" width="32.9" height="5.0" fill="url(#b8)" stroke="#000" stroke-width="1.2"/>
<rect x="37.0" y="249.7" width="45.0" height="5.0" fill="url(#b9)" stroke="#000" stroke-width="1.2"/>
<rect x="37.0" y="256.2" width="19.5" height="5.0" fill="url(#b10)" stroke="#000" stroke-width="1.2"/>
<rect x="37.0" y="262.7" width="34.0" height="5.0" fill="url(#b11)" stroke="#000" stroke-width="1.2"/>
<rect x="37.0" y="269.2" width="26.7" height="5.0" fill="url(#b12)" stroke="#000" stroke-width="1.2"/>
<rect x="37.0" y="298.2" width="26.9" height="5.0" fill="url(#b13)" stroke="#000" stroke-width="1.2"/>
<rect x="37.0" y="304.7" width="27.9" height="5.0" fill="url(#b14)" stroke="#000" stroke-width="1.2"/>
<rect x="37.0" y="311.2" width="35.6" height="5.0" fill="url(#b15)" stroke="#000" stroke-width="1.2"/>
<rect x="37.0" y="317.7" width="20.6" height="5.0" fill="url(#b16)" stroke="#000" stroke-width="1.2"/>
<rect x="37.0" y="324.2" width="31.9" height="5.0" fill="url(#b17)" stroke="#000" stroke-width="1.2"/>
<rect x="37.0" y="330.7" width="26.7" height="5.0" fill="url(#b18)" stroke="#000" stroke-width="1.2"/>
<rect x="37.0" y="359.7" width="27.9" height="5.0" fill="url(#b19)" stroke="#000" stroke-width="1.2"/>
<rect x="37.0" y="366.2" width="27.9" height="5.0" fill="url(#b20)" stroke="#000" stroke-width="1.2"/>
<rect x="37.0" y="372.7" width="34.0" height="5.0" fill="url(#b21)" stroke="#000" stroke-width="1.2"/>
<rect x="37.0" y="379.2" width="20.9" height="5.0" fill="url(#b22)" stroke="#000" stroke-width="1.2"/>
<rect x="37.0" y="385.7" width="26.9" height="5.0" fill="url(#b23)" stroke="#000" stroke-width="1.2"/>
<rect x="37.0" y="392.2" width="26.9" height="5.0" fill="url(#b24)" stroke="#000" stroke-width="1.2"/>
<rect x="37.0" y="421.2" width="27.9" height="5.0" fill="url(#b25)" stroke="#000" stroke-width="1.2"/>
<rect x="37.0" y="427.7" width="29.8" height="5.0" fill="url(#b26)" stroke="#000" stroke-width="1.2"/>
<rect x="37.0" y="434.2" width="29.8" height="5.0" fill="url(#b27)" stroke="#000" stroke-width="1.2"/>
<rect x="37.0" y="440.7" width="22.1" height="5.0" fill="url(#b28)" stroke="#000" stroke-width="1.2"/>
<rect x="37.0" y="447.2" width="28.8" height="5.0" fill="url(#b29)" stroke="#000" stroke-width="1.2"/>
<rect x="37.0" y="453.7" width="31.7" height="5.0" fill="url(#b30)" stroke="#000" stroke-width="1.2"/>
<rect x="37.0" y="520.7" width="20.9" height="5.0" fill="url(#bw)" stroke="#000" stroke-width="1.2"/>
<rect x="384.5" y="117.5" width="138.0" height="270.0" fill="#262626"/>
<line x1="378.5" y1="117.5" x2="522.5" y2="117.5" stroke="#a0a0a0" stroke-width="1"/>
<text x="378.0" y="122.8" font-size="13.3" fill="#dcdcdc" text-anchor="end">15</text>
<line x1="378.5" y1="162.5" x2="522.5" y2="162.5" stroke="#a0a0a0" stroke-width="1"/>
<text x="378.0" y="167.8" font-size="13.3" fill="#dcdcdc" text-anchor="end">10</text>
<line x1="378.5" y1="207.5" x2="522.5" y2="207.5" stroke="#a0a0a0" stroke-width="1"/>
<text x="378.0" y="212.8" font-size="13.3" fill="#dcdcdc" text-anchor="end">5</text>
<line x1="378.5" y1="252.5" x2="522.5" y2="252.5" stroke="#a0a0a0" stroke-width="1"/>
<text x="378.0" y="257.8" font-size="13.3" fill="#dcdcdc" text-anchor="end">0</text>
<line x1="378.5" y1="297.5" x2="522.5" y2="297.5" stroke="#a0a0a0" stroke-width="1"/>
<text x="378.0" y="302.8" font-size="13.3" fill="#dcdcdc" text-anchor="end">-5</text>
<line x1="378.5" y1="342.5" x2="522.5" y2="342.5" stroke="#a0a0a0" stroke-width="1"/>
<text x="378.0" y="347.8" font-size="13.3" fill="#dcdcdc" text-anchor="end">-10</text>
<line x1="378.5" y1="387.5" x2="522.5" y2="387.5" stroke="#a0a0a0" stroke-width="1"/>
<text x="378.0" y="392.8" font-size="13.3" fill="#dcdcdc" text-anchor="end">-15</text>
<line x1="384.5" y1="117.5" x2="384.5" y2="392.5" stroke="#a0a0a0" stroke-width="1"/>
<line x1="522.5" y1="117.5" x2="522.5" y2="392.5" stroke="#a0a0a0" stroke-width="1"/>
<line x1="384.5" y1="118.5" x2="522.5" y2="118.5" stroke="#909090" stroke-width="1"/>
<text x="441.0" y="112.0" font-size="13.3" fill="#dcdcdc" text-anchor="middle">DeltaL</text>
<text x="453.5" y="401.8" font-size="13.3" fill="#dcdcdc" text-anchor="middle">100%</text>
<rect x="572.5" y="117.5" width="138.0" height="270.0" fill="#262626"/>
<line x1="566.5" y1="117.5" x2="710.5" y2="117.5" stroke="#a0a0a0" stroke-width="1"/>
<text x="566.0" y="122.8" font-size="13.3" fill="#dcdcdc" text-anchor="end">15</text>
<line x1="566.5" y1="162.5" x2="710.5" y2="162.5" stroke="#a0a0a0" stroke-width="1"/>
<text x="566.0" y="167.8" font-size="13.3" fill="#dcdcdc" text-anchor="end">10</text>
<line x1="566.5" y1="207.5" x2="710.5" y2="207.5" stroke="#a0a0a0" stroke-width="1"/>
<text x="566.0" y="212.8" font-size="13.3" fill="#dcdcdc" text-anchor="end">5</text>
<line x1="566.5" y1="252.5" x2="710.5" y2="252.5" stroke="#a0a0a0" stroke-width="1"/>
<text x="566.0" y="257.8" font-size="13.3" fill="#dcdcdc" text-anchor="end">0</text>
<line x1="566.5" y1="297.5" x2="710.5" y2="297.5" stroke="#a0a0a0" stroke-width="1"/>
<text x="566.0" y="302.8" font-size="13.3" fill="#dcdcdc" text-anchor="end">-5</text>
<line x1="566.5" y1="342.5" x2="710.5" y2="342.5" stroke="#a0a0a0" stroke-width="1"/>
<text x="566.0" y="347.8" font-size="13.3" fill="#dcdcdc" text-anchor="end">-10</text>
<line x1="566.5" y1="387.5" x2="710.5" y2="387.5" stroke="#a0a0a0" stroke-width="1"/>
<text x="566.0" y="392.8" font-size="13.3" fill="#dcdcdc" text-anchor="end">-15</text>
<line x1="572.5" y1="117.5" x2="572.5" y2="392.5" stroke="#a0a0a0" stroke-width="1"/>
<line x1="710.5" y1="117.5" x2="710.5" y2="392.5" stroke="#a0a0a0" stroke-width="1"/>
<line x1="572.5" y1="118.5" x2="710.5" y2="118.5" stroke="#909090" stroke-width="1"/>
<text x="629.0" y="112.0" font-size="13.3" fill="#dcdcdc" text-anchor="middle">DeltaC</text>
<text x="641.5" y="401.8" font-size="13.3" fill="#dcdcdc" text-anchor="middle">100%</text>
<rect x="760.5" y="117.5" width="138.0" height="270.0" fill="#262626"/>
<line x1="754.5" y1="117.5" x2="898.5" y2="117.5" stroke="#a0a0a0" stroke-width="1"/>
<text x="754.0" y="122.8" font-size="13.3" fill="#dcdcdc" text-anchor="end">15</text>
<line x1="754.5" y1="162.5" x2="898.5" y2="162.5" stroke="#a0a0a0" stroke-width="1"/>
<text x="754.0" y="167.8" font-size="13.3" fill="#dcdcdc" text-anchor="end">10</text>
<line x1="754.5" y1="207.5" x2="898.5" y2="207.5" stroke="#a0a0a0" stroke-width="1"/>
<text x="754.0" y="212.8" font-size="13.3" fill="#dcdcdc" text-anchor="end">5</text>
<line x1="754.5" y1="252.5" x2="898.5" y2="252.5" stroke="#a0a0a0" stroke-width="1"/>
<text x="754.0" y="257.8" font-size="13.3" fill="#dcdcdc" text-anchor="end">0</text>
<line x1="754.5" y1="297.5" x2="898.5" y2="297.5" stroke="#a0a0a0" stroke-width="1"/>
<text x="754.0" y="302.8" font-size="13.3" fill="#dcdcdc" text-anchor="end">-5</text>
<line x1="754.5" y1="342.5" x2="898.5" y2="342.5" stroke="#a0a0a0" stroke-width="1"/>
<text x="754.0" y="347.8" font-size="13.3" fill="#dcdcdc" text-anchor="end">-10</text>
<line x1="754.5" y1="387.5" x2="898.5" y2="387.5" stroke="#a0a0a0" stroke-width="1"/>
<text x="754.0" y="392.8" font-size="13.3" fill="#dcdcdc" text-anchor="end">-15</text>
<line x1="760.5" y1="117.5" x2="760.5" y2="392.5" stroke="#a0a0a0" stroke-width="1"/>
<line x1="898.5" y1="117.5" x2="898.5" y2="392.5" stroke="#a0a0a0" stroke-width="1"/>
<line x1="760.5" y1="118.5" x2="898.5" y2="118.5" stroke="#909090" stroke-width="1"/>
<text x="817.0" y="112.0" font-size="13.3" fill="#dcdcdc" text-anchor="middle">DeltaH</text>
<text x="829.5" y="401.8" font-size="13.3" fill="#dcdcdc" text-anchor="middle">100%</text>
<rect x="398.0" y="252.5" width="109.7" height="10.0" fill="url(#yb)" stroke="#000" stroke-width="1"/>
<rect x="586.7" y="194.7" width="110.0" height="58.3" fill="url(#yb)" stroke="#000" stroke-width="1.2"/>
<rect x="775.3" y="251.5" width="110.0" height="2.2" fill="#000"/>
<rect x="353.0" y="412.0" width="564.3" height="154.5" fill="#000"/>
<rect x="373.5" y="418.5" width="93.0" height="62.5" fill="#bcbc9e"/>
<rect x="373.5" y="481.0" width="93.0" height="63.3" fill="#c0c0a2"/>
<rect x="373.5" y="418.5" width="93.0" height="125.8" fill="none" stroke="#fafaf0" stroke-width="1"/>
<text x="409.4" y="558.6" font-size="10.5" fill="#fff" textLength="21.3" lengthAdjust="spacingAndGlyphs" font-weight="bold">20%</text>
<rect x="483.5" y="418.5" width="93.6" height="62.5" fill="#bcbc7e"/>
<rect x="483.5" y="481.0" width="93.6" height="63.3" fill="#c0c084"/>
<rect x="483.5" y="418.5" width="93.6" height="125.8" fill="none" stroke="#fafaf0" stroke-width="1"/>
<text x="519.6" y="558.6" font-size="10.5" fill="#fff" textLength="21.3" lengthAdjust="spacingAndGlyphs" font-weight="bold">40%</text>
<rect x="593.5" y="418.5" width="93.6" height="62.5" fill="#babb60"/>
<rect x="593.5" y="481.0" width="93.6" height="63.3" fill="#bfbf66"/>
<rect x="593.5" y="418.5" width="93.6" height="125.8" fill="none" stroke="#fafaf0" stroke-width="1"/>
<text x="629.6" y="558.6" font-size="10.5" fill="#fff" textLength="21.3" lengthAdjust="spacingAndGlyphs" font-weight="bold">60%</text>
<rect x="704.5" y="418.5" width="93.6" height="62.5" fill="#bcbc40"/>
<rect x="704.5" y="481.0" width="93.6" height="63.3" fill="#c1c148"/>
<rect x="704.5" y="418.5" width="93.6" height="125.8" fill="none" stroke="#fafaf0" stroke-width="1"/>
<text x="740.6" y="558.6" font-size="10.5" fill="#fff" textLength="21.3" lengthAdjust="spacingAndGlyphs" font-weight="bold">80%</text>
<rect x="814.5" y="418.5" width="93.6" height="62.5" fill="#bfbf00"/>
<rect x="814.5" y="481.0" width="93.6" height="63.3" fill="#c3c327"/>
<rect x="814.5" y="418.5" width="93.6" height="125.8" fill="none" stroke="#fafaf0" stroke-width="1"/>
<text x="847.7" y="558.6" font-size="10.5" fill="#fff" textLength="27.2" lengthAdjust="spacingAndGlyphs" font-weight="bold">100%</text>
<text transform="translate(366,446.5) rotate(-90)" text-anchor="middle" font-size="11.5" font-weight="bold" fill="#fff">Actual</text>
<text transform="translate(366,516.5) rotate(-90)" text-anchor="middle" font-size="11.5" font-weight="bold" fill="#fff">Target</text>
<rect x="924.0" y="48.0" width="663.0" height="532.0" fill="#c4c300"/>
<rect x="931.0" y="55.0" width="649.0" height="518.0" fill="#333333"/>
<text x="1255.0" y="72.0" font-size="13.3" fill="#dcdcdc" text-anchor="middle">CIE 1976 u'v'</text>
<rect x="966.7" y="77.0" width="609.8" height="469.3" fill="#262626"/>
<g clip-path="url(#cpr)"><g clip-path="url(#cpl)"><rect x="1005" y="86" width="31" height="2.6" fill="url(#d1)"/><rect x="989" y="88" width="78" height="2.6" fill="url(#d2)"/><rect x="984" y="90" width="105" height="2.6" fill="url(#d3)"/><rect x="980" y="92" width="128" height="2.6" fill="url(#d4)"/><rect x="977" y="94" width="149" height="2.6" fill="url(#d5)"/><rect x="975" y="96" width="169" height="2.6" fill="url(#d6)"/><rect x="973" y="98" width="189" height="2.6" fill="url(#d7)"/><rect x="972" y="100" width="208" height="2.6" fill="url(#d8)"/><rect x="971" y="102" width="226" height="2.6" fill="url(#d9)"/><rect x="970" y="104" width="244" height="2.6" fill="url(#d10)"/><rect x="969" y="106" width="263" height="2.6" fill="url(#d11)"/><rect x="969" y="108" width="280" height="2.6" fill="url(#d13)"/><rect x="968" y="110" width="298" height="2.6" fill="url(#d15)"/><rect x="968" y="112" width="316" height="2.6" fill="url(#d17)"/><rect x="967" y="114" width="334" height="2.6" fill="url(#d19)"/><rect x="967" y="116" width="351" height="2.6" fill="url(#d21)"/><rect x="967" y="118" width="369" height="2.6" fill="url(#d23)"/><rect x="967" y="120" width="386" height="2.6" fill="url(#d25)"/><rect x="967" y="122" width="403" height="2.6" fill="url(#d27)"/><rect x="967" y="124" width="421" height="2.6" fill="url(#d29)"/><rect x="967" y="126" width="438" height="2.6" fill="url(#d31)"/><rect x="967" y="128" width="456" height="2.6" fill="url(#d33)"/><rect x="967" y="130" width="473" height="2.6" fill="url(#d35)"/><rect x="967" y="132" width="490" height="2.6" fill="url(#d37)"/><rect x="967" y="134" width="508" height="2.6" fill="url(#d39)"/><rect x="968" y="136" width="524" height="2.6" fill="url(#d41)"/><rect x="968" y="138" width="541" height="2.6" fill="url(#d43)"/><rect x="968" y="140" width="559" height="2.6" fill="url(#d45)"/><rect x="968" y="142" width="576" height="2.6" fill="url(#d47)"/><rect x="969" y="144" width="592" height="2.6" fill="url(#d49)"/><rect x="969" y="146" width="607" height="2.6" fill="url(#d51)"/><rect x="969" y="148" width="607" height="2.6" fill="url(#d53)"/><rect x="970" y="150" width="606" height="2.6" fill="url(#d55)"/><rect x="970" y="152" width="606" height="2.6" fill="url(#d57)"/><rect x="971" y="154" width="605" height="2.6" fill="url(#d59)"/><rect x="971" y="156" width="605" height="2.6" fill="url(#d61)"/><rect x="972" y="158" width="604" height="2.6" fill="url(#d63)"/><rect x="972" y="160" width="604" height="2.6" fill="url(#d65)"/><rect x="973" y="162" width="603" height="2.6" fill="url(#d67)"/><rect x="973" y="164" width="603" height="2.6" fill="url(#d69)"/><rect x="974" y="166" width="602" height="2.6" fill="url(#d71)"/><rect x="974" y="168" width="602" height="2.6" fill="url(#d73)"/><rect x="975" y="170" width="601" height="2.6" fill="url(#d75)"/><rect x="975" y="172" width="601" height="2.6" fill="url(#d77)"/><rect x="976" y="174" width="600" height="2.6" fill="url(#d79)"/><rect x="976" y="176" width="600" height="2.6" fill="url(#d81)"/><rect x="977" y="178" width="597" height="2.6" fill="url(#d83)"/><rect x="978" y="180" width="594" height="2.6" fill="url(#d85)"/><rect x="978" y="182" width="592" height="2.6" fill="url(#d87)"/><rect x="979" y="184" width="589" height="2.6" fill="url(#d89)"/><rect x="980" y="186" width="586" height="2.6" fill="url(#d91)"/><rect x="980" y="188" width="584" height="2.6" fill="url(#d93)"/><rect x="981" y="190" width="581" height="2.6" fill="url(#d95)"/><rect x="982" y="192" width="578" height="2.6" fill="url(#d97)"/><rect x="982" y="194" width="576" height="2.6" fill="url(#d99)"/><rect x="983" y="196" width="573" height="2.6" fill="url(#d101)"/><rect x="984" y="198" width="570" height="2.6" fill="url(#d103)"/><rect x="985" y="200" width="567" height="2.6" fill="url(#d105)"/><rect x="985" y="202" width="565" height="2.6" fill="url(#d107)"/><rect x="986" y="204" width="562" height="2.6" fill="url(#d109)"/><rect x="987" y="206" width="559" height="2.6" fill="url(#d111)"/><rect x="987" y="208" width="557" height="2.6" fill="url(#d113)"/><rect x="988" y="210" width="555" height="2.6" fill="url(#d115)"/><rect x="989" y="212" width="552" height="2.6" fill="url(#d117)"/><rect x="990" y="214" width="549" height="2.6" fill="url(#d119)"/><rect x="991" y="216" width="546" height="2.6" fill="url(#d121)"/><rect x="991" y="218" width="544" height="2.6" fill="url(#d123)"/><rect x="992" y="220" width="541" height="2.6" fill="url(#d125)"/><rect x="993" y="222" width="538" height="2.6" fill="url(#d127)"/><rect x="994" y="224" width="535" height="2.6" fill="url(#d129)"/><rect x="995" y="226" width="532" height="2.6" fill="url(#d131)"/><rect x="995" y="228" width="530" height="2.6" fill="url(#d133)"/><rect x="996" y="230" width="527" height="2.6" fill="url(#d135)"/><rect x="997" y="232" width="524" height="2.6" fill="url(#d137)"/><rect x="998" y="234" width="521" height="2.6" fill="url(#d139)"/><rect x="999" y="236" width="518" height="2.6" fill="url(#d141)"/><rect x="1000" y="238" width="515" height="2.6" fill="url(#d143)"/><rect x="1000" y="240" width="513" height="2.6" fill="url(#d145)"/><rect x="1001" y="242" width="510" height="2.6" fill="url(#d147)"/><rect x="1002" y="244" width="508" height="2.6" fill="url(#d149)"/><rect x="1003" y="246" width="505" height="2.6" fill="url(#d151)"/><rect x="1004" y="248" width="502" height="2.6" fill="url(#d153)"/><rect x="1005" y="250" width="499" height="2.6" fill="url(#d155)"/><rect x="1006" y="252" width="496" height="2.6" fill="url(#d157)"/><rect x="1007" y="254" width="493" height="2.6" fill="url(#d159)"/><rect x="1008" y="256" width="490" height="2.6" fill="url(#d161)"/><rect x="1008" y="258" width="488" height="2.6" fill="url(#d163)"/><rect x="1009" y="260" width="485" height="2.6" fill="url(#d165)"/><rect x="1010" y="262" width="482" height="2.6" fill="url(#d167)"/><rect x="1011" y="264" width="479" height="2.6" fill="url(#d169)"/><rect x="1012" y="266" width="476" height="2.6" fill="url(#d171)"/><rect x="1013" y="268" width="473" height="2.6" fill="url(#d173)"/><rect x="1014" y="270" width="470" height="2.6" fill="url(#d175)"/><rect x="1015" y="272" width="467" height="2.6" fill="url(#d177)"/><rect x="1016" y="274" width="464" height="2.6" fill="url(#d179)"/><rect x="1017" y="276" width="461" height="2.6" fill="url(#d181)"/><rect x="1018" y="278" width="459" height="2.6" fill="url(#d183)"/><rect x="1019" y="280" width="456" height="2.6" fill="url(#d185)"/><rect x="1020" y="282" width="453" height="2.6" fill="url(#d187)"/><rect x="1021" y="284" width="450" height="2.6" fill="url(#d189)"/><rect x="1022" y="286" width="447" height="2.6" fill="url(#d191)"/><rect x="1023" y="288" width="444" height="2.6" fill="url(#d193)"/><rect x="1024" y="290" width="441" height="2.6" fill="url(#d195)"/><rect x="1025" y="292" width="438" height="2.6" fill="url(#d197)"/><rect x="1026" y="294" width="435" height="2.6" fill="url(#d199)"/><rect x="1027" y="296" width="432" height="2.6" fill="url(#d201)"/><rect x="1029" y="298" width="428" height="2.6" fill="url(#d203)"/><rect x="1030" y="300" width="425" height="2.6" fill="url(#d205)"/><rect x="1031" y="302" width="422" height="2.6" fill="url(#d207)"/><rect x="1032" y="304" width="419" height="2.6" fill="url(#d209)"/><rect x="1033" y="306" width="416" height="2.6" fill="url(#d211)"/><rect x="1034" y="308" width="413" height="2.6" fill="url(#d213)"/><rect x="1035" y="310" width="410" height="2.6" fill="url(#d215)"/><rect x="1036" y="312" width="408" height="2.6" fill="url(#d217)"/><rect x="1037" y="314" width="405" height="2.6" fill="url(#d219)"/><rect x="1039" y="316" width="401" height="2.6" fill="url(#d221)"/><rect x="1040" y="318" width="398" height="2.6" fill="url(#d223)"/><rect x="1041" y="320" width="395" height="2.6" fill="url(#d225)"/><rect x="1042" y="322" width="392" height="2.6" fill="url(#d227)"/><rect x="1043" y="324" width="389" height="2.6" fill="url(#d229)"/><rect x="1044" y="326" width="386" height="2.6" fill="url(#d231)"/><rect x="1045" y="328" width="383" height="2.6" fill="url(#d233)"/><rect x="1047" y="330" width="379" height="2.6" fill="url(#d235)"/><rect x="1048" y="332" width="376" height="2.6" fill="url(#d237)"/><rect x="1049" y="334" width="373" height="2.6" fill="url(#d239)"/><rect x="1050" y="336" width="370" height="2.6" fill="url(#d241)"/><rect x="1051" y="338" width="367" height="2.6" fill="url(#d243)"/><rect x="1053" y="340" width="363" height="2.6" fill="url(#d245)"/><rect x="1054" y="342" width="360" height="2.6" fill="url(#d247)"/><rect x="1055" y="344" width="357" height="2.6" fill="url(#d249)"/><rect x="1056" y="346" width="355" height="2.6" fill="url(#d251)"/><rect x="1057" y="348" width="352" height="2.6" fill="url(#d253)"/><rect x="1059" y="350" width="348" height="2.6" fill="url(#d255)"/><rect x="1060" y="352" width="345" height="2.6" fill="url(#d257)"/><rect x="1061" y="354" width="342" height="2.6" fill="url(#d259)"/><rect x="1062" y="356" width="339" height="2.6" fill="url(#d261)"/><rect x="1063" y="358" width="336" height="2.6" fill="url(#d263)"/><rect x="1065" y="360" width="332" height="2.6" fill="url(#d265)"/><rect x="1066" y="362" width="329" height="2.6" fill="url(#d267)"/><rect x="1067" y="364" width="326" height="2.6" fill="url(#d269)"/><rect x="1068" y="366" width="323" height="2.6" fill="url(#d271)"/><rect x="1070" y="368" width="319" height="2.6" fill="url(#d273)"/><rect x="1071" y="370" width="316" height="2.6" fill="url(#d275)"/><rect x="1072" y="372" width="313" height="2.6" fill="url(#d277)"/><rect x="1073" y="374" width="310" height="2.6" fill="url(#d279)"/><rect x="1075" y="376" width="306" height="2.6" fill="url(#d281)"/><rect x="1076" y="378" width="303" height="2.6" fill="url(#d283)"/><rect x="1077" y="380" width="301" height="2.6" fill="url(#d285)"/><rect x="1079" y="382" width="297" height="2.6" fill="url(#d287)"/><rect x="1080" y="384" width="294" height="2.6" fill="url(#d289)"/><rect x="1081" y="386" width="291" height="2.6" fill="url(#d291)"/><rect x="1083" y="388" width="287" height="2.6" fill="url(#d293)"/><rect x="1084" y="390" width="284" height="2.6" fill="url(#d295)"/><rect x="1085" y="392" width="281" height="2.6" fill="url(#d297)"/><rect x="1087" y="394" width="277" height="2.6" fill="url(#d299)"/><rect x="1088" y="396" width="274" height="2.6" fill="url(#d301)"/><rect x="1089" y="398" width="271" height="2.6" fill="url(#d303)"/><rect x="1091" y="400" width="267" height="2.6" fill="url(#d305)"/><rect x="1092" y="402" width="264" height="2.6" fill="url(#d307)"/><rect x="1094" y="404" width="260" height="2.6" fill="url(#d309)"/><rect x="1095" y="406" width="257" height="2.6" fill="url(#d311)"/><rect x="1096" y="408" width="254" height="2.6" fill="url(#d313)"/><rect x="1098" y="410" width="250" height="2.6" fill="url(#d315)"/><rect x="1099" y="412" width="247" height="2.6" fill="url(#d317)"/><rect x="1101" y="414" width="244" height="2.6" fill="url(#d319)"/><rect x="1102" y="416" width="241" height="2.6" fill="url(#d321)"/><rect x="1104" y="418" width="237" height="2.6" fill="url(#d323)"/><rect x="1105" y="420" width="234" height="2.6" fill="url(#d325)"/><rect x="1107" y="422" width="230" height="2.6" fill="url(#d327)"/><rect x="1108" y="424" width="227" height="2.6" fill="url(#d329)"/><rect x="1110" y="426" width="223" height="2.6" fill="url(#d330)"/><rect x="1111" y="428" width="220" height="2.6" fill="url(#d331)"/><rect x="1113" y="430" width="216" height="2.6" fill="url(#d332)"/><rect x="1114" y="432" width="213" height="2.6" fill="url(#d333)"/><rect x="1116" y="434" width="209" height="2.6" fill="url(#d334)"/><rect x="1117" y="436" width="206" height="2.6" fill="url(#d335)"/><rect x="1119" y="438" width="202" height="2.6" fill="url(#d336)"/><rect x="1121" y="440" width="198" height="2.6" fill="url(#d337)"/><rect x="1122" y="442" width="195" height="2.6" fill="url(#d338)"/><rect x="1124" y="444" width="191" height="2.6" fill="url(#d339)"/><rect x="1126" y="446" width="187" height="2.6" fill="url(#d340)"/><rect x="1127" y="448" width="185" height="2.6" fill="url(#d341)"/><rect x="1129" y="450" width="181" height="2.6" fill="url(#d342)"/><rect x="1131" y="452" width="177" height="2.6" fill="url(#d343)"/><rect x="1132" y="454" width="174" height="2.6" fill="url(#d344)"/><rect x="1134" y="456" width="170" height="2.6" fill="url(#d345)"/><rect x="1136" y="458" width="166" height="2.6" fill="url(#d346)"/><rect x="1138" y="460" width="162" height="2.6" fill="url(#d347)"/><rect x="1140" y="462" width="158" height="2.6" fill="url(#d348)"/><rect x="1141" y="464" width="155" height="2.6" fill="url(#d349)"/><rect x="1143" y="466" width="151" height="2.6" fill="url(#d350)"/><rect x="1145" y="468" width="147" height="2.6" fill="url(#d351)"/><rect x="1147" y="470" width="143" height="2.6" fill="url(#d352)"/><rect x="1149" y="472" width="139" height="2.6" fill="url(#d353)"/><rect x="1151" y="474" width="135" height="2.6" fill="url(#d354)"/><rect x="1153" y="476" width="131" height="2.6" fill="url(#d355)"/><rect x="1155" y="478" width="127" height="2.6" fill="url(#d356)"/><rect x="1158" y="480" width="122" height="2.6" fill="url(#d357)"/><rect x="1160" y="482" width="119" height="2.6" fill="url(#d358)"/><rect x="1162" y="484" width="115" height="2.6" fill="url(#d359)"/><rect x="1164" y="486" width="111" height="2.6" fill="url(#d360)"/><rect x="1166" y="488" width="107" height="2.6" fill="url(#d361)"/><rect x="1169" y="490" width="102" height="2.6" fill="url(#d362)"/><rect x="1171" y="492" width="98" height="2.6" fill="url(#d363)"/><rect x="1173" y="494" width="94" height="2.6" fill="url(#d364)"/><rect x="1176" y="496" width="89" height="2.6" fill="url(#d365)"/><rect x="1178" y="498" width="85" height="2.6" fill="url(#d366)"/><rect x="1180" y="500" width="81" height="2.6" fill="url(#d367)"/><rect x="1183" y="502" width="76" height="2.6" fill="url(#d368)"/><rect x="1185" y="504" width="72" height="2.6" fill="url(#d369)"/><rect x="1188" y="506" width="67" height="2.6" fill="url(#d370)"/><rect x="1190" y="508" width="63" height="2.6" fill="url(#d371)"/><rect x="1192" y="510" width="59" height="2.6" fill="url(#d372)"/><rect x="1195" y="512" width="54" height="2.6" fill="url(#d373)"/><rect x="1197" y="514" width="50" height="2.6" fill="url(#d374)"/><rect x="1200" y="516" width="46" height="2.6" fill="url(#d375)"/><rect x="1202" y="518" width="42" height="2.6" fill="url(#d376)"/><rect x="1205" y="520" width="37" height="2.6" fill="url(#d377)"/><rect x="1207" y="522" width="33" height="2.6" fill="url(#d378)"/><rect x="1209" y="524" width="29" height="2.6" fill="url(#d379)"/><rect x="1212" y="526" width="24" height="2.6" fill="url(#d380)"/><rect x="1214" y="528" width="20" height="2.6" fill="url(#d381)"/><rect x="1217" y="530" width="15" height="2.6" fill="url(#d382)"/><rect x="1222" y="532" width="8" height="2.6" fill="url(#d383)"/></g><g clip-path="url(#cpt)"><rect x="1092" y="106" width="17" height="2.6" fill="url(#d12)"/><rect x="1092" y="108" width="38" height="2.6" fill="url(#d14)"/><rect x="1093" y="110" width="59" height="2.6" fill="url(#d16)"/><rect x="1093" y="112" width="80" height="2.6" fill="url(#d18)"/><rect x="1093" y="114" width="101" height="2.6" fill="url(#d20)"/><rect x="1094" y="116" width="122" height="2.6" fill="url(#d22)"/><rect x="1094" y="118" width="143" height="2.6" fill="url(#d24)"/><rect x="1094" y="120" width="164" height="2.6" fill="url(#d26)"/><rect x="1095" y="122" width="185" height="2.6" fill="url(#d28)"/><rect x="1095" y="124" width="206" height="2.6" fill="url(#d30)"/><rect x="1095" y="126" width="227" height="2.6" fill="url(#d32)"/><rect x="1096" y="128" width="248" height="2.6" fill="url(#d34)"/><rect x="1096" y="130" width="269" height="2.6" fill="url(#d36)"/><rect x="1096" y="132" width="290" height="2.6" fill="url(#d38)"/><rect x="1097" y="134" width="310" height="2.6" fill="url(#d40)"/><rect x="1097" y="136" width="328" height="2.6" fill="url(#d42)"/><rect x="1097" y="138" width="328" height="2.6" fill="url(#d44)"/><rect x="1097" y="140" width="326" height="2.6" fill="url(#d46)"/><rect x="1098" y="142" width="323" height="2.6" fill="url(#d48)"/><rect x="1098" y="144" width="321" height="2.6" fill="url(#d50)"/><rect x="1098" y="146" width="319" height="2.6" fill="url(#d52)"/><rect x="1099" y="148" width="316" height="2.6" fill="url(#d54)"/><rect x="1099" y="150" width="314" height="2.6" fill="url(#d56)"/><rect x="1099" y="152" width="312" height="2.6" fill="url(#d58)"/><rect x="1100" y="154" width="309" height="2.6" fill="url(#d60)"/><rect x="1100" y="156" width="307" height="2.6" fill="url(#d62)"/><rect x="1100" y="158" width="305" height="2.6" fill="url(#d64)"/><rect x="1101" y="160" width="302" height="2.6" fill="url(#d66)"/><rect x="1101" y="162" width="300" height="2.6" fill="url(#d68)"/><rect x="1101" y="164" width="298" height="2.6" fill="url(#d70)"/><rect x="1102" y="166" width="296" height="2.6" fill="url(#d72)"/><rect x="1102" y="168" width="294" height="2.6" fill="url(#d74)"/><rect x="1102" y="170" width="292" height="2.6" fill="url(#d76)"/><rect x="1103" y="172" width="289" height="2.6" fill="url(#d78)"/><rect x="1103" y="174" width="287" height="2.6" fill="url(#d80)"/><rect x="1103" y="176" width="285" height="2.6" fill="url(#d82)"/><rect x="1104" y="178" width="282" height="2.6" fill="url(#d84)"/><rect x="1104" y="180" width="280" height="2.6" fill="url(#d86)"/><rect x="1104" y="182" width="278" height="2.6" fill="url(#d88)"/><rect x="1105" y="184" width="275" height="2.6" fill="url(#d90)"/><rect x="1105" y="186" width="273" height="2.6" fill="url(#d92)"/><rect x="1105" y="188" width="271" height="2.6" fill="url(#d94)"/><rect x="1106" y="190" width="268" height="2.6" fill="url(#d96)"/><rect x="1106" y="192" width="266" height="2.6" fill="url(#d98)"/><rect x="1106" y="194" width="264" height="2.6" fill="url(#d100)"/><rect x="1107" y="196" width="261" height="2.6" fill="url(#d102)"/><rect x="1107" y="198" width="259" height="2.6" fill="url(#d104)"/><rect x="1107" y="200" width="257" height="2.6" fill="url(#d106)"/><rect x="1108" y="202" width="254" height="2.6" fill="url(#d108)"/><rect x="1108" y="204" width="252" height="2.6" fill="url(#d110)"/><rect x="1108" y="206" width="250" height="2.6" fill="url(#d112)"/><rect x="1108" y="208" width="248" height="2.6" fill="url(#d114)"/><rect x="1109" y="210" width="245" height="2.6" fill="url(#d116)"/><rect x="1109" y="212" width="244" height="2.6" fill="url(#d118)"/><rect x="1109" y="214" width="242" height="2.6" fill="url(#d120)"/><rect x="1110" y="216" width="239" height="2.6" fill="url(#d122)"/><rect x="1110" y="218" width="237" height="2.6" fill="url(#d124)"/><rect x="1110" y="220" width="235" height="2.6" fill="url(#d126)"/><rect x="1111" y="222" width="232" height="2.6" fill="url(#d128)"/><rect x="1111" y="224" width="230" height="2.6" fill="url(#d130)"/><rect x="1111" y="226" width="228" height="2.6" fill="url(#d132)"/><rect x="1112" y="228" width="225" height="2.6" fill="url(#d134)"/><rect x="1112" y="230" width="223" height="2.6" fill="url(#d136)"/><rect x="1112" y="232" width="221" height="2.6" fill="url(#d138)"/><rect x="1113" y="234" width="218" height="2.6" fill="url(#d140)"/><rect x="1113" y="236" width="216" height="2.6" fill="url(#d142)"/><rect x="1113" y="238" width="214" height="2.6" fill="url(#d144)"/><rect x="1114" y="240" width="211" height="2.6" fill="url(#d146)"/><rect x="1114" y="242" width="209" height="2.6" fill="url(#d148)"/><rect x="1114" y="244" width="207" height="2.6" fill="url(#d150)"/><rect x="1115" y="246" width="204" height="2.6" fill="url(#d152)"/><rect x="1115" y="248" width="202" height="2.6" fill="url(#d154)"/><rect x="1115" y="250" width="200" height="2.6" fill="url(#d156)"/><rect x="1116" y="252" width="197" height="2.6" fill="url(#d158)"/><rect x="1116" y="254" width="195" height="2.6" fill="url(#d160)"/><rect x="1116" y="256" width="193" height="2.6" fill="url(#d162)"/><rect x="1117" y="258" width="191" height="2.6" fill="url(#d164)"/><rect x="1117" y="260" width="189" height="2.6" fill="url(#d166)"/><rect x="1117" y="262" width="187" height="2.6" fill="url(#d168)"/><rect x="1118" y="264" width="184" height="2.6" fill="url(#d170)"/><rect x="1118" y="266" width="182" height="2.6" fill="url(#d172)"/><rect x="1118" y="268" width="180" height="2.6" fill="url(#d174)"/><rect x="1119" y="270" width="177" height="2.6" fill="url(#d176)"/><rect x="1119" y="272" width="175" height="2.6" fill="url(#d178)"/><rect x="1119" y="274" width="173" height="2.6" fill="url(#d180)"/><rect x="1119" y="276" width="171" height="2.6" fill="url(#d182)"/><rect x="1120" y="278" width="168" height="2.6" fill="url(#d184)"/><rect x="1120" y="280" width="166" height="2.6" fill="url(#d186)"/><rect x="1120" y="282" width="164" height="2.6" fill="url(#d188)"/><rect x="1121" y="284" width="161" height="2.6" fill="url(#d190)"/><rect x="1121" y="286" width="159" height="2.6" fill="url(#d192)"/><rect x="1121" y="288" width="157" height="2.6" fill="url(#d194)"/><rect x="1122" y="290" width="154" height="2.6" fill="url(#d196)"/><rect x="1122" y="292" width="152" height="2.6" fill="url(#d198)"/><rect x="1122" y="294" width="150" height="2.6" fill="url(#d200)"/><rect x="1123" y="296" width="147" height="2.6" fill="url(#d202)"/><rect x="1123" y="298" width="145" height="2.6" fill="url(#d204)"/><rect x="1123" y="300" width="143" height="2.6" fill="url(#d206)"/><rect x="1124" y="302" width="140" height="2.6" fill="url(#d208)"/><rect x="1124" y="304" width="139" height="2.6" fill="url(#d210)"/><rect x="1124" y="306" width="137" height="2.6" fill="url(#d212)"/><rect x="1125" y="308" width="134" height="2.6" fill="url(#d214)"/><rect x="1125" y="310" width="132" height="2.6" fill="url(#d216)"/><rect x="1125" y="312" width="130" height="2.6" fill="url(#d218)"/><rect x="1126" y="314" width="127" height="2.6" fill="url(#d220)"/><rect x="1126" y="316" width="125" height="2.6" fill="url(#d222)"/><rect x="1126" y="318" width="123" height="2.6" fill="url(#d224)"/><rect x="1127" y="320" width="120" height="2.6" fill="url(#d226)"/><rect x="1127" y="322" width="118" height="2.6" fill="url(#d228)"/><rect x="1127" y="324" width="116" height="2.6" fill="url(#d230)"/><rect x="1128" y="326" width="113" height="2.6" fill="url(#d232)"/><rect x="1128" y="328" width="111" height="2.6" fill="url(#d234)"/><rect x="1128" y="330" width="109" height="2.6" fill="url(#d236)"/><rect x="1129" y="332" width="106" height="2.6" fill="url(#d238)"/><rect x="1129" y="334" width="104" height="2.6" fill="url(#d240)"/><rect x="1129" y="336" width="102" height="2.6" fill="url(#d242)"/><rect x="1129" y="338" width="100" height="2.6" fill="url(#d244)"/><rect x="1130" y="340" width="97" height="2.6" fill="url(#d246)"/><rect x="1130" y="342" width="95" height="2.6" fill="url(#d248)"/><rect x="1130" y="344" width="93" height="2.6" fill="url(#d250)"/><rect x="1131" y="346" width="90" height="2.6" fill="url(#d252)"/><rect x="1131" y="348" width="88" height="2.6" fill="url(#d254)"/><rect x="1131" y="350" width="87" height="2.6" fill="url(#d256)"/><rect x="1132" y="352" width="84" height="2.6" fill="url(#d258)"/><rect x="1132" y="354" width="82" height="2.6" fill="url(#d260)"/><rect x="1132" y="356" width="80" height="2.6" fill="url(#d262)"/><rect x="1133" y="358" width="77" height="2.6" fill="url(#d264)"/><rect x="1133" y="360" width="75" height="2.6" fill="url(#d266)"/><rect x="1133" y="362" width="73" height="2.6" fill="url(#d268)"/><rect x="1134" y="364" width="70" height="2.6" fill="url(#d270)"/><rect x="1134" y="366" width="68" height="2.6" fill="url(#d272)"/><rect x="1134" y="368" width="66" height="2.6" fill="url(#d274)"/><rect x="1135" y="370" width="63" height="2.6" fill="url(#d276)"/><rect x="1135" y="372" width="61" height="2.6" fill="url(#d278)"/><rect x="1135" y="374" width="59" height="2.6" fill="url(#d280)"/><rect x="1136" y="376" width="56" height="2.6" fill="url(#d282)"/><rect x="1136" y="378" width="54" height="2.6" fill="url(#d284)"/><rect x="1136" y="380" width="52" height="2.6" fill="url(#d286)"/><rect x="1137" y="382" width="49" height="2.6" fill="url(#d288)"/><rect x="1137" y="384" width="47" height="2.6" fill="url(#d290)"/><rect x="1137" y="386" width="45" height="2.6" fill="url(#d292)"/><rect x="1138" y="388" width="42" height="2.6" fill="url(#d294)"/><rect x="1138" y="390" width="40" height="2.6" fill="url(#d296)"/><rect x="1138" y="392" width="38" height="2.6" fill="url(#d298)"/><rect x="1139" y="394" width="35" height="2.6" fill="url(#d300)"/><rect x="1139" y="396" width="34" height="2.6" fill="url(#d302)"/><rect x="1139" y="398" width="32" height="2.6" fill="url(#d304)"/><rect x="1140" y="400" width="29" height="2.6" fill="url(#d306)"/><rect x="1140" y="402" width="27" height="2.6" fill="url(#d308)"/><rect x="1140" y="404" width="25" height="2.6" fill="url(#d310)"/><rect x="1140" y="406" width="23" height="2.6" fill="url(#d312)"/><rect x="1141" y="408" width="20" height="2.6" fill="url(#d314)"/><rect x="1141" y="410" width="18" height="2.6" fill="url(#d316)"/><rect x="1141" y="412" width="16" height="2.6" fill="url(#d318)"/><rect x="1142" y="414" width="13" height="2.6" fill="url(#d320)"/><rect x="1142" y="416" width="11" height="2.6" fill="url(#d322)"/><rect x="1142" y="418" width="9" height="2.6" fill="url(#d324)"/><rect x="1143" y="420" width="6" height="2.6" fill="url(#d326)"/><rect x="1143" y="422" width="4" height="2.6" fill="url(#d328)"/></g></g>
<line x1="966.7" y1="77.5" x2="1576.5" y2="77.5" stroke="#a0a0a0" stroke-width="1"/>
<line x1="1576.5" y1="77.0" x2="1576.5" y2="546.3" stroke="#a0a0a0" stroke-width="1"/>
<line x1="966.5" y1="77.0" x2="966.5" y2="552.3" stroke="#a0a0a0" stroke-width="1"/>
<line x1="959.7" y1="546.5" x2="1576.5" y2="546.5" stroke="#a0a0a0" stroke-width="1"/>
<text x="959.4" y="551.2" font-size="13.6" fill="#dcdcdc" text-anchor="end">0</text>
<text x="966.9" y="566.6" font-size="13.6" fill="#dcdcdc" text-anchor="middle">0</text>
<line x1="959.7" y1="507.5" x2="966.7" y2="507.5" stroke="#c8c8c8" stroke-width="1"/>
<line x1="1017.5" y1="546.3" x2="1017.5" y2="552.3" stroke="#c8c8c8" stroke-width="1"/>
<text x="959.4" y="512.1" font-size="13.6" fill="#dcdcdc" text-anchor="end">0,05</text>
<text x="1017.6" y="566.6" font-size="13.6" fill="#dcdcdc" text-anchor="middle">0,05</text>
<line x1="959.7" y1="468.5" x2="966.7" y2="468.5" stroke="#c8c8c8" stroke-width="1"/>
<line x1="1068.5" y1="546.3" x2="1068.5" y2="552.3" stroke="#c8c8c8" stroke-width="1"/>
<text x="959.4" y="473.0" font-size="13.6" fill="#dcdcdc" text-anchor="end">0,1</text>
<text x="1068.3" y="566.6" font-size="13.6" fill="#dcdcdc" text-anchor="middle">0,1</text>
<line x1="959.7" y1="429.5" x2="966.7" y2="429.5" stroke="#c8c8c8" stroke-width="1"/>
<line x1="1118.5" y1="546.3" x2="1118.5" y2="552.3" stroke="#c8c8c8" stroke-width="1"/>
<text x="959.4" y="434.0" font-size="13.6" fill="#dcdcdc" text-anchor="end">0,15</text>
<text x="1118.9" y="566.6" font-size="13.6" fill="#dcdcdc" text-anchor="middle">0,15</text>
<line x1="959.7" y1="389.5" x2="966.7" y2="389.5" stroke="#c8c8c8" stroke-width="1"/>
<line x1="1169.5" y1="546.3" x2="1169.5" y2="552.3" stroke="#c8c8c8" stroke-width="1"/>
<text x="959.4" y="394.9" font-size="13.6" fill="#dcdcdc" text-anchor="end">0,2</text>
<text x="1169.6" y="566.6" font-size="13.6" fill="#dcdcdc" text-anchor="middle">0,2</text>
<line x1="959.7" y1="350.5" x2="966.7" y2="350.5" stroke="#c8c8c8" stroke-width="1"/>
<line x1="1220.5" y1="546.3" x2="1220.5" y2="552.3" stroke="#c8c8c8" stroke-width="1"/>
<text x="959.4" y="355.8" font-size="13.6" fill="#dcdcdc" text-anchor="end">0,25</text>
<text x="1220.3" y="566.6" font-size="13.6" fill="#dcdcdc" text-anchor="middle">0,25</text>
<line x1="959.7" y1="311.5" x2="966.7" y2="311.5" stroke="#c8c8c8" stroke-width="1"/>
<line x1="1270.5" y1="546.3" x2="1270.5" y2="552.3" stroke="#c8c8c8" stroke-width="1"/>
<text x="959.4" y="316.7" font-size="13.6" fill="#dcdcdc" text-anchor="end">0,3</text>
<text x="1271.0" y="566.6" font-size="13.6" fill="#dcdcdc" text-anchor="middle">0,3</text>
<line x1="959.7" y1="272.5" x2="966.7" y2="272.5" stroke="#c8c8c8" stroke-width="1"/>
<line x1="1321.5" y1="546.3" x2="1321.5" y2="552.3" stroke="#c8c8c8" stroke-width="1"/>
<text x="959.4" y="277.7" font-size="13.6" fill="#dcdcdc" text-anchor="end">0,35</text>
<text x="1321.7" y="566.6" font-size="13.6" fill="#dcdcdc" text-anchor="middle">0,35</text>
<line x1="959.7" y1="233.5" x2="966.7" y2="233.5" stroke="#c8c8c8" stroke-width="1"/>
<line x1="1372.5" y1="546.3" x2="1372.5" y2="552.3" stroke="#c8c8c8" stroke-width="1"/>
<text x="959.4" y="238.6" font-size="13.6" fill="#dcdcdc" text-anchor="end">0,4</text>
<text x="1372.3" y="566.6" font-size="13.6" fill="#dcdcdc" text-anchor="middle">0,4</text>
<line x1="959.7" y1="194.5" x2="966.7" y2="194.5" stroke="#c8c8c8" stroke-width="1"/>
<line x1="1423.5" y1="546.3" x2="1423.5" y2="552.3" stroke="#c8c8c8" stroke-width="1"/>
<text x="959.4" y="199.5" font-size="13.6" fill="#dcdcdc" text-anchor="end">0,45</text>
<text x="1423.0" y="566.6" font-size="13.6" fill="#dcdcdc" text-anchor="middle">0,45</text>
<line x1="959.7" y1="155.5" x2="966.7" y2="155.5" stroke="#c8c8c8" stroke-width="1"/>
<line x1="1473.5" y1="546.3" x2="1473.5" y2="552.3" stroke="#c8c8c8" stroke-width="1"/>
<text x="959.4" y="160.4" font-size="13.6" fill="#dcdcdc" text-anchor="end">0,5</text>
<text x="1473.7" y="566.6" font-size="13.6" fill="#dcdcdc" text-anchor="middle">0,5</text>
<line x1="959.7" y1="116.5" x2="966.7" y2="116.5" stroke="#c8c8c8" stroke-width="1"/>
<line x1="1524.5" y1="546.3" x2="1524.5" y2="552.3" stroke="#c8c8c8" stroke-width="1"/>
<text x="959.4" y="121.4" font-size="13.6" fill="#dcdcdc" text-anchor="end">0,55</text>
<text x="1524.4" y="566.6" font-size="13.6" fill="#dcdcdc" text-anchor="middle">0,55</text>
<rect x="1085.8" y="98.9" width="13" height="13" fill="none" stroke="#fff" stroke-width="1.5" stroke-opacity="0.82"/>
<rect x="1097.7" y="110.3" width="13" height="13" fill="none" stroke="#fff" stroke-width="1.5" stroke-opacity="0.82"/>
<rect x="1109.6" y="122.4" width="13" height="13" fill="none" stroke="#fff" stroke-width="1.5" stroke-opacity="0.82"/>
<rect x="1123.5" y="136.4" width="13" height="13" fill="none" stroke="#fff" stroke-width="1.5" stroke-opacity="0.82"/>
<rect x="1140.7" y="152.0" width="13" height="13" fill="none" stroke="#fff" stroke-width="1.5" stroke-opacity="0.82"/>
<circle cx="1093.6" cy="101.7" r="4.3" fill="#23af23" stroke="#000" stroke-width="1.1"/>
<circle cx="1104.4" cy="113.5" r="4.3" fill="#40b040" stroke="#000" stroke-width="1.1"/>
<circle cx="1115.3" cy="124.4" r="4.3" fill="#5eb25e" stroke="#000" stroke-width="1.1"/>
<circle cx="1128.5" cy="139.3" r="4.3" fill="#7cb47c" stroke="#000" stroke-width="1.1"/>
<circle cx="1145.4" cy="156.0" r="4.3" fill="#9ab69a" stroke="#000" stroke-width="1.1"/>
<rect x="1166.5" y="106.5" width="13" height="13" fill="none" stroke="#fff" stroke-width="1.5" stroke-opacity="0.82"/>
<rect x="1164.7" y="117.9" width="13" height="13" fill="none" stroke="#fff" stroke-width="1.5" stroke-opacity="0.82"/>
<rect x="1164.2" y="128.8" width="13" height="13" fill="none" stroke="#fff" stroke-width="1.5" stroke-opacity="0.82"/>
<rect x="1163.5" y="140.7" width="13" height="13" fill="none" stroke="#fff" stroke-width="1.5" stroke-opacity="0.82"/>
<rect x="1162.7" y="155.8" width="13" height="13" fill="none" stroke="#fff" stroke-width="1.5" stroke-opacity="0.82"/>
<circle cx="1171.2" cy="110.5" r="4.3" fill="#c0be16" stroke="#000" stroke-width="1.1"/>
<circle cx="1171.5" cy="121.1" r="4.3" fill="#bebc36" stroke="#000" stroke-width="1.1"/>
<circle cx="1170.5" cy="131.5" r="4.3" fill="#bcbb56" stroke="#000" stroke-width="1.1"/>
<circle cx="1170.5" cy="144.6" r="4.3" fill="#bbba77" stroke="#000" stroke-width="1.1"/>
<circle cx="1169.0" cy="159.6" r="4.3" fill="#b9b997" stroke="#000" stroke-width="1.1"/>
<rect x="1100.5" y="183.2" width="13" height="13" fill="none" stroke="#fff" stroke-width="1.5" stroke-opacity="0.82"/>
<rect x="1111.9" y="180.4" width="13" height="13" fill="none" stroke="#fff" stroke-width="1.5" stroke-opacity="0.82"/>
<rect x="1123.5" y="179.4" width="13" height="13" fill="none" stroke="#fff" stroke-width="1.5" stroke-opacity="0.82"/>
<rect x="1136.1" y="176.6" width="13" height="13" fill="none" stroke="#fff" stroke-width="1.5" stroke-opacity="0.82"/>
<rect x="1148.3" y="175.1" width="13" height="13" fill="none" stroke="#fff" stroke-width="1.5" stroke-opacity="0.82"/>
<circle cx="1108.0" cy="188.4" r="4.3" fill="#19b4b9" stroke="#000" stroke-width="1.1"/>
<circle cx="1119.4" cy="185.6" r="4.3" fill="#38b4b8" stroke="#000" stroke-width="1.1"/>
<circle cx="1130.5" cy="184.6" r="4.3" fill="#58b5b8" stroke="#000" stroke-width="1.1"/>
<circle cx="1143.2" cy="181.6" r="4.3" fill="#78b6b8" stroke="#000" stroke-width="1.1"/>
<circle cx="1153.3" cy="180.3" r="4.3" fill="#98b7b8" stroke="#000" stroke-width="1.1"/>
<rect x="1417.1" y="130.2" width="13" height="13" fill="none" stroke="#fff" stroke-width="1.5" stroke-opacity="0.82"/>
<rect x="1355.7" y="140.7" width="13" height="13" fill="none" stroke="#fff" stroke-width="1.5" stroke-opacity="0.82"/>
<rect x="1304.0" y="149.1" width="13" height="13" fill="none" stroke="#fff" stroke-width="1.5" stroke-opacity="0.82"/>
<rect x="1257.3" y="156.2" width="13" height="13" fill="none" stroke="#fff" stroke-width="1.5" stroke-opacity="0.82"/>
<rect x="1206.5" y="164.9" width="13" height="13" fill="none" stroke="#fff" stroke-width="1.5" stroke-opacity="0.82"/>
<circle cx="1423.6" cy="136.7" r="4.3" fill="#be1212" stroke="#000" stroke-width="1.1"/>
<circle cx="1368.5" cy="145.1" r="4.3" fill="#bc3333" stroke="#000" stroke-width="1.1"/>
<circle cx="1313.0" cy="154.3" r="4.3" fill="#bb5454" stroke="#000" stroke-width="1.1"/>
<circle cx="1265.1" cy="161.5" r="4.3" fill="#ba7575" stroke="#000" stroke-width="1.1"/>
<circle cx="1214.2" cy="170.7" r="4.3" fill="#b99696" stroke="#000" stroke-width="1.1"/>
<rect x="1269.0" y="280.5" width="13" height="13" fill="none" stroke="#fff" stroke-width="1.5" stroke-opacity="0.82"/>
<rect x="1237.3" y="250.7" width="13" height="13" fill="none" stroke="#fff" stroke-width="1.5" stroke-opacity="0.82"/>
<rect x="1213.3" y="225.4" width="13" height="13" fill="none" stroke="#fff" stroke-width="1.5" stroke-opacity="0.82"/>
<rect x="1195.1" y="206.4" width="13" height="13" fill="none" stroke="#fff" stroke-width="1.5" stroke-opacity="0.82"/>
<rect x="1176.6" y="188.2" width="13" height="13" fill="none" stroke="#fff" stroke-width="1.5" stroke-opacity="0.82"/>
<circle cx="1278.2" cy="293.1" r="4.3" fill="#b43ab4" stroke="#000" stroke-width="1.1"/>
<circle cx="1248.4" cy="261.2" r="4.3" fill="#b453b4" stroke="#000" stroke-width="1.1"/>
<circle cx="1222.3" cy="235.2" r="4.3" fill="#b56cb5" stroke="#000" stroke-width="1.1"/>
<circle cx="1202.3" cy="215.5" r="4.3" fill="#b685b6" stroke="#000" stroke-width="1.1"/>
<circle cx="1184.4" cy="196.2" r="4.3" fill="#b79eb7" stroke="#000" stroke-width="1.1"/>
<rect x="1137.5" y="415.7" width="13" height="13" fill="none" stroke="#fff" stroke-width="1.5" stroke-opacity="0.82"/>
<rect x="1145.2" y="333.6" width="13" height="13" fill="none" stroke="#fff" stroke-width="1.5" stroke-opacity="0.82"/>
<rect x="1150.3" y="279.8" width="13" height="13" fill="none" stroke="#fff" stroke-width="1.5" stroke-opacity="0.82"/>
<rect x="1154.6" y="236.3" width="13" height="13" fill="none" stroke="#fff" stroke-width="1.5" stroke-opacity="0.82"/>
<rect x="1157.4" y="201.4" width="13" height="13" fill="none" stroke="#fff" stroke-width="1.5" stroke-opacity="0.82"/>
<circle cx="1149.1" cy="431.6" r="4.3" fill="#16168c" stroke="#000" stroke-width="1.1"/>
<circle cx="1154.3" cy="350.6" r="4.3" fill="#5555bc" stroke="#000" stroke-width="1.1"/>
<circle cx="1158.6" cy="290.8" r="4.3" fill="#7070c0" stroke="#000" stroke-width="1.1"/>
<circle cx="1162.4" cy="246.3" r="4.3" fill="#8888c4" stroke="#000" stroke-width="1.1"/>
<circle cx="1165.2" cy="210.1" r="4.3" fill="#9c9cc4" stroke="#000" stroke-width="1.1"/>
<rect x="1159.7" y="172.8" width="14" height="14" fill="none" stroke="#000" stroke-width="1.5" stroke-opacity="1.00"/>
<circle cx="1167.4" cy="179.6" r="4.2" fill="#fff" stroke="#000" stroke-width="1.1"/>
<g clip-path="url(#cpi)">
<rect x="1368.0" y="401.0" width="202.3" height="137.7" fill="url(#insd)"/>
<polygon points="1368.0,415.5 1570.3,523.3 1570.3,538.7 1368.0,538.7" fill="url(#ins)"/>
<circle cx="1398.5" cy="538.9" r="4.2" fill="#d4e800" stroke="#000" stroke-width="1.1"/>
</g>
<rect x="1368.4" y="401.4" width="201.5" height="136.9" fill="none" stroke="#a0a090" stroke-width="1.1"/>
<rect x="1461.8" y="462.6" width="13.4" height="13" fill="none" stroke="#fff" stroke-width="1.5"/>
<circle cx="1485.5" cy="439.6" r="4.2" fill="#b8b414" stroke="#000" stroke-width="1.1"/>
<text x="43.5" y="610.1" font-size="28.0" fill="#f0f0f0" textLength="222.5" lengthAdjust="spacingAndGlyphs" stroke="#f0f0f0" stroke-width="0.3">Avg dE2000: 1,51</text>
<text x="39.7" y="649.9" font-size="28.0" fill="#f0f0f0" textLength="231.0" lengthAdjust="spacingAndGlyphs" stroke="#f0f0f0" stroke-width="0.3">Max dE2000: 2,32</text>
<text x="9.5" y="694.4" font-size="28.0" fill="#f0f0f0" textLength="209.0" lengthAdjust="spacingAndGlyphs" stroke="#f0f0f0" stroke-width="0.3">Current Reading</text>
<text x="9.5" y="728.8" font-size="24.0" fill="#f0f0f0" textLength="98.5" lengthAdjust="spacingAndGlyphs" stroke="#f0f0f0" stroke-width="0.3">x: 0,4236</text>
<text x="158.8" y="728.8" font-size="24.0" fill="#f0f0f0" textLength="98.5" lengthAdjust="spacingAndGlyphs" stroke="#f0f0f0" stroke-width="0.3">y: 0,5161</text>
<text x="9.5" y="767.7" font-size="24.0" fill="#f0f0f0" textLength="92.0" lengthAdjust="spacingAndGlyphs" stroke="#f0f0f0" stroke-width="0.3">fL: 44,07</text>
<text x="9.5" y="799.9" font-size="24.0" fill="#f0f0f0" textLength="152.0" lengthAdjust="spacingAndGlyphs" stroke="#f0f0f0" stroke-width="0.3">cd/m²: 150,99</text>
<text x="440.5" y="611.6" font-size="13.3" fill="#dcdcdc" text-anchor="middle">RGB Balance</text>
<rect x="332.7" y="616.5" width="242.0" height="172.8" fill="#262626"/>
<line x1="326.7" y1="635.5" x2="574.7" y2="635.5" stroke="#a0a0a0" stroke-width="1"/>
<text x="326.2" y="639.8" font-size="13.3" fill="#dcdcdc" text-anchor="end">40</text>
<line x1="326.7" y1="669.5" x2="574.7" y2="669.5" stroke="#a0a0a0" stroke-width="1"/>
<text x="326.2" y="674.3" font-size="13.3" fill="#dcdcdc" text-anchor="end">20</text>
<line x1="326.7" y1="704.5" x2="574.7" y2="704.5" stroke="#a0a0a0" stroke-width="1"/>
<text x="326.2" y="708.8" font-size="13.3" fill="#dcdcdc" text-anchor="end">0</text>
<line x1="326.7" y1="738.5" x2="574.7" y2="738.5" stroke="#a0a0a0" stroke-width="1"/>
<text x="326.2" y="743.3" font-size="13.3" fill="#dcdcdc" text-anchor="end">-20</text>
<line x1="326.7" y1="773.5" x2="574.7" y2="773.5" stroke="#a0a0a0" stroke-width="1"/>
<text x="326.2" y="777.8" font-size="13.3" fill="#dcdcdc" text-anchor="end">-40</text>
<line x1="332.7" y1="616.5" x2="574.7" y2="616.5" stroke="#a0a0a0" stroke-width="1"/>
<line x1="332.5" y1="616.5" x2="332.5" y2="794.3" stroke="#a0a0a0" stroke-width="1"/>
<line x1="574.5" y1="616.5" x2="574.5" y2="794.3" stroke="#a0a0a0" stroke-width="1"/>
<line x1="332.7" y1="789.5" x2="574.7" y2="789.5" stroke="#a0a0a0" stroke-width="1"/>
<rect x="357.3" y="703.5" width="64.3" height="8.3" fill="url(#gr)" stroke="#000" stroke-width="1"/>
<rect x="422.3" y="703.5" width="63.5" height="3.7" fill="url(#gg)" stroke="#000" stroke-width="1"/>
<rect x="486.6" y="703.5" width="64.3" height="69.5" fill="url(#gb)" stroke="#000" stroke-width="1"/>
<text x="453.7" y="805.2" font-size="13.3" fill="#dcdcdc" text-anchor="middle">100%</text>
<rect x="595.0" y="588.3" width="687.6" height="26.5" fill="url(#th)"/>
<rect x="595.0" y="588.3" width="19.0" height="26.5" fill="#000"/>
<text x="772.3" y="607.2" font-size="15.0" fill="#f4f4f4" textLength="38.0" lengthAdjust="spacingAndGlyphs">20%</text>
<text x="875.7" y="607.2" font-size="15.0" fill="#f4f4f4" textLength="38.0" lengthAdjust="spacingAndGlyphs">40%</text>
<text x="979.1" y="607.2" font-size="15.0" fill="#f4f4f4" textLength="38.0" lengthAdjust="spacingAndGlyphs">60%</text>
<text x="1082.5" y="607.2" font-size="15.0" fill="#f4f4f4" textLength="38.0" lengthAdjust="spacingAndGlyphs">80%</text>
<text x="1185.9" y="607.2" font-size="15.0" fill="#f4f4f4" textLength="47.5" lengthAdjust="spacingAndGlyphs">100%</text>
<rect x="595.0" y="614.8" width="687.6" height="24.8" fill="#484848"/>
<rect x="595.0" y="614.8" width="19.0" height="24.8" fill="url(#sel)"/>
<text x="619.8" y="633.1" font-size="15.0" fill="#ffffff" textLength="74.6" lengthAdjust="spacingAndGlyphs">x: CIE31</text>
<text x="772.0" y="633.1" font-size="15.0" fill="#ffffff" textLength="64.7" lengthAdjust="spacingAndGlyphs">0,3382</text>
<text x="875.4" y="633.1" font-size="15.0" fill="#ffffff" textLength="64.7" lengthAdjust="spacingAndGlyphs">0,3604</text>
<text x="978.8" y="633.1" font-size="15.0" fill="#ffffff" textLength="64.7" lengthAdjust="spacingAndGlyphs">0,3820</text>
<text x="1082.2" y="633.1" font-size="15.0" fill="#ffffff" textLength="64.7" lengthAdjust="spacingAndGlyphs">0,4018</text>
<text x="1185.6" y="633.1" font-size="15.0" fill="#ffffff" textLength="64.7" lengthAdjust="spacingAndGlyphs">0,4236</text>
<rect x="595.0" y="639.4" width="687.6" height="24.8" fill="#828282"/>
<rect x="595.0" y="639.4" width="19.0" height="24.8" fill="url(#sel)"/>
<text x="619.8" y="657.7" font-size="15.0" fill="#ffffff" textLength="74.6" lengthAdjust="spacingAndGlyphs">y: CIE31</text>
<text x="772.0" y="657.7" font-size="15.0" fill="#ffffff" textLength="64.7" lengthAdjust="spacingAndGlyphs">0,3713</text>
<text x="875.4" y="657.7" font-size="15.0" fill="#ffffff" textLength="64.7" lengthAdjust="spacingAndGlyphs">0,4089</text>
<text x="978.8" y="657.7" font-size="15.0" fill="#ffffff" textLength="64.7" lengthAdjust="spacingAndGlyphs">0,4455</text>
<text x="1082.2" y="657.7" font-size="15.0" fill="#ffffff" textLength="64.7" lengthAdjust="spacingAndGlyphs">0,4791</text>
<text x="1185.6" y="657.7" font-size="15.0" fill="#ffffff" textLength="64.7" lengthAdjust="spacingAndGlyphs">0,5161</text>
<rect x="595.0" y="664.0" width="687.6" height="24.8" fill="#484848"/>
<rect x="595.0" y="664.0" width="19.0" height="24.8" fill="url(#sel)"/>
<text x="619.8" y="682.3" font-size="15.0" fill="#ffffff" textLength="11.0" lengthAdjust="spacingAndGlyphs">Y</text>
<text x="772.6" y="682.3" font-size="15.0" fill="#ffffff" textLength="87.6" lengthAdjust="spacingAndGlyphs">158,2105</text>
<text x="876.0" y="682.3" font-size="15.0" fill="#ffffff" textLength="87.6" lengthAdjust="spacingAndGlyphs">155,8516</text>
<text x="979.4" y="682.3" font-size="15.0" fill="#ffffff" textLength="87.6" lengthAdjust="spacingAndGlyphs">153,9578</text>
<text x="1082.8" y="682.3" font-size="15.0" fill="#ffffff" textLength="87.6" lengthAdjust="spacingAndGlyphs">152,4646</text>
<text x="1186.2" y="682.3" font-size="15.0" fill="#ffffff" textLength="87.6" lengthAdjust="spacingAndGlyphs">150,9942</text>
<rect x="595.0" y="688.7" width="687.6" height="24.8" fill="#828282"/>
<rect x="595.0" y="688.7" width="19.0" height="24.8" fill="url(#sel)"/>
<text x="619.8" y="707.0" font-size="15.0" fill="#ffffff" textLength="137.0" lengthAdjust="spacingAndGlyphs">Target x:CIE31</text>
<text x="772.0" y="707.0" font-size="15.0" fill="#ffffff" textLength="64.7" lengthAdjust="spacingAndGlyphs">0,3344</text>
<text x="875.4" y="707.0" font-size="15.0" fill="#ffffff" textLength="64.7" lengthAdjust="spacingAndGlyphs">0,3564</text>
<text x="978.8" y="707.0" font-size="15.0" fill="#ffffff" textLength="64.7" lengthAdjust="spacingAndGlyphs">0,3773</text>
<text x="1082.2" y="707.0" font-size="15.0" fill="#ffffff" textLength="64.7" lengthAdjust="spacingAndGlyphs">0,3969</text>
<text x="1185.6" y="707.0" font-size="15.0" fill="#ffffff" textLength="64.7" lengthAdjust="spacingAndGlyphs">0,4193</text>
<rect x="595.0" y="713.3" width="687.6" height="24.8" fill="#484848"/>
<rect x="595.0" y="713.3" width="19.0" height="24.8" fill="url(#sel)"/>
<text x="619.8" y="731.6" font-size="15.0" fill="#ffffff" textLength="137.0" lengthAdjust="spacingAndGlyphs">Target y:CIE31</text>
<text x="772.0" y="731.6" font-size="15.0" fill="#ffffff" textLength="64.7" lengthAdjust="spacingAndGlyphs">0,3648</text>
<text x="875.4" y="731.6" font-size="15.0" fill="#ffffff" textLength="64.7" lengthAdjust="spacingAndGlyphs">0,4013</text>
<text x="978.8" y="731.6" font-size="15.0" fill="#ffffff" textLength="64.7" lengthAdjust="spacingAndGlyphs">0,4358</text>
<text x="1082.2" y="731.6" font-size="15.0" fill="#ffffff" textLength="64.7" lengthAdjust="spacingAndGlyphs">0,4682</text>
<text x="1185.6" y="731.6" font-size="15.0" fill="#ffffff" textLength="64.7" lengthAdjust="spacingAndGlyphs">0,5053</text>
<rect x="595.0" y="737.9" width="687.6" height="24.8" fill="#828282"/>
<rect x="595.0" y="737.9" width="19.0" height="24.8" fill="url(#sel)"/>
<text x="619.8" y="756.2" font-size="15.0" fill="#ffffff" textLength="79.0" lengthAdjust="spacingAndGlyphs">Target Y</text>
<text x="772.6" y="756.2" font-size="15.0" fill="#ffffff" textLength="87.6" lengthAdjust="spacingAndGlyphs">164,9049</text>
<text x="876.0" y="756.2" font-size="15.0" fill="#ffffff" textLength="87.6" lengthAdjust="spacingAndGlyphs">162,0103</text>
<text x="979.4" y="756.2" font-size="15.0" fill="#ffffff" textLength="87.6" lengthAdjust="spacingAndGlyphs">159,7862</text>
<text x="1082.8" y="756.2" font-size="15.0" fill="#ffffff" textLength="87.6" lengthAdjust="spacingAndGlyphs">158,0408</text>
<text x="1186.2" y="756.2" font-size="15.0" fill="#ffffff" textLength="87.6" lengthAdjust="spacingAndGlyphs">156,3533</text>
<rect x="595.0" y="762.5" width="687.6" height="24.8" fill="#484848"/>
<rect x="595.0" y="762.5" width="19.0" height="24.8" fill="url(#sel)"/>
<text x="619.8" y="780.8" font-size="15.0" fill="#ffffff" textLength="80.0" lengthAdjust="spacingAndGlyphs">ΔE 2000</text>
<text x="772.0" y="780.8" font-size="15.0" fill="#ffffff" textLength="64.7" lengthAdjust="spacingAndGlyphs">1,6841</text>
<text x="875.4" y="780.8" font-size="15.0" fill="#ffffff" textLength="64.7" lengthAdjust="spacingAndGlyphs">1,4129</text>
<text x="978.8" y="780.8" font-size="15.0" fill="#ffffff" textLength="64.7" lengthAdjust="spacingAndGlyphs">1,4139</text>
<text x="1082.2" y="780.8" font-size="15.0" fill="#ffffff" textLength="64.7" lengthAdjust="spacingAndGlyphs">1,4074</text>
<text x="1185.6" y="780.8" font-size="15.0" fill="#ffffff" textLength="64.7" lengthAdjust="spacingAndGlyphs">1,4247</text>
<rect x="595.0" y="787.1" width="687.6" height="24.8" fill="#828282"/>
<rect x="595.0" y="787.1" width="19.0" height="24.8" fill="url(#sel)"/>
<text x="619.8" y="805.4" font-size="15.0" fill="#ffffff" textLength="54.0" lengthAdjust="spacingAndGlyphs">dEITP</text>
<text x="772.0" y="805.4" font-size="15.0" fill="#ffffff" textLength="64.7" lengthAdjust="spacingAndGlyphs">4,2397</text>
<text x="875.4" y="805.4" font-size="15.0" fill="#ffffff" textLength="64.7" lengthAdjust="spacingAndGlyphs">4,5642</text>
<text x="978.8" y="805.4" font-size="15.0" fill="#ffffff" textLength="64.7" lengthAdjust="spacingAndGlyphs">5,6140</text>
<text x="1082.2" y="805.4" font-size="15.0" fill="#ffffff" textLength="64.7" lengthAdjust="spacingAndGlyphs">6,7889</text>
<text x="1185.6" y="805.4" font-size="15.0" fill="#ffffff" textLength="64.7" lengthAdjust="spacingAndGlyphs">8,2068</text>
<rect x="0.0" y="851.3" width="1587.0" height="58.0" fill="url(#bar)"/>
<path d="M-6.0,911.5 v-56.0 a4,4 0 0 1 4,-4 h38.8 a4,4 0 0 1 4,4 v56.0 z" fill="url(#tab)"/>
<circle cx="18.6" cy="861" r="7.2" fill="#a0a0a0"/>
<polygon points="14.2,863.5 23,863.5 18.6,858.2" fill="#2a2a2a"/>
<rect x="2.0" y="878.0" width="34.2" height="30.3" fill="#ffff00" rx="3.5"/>
<path d="M47.3,911.5 v-56.0 a4,4 0 0 1 4,-4 h141.6 a4,4 0 0 1 4,4 v56.0 z" fill="url(#tab)"/>
<rect x="53.1" y="857.2" width="139.0" height="35.6" fill="#bebea0" rx="3.5" stroke="#6e6e58" stroke-width="1" stroke-opacity="0.55"/>
<text x="122.3" y="907.7" font-size="11.0" fill="#383838" text-anchor="middle" stroke="#383838" stroke-width="0.3">20%</text>
<path d="M199.1,911.5 v-56.0 a4,4 0 0 1 4,-4 h141.6 a4,4 0 0 1 4,4 v56.0 z" fill="url(#tab)"/>
<rect x="204.9" y="857.2" width="139.0" height="35.6" fill="#bebe82" rx="3.5" stroke="#6e6e58" stroke-width="1" stroke-opacity="0.55"/>
<text x="274.1" y="907.7" font-size="11.0" fill="#383838" text-anchor="middle" stroke="#383838" stroke-width="0.3">40%</text>
<path d="M350.9,911.5 v-56.0 a4,4 0 0 1 4,-4 h141.6 a4,4 0 0 1 4,4 v56.0 z" fill="url(#tab)"/>
<rect x="356.7" y="857.2" width="139.0" height="35.6" fill="#bcbc62" rx="3.5" stroke="#6e6e58" stroke-width="1" stroke-opacity="0.55"/>
<text x="425.9" y="907.7" font-size="11.0" fill="#383838" text-anchor="middle" stroke="#383838" stroke-width="0.3">60%</text>
<path d="M502.7,911.5 v-56.0 a4,4 0 0 1 4,-4 h141.6 a4,4 0 0 1 4,4 v56.0 z" fill="url(#tab)"/>
<rect x="508.5" y="857.2" width="139.0" height="35.6" fill="#bebe44" rx="3.5" stroke="#6e6e58" stroke-width="1" stroke-opacity="0.55"/>
<text x="577.7" y="907.7" font-size="11.0" fill="#383838" text-anchor="middle" stroke="#383838" stroke-width="0.3">80%</text>
<path d="M654.6,911.5 v-56.0 a4,4 0 0 1 4,-4 h141.6 a4,4 0 0 1 4,4 v56.0 z" fill="url(#tabs)"/>
<rect x="660.4" y="857.2" width="139.0" height="35.6" fill="#c3c000" rx="3.5" stroke="#707000" stroke-width="1" stroke-opacity="0.55"/>
<text x="729.6" y="907.7" font-size="10.5" fill="#fff" text-anchor="middle" font-weight="bold">100%</text>
<path d="M1264.0,870.0 v-14.0 a4,4 0 0 1 4,-4 h39.7 a4,4 0 0 1 4,4 v14.0 z" fill="url(#btn)"/>
<circle cx="1288.3" cy="861.4" r="7.4" fill="url(#cir)"/>
<polygon points="1284.6,862.7 1292.0,862.7 1288.3,858.6" fill="#363636"/>
<rect x="1264.0" y="871.0" width="47.7" height="40.0" fill="url(#btn2)"/>
<rect x="1273.5" y="877.2" width="28.8" height="28.4" fill="url(#btn3)" rx="3.5" stroke="#2c2c2c" stroke-width="2.4"/>
<rect x="1281.1" y="885.0" width="13.7" height="13.3" fill="url(#blk)"/>
<path d="M1312.8,881.5 v-26.5 a3,3 0 0 1 3,-3 h39.8 a3,3 0 0 1 3,3 v26.5 z" fill="url(#btn)"/>
<circle cx="1335.7" cy="867.3" r="9.6" fill="url(#cir)"/>
<rect x="1331.8" y="863.2" width="7.8" height="7.8" fill="#333"/>
<rect x="1359.6" y="852.0" width="43.8" height="29.5" fill="url(#btn)"/>
<circle cx="1381.5" cy="867.3" r="9.6" fill="url(#cir)"/>
<polygon points="1379.1,862.7 1379.1,872.1 1387.3,867.5" fill="#2a2a2a"/>
<rect x="1404.4" y="852.0" width="43.9" height="29.5" fill="url(#btn)"/>
<circle cx="1426.3" cy="867.3" r="9.6" fill="url(#cir)"/>
<path d="M1423.1,862.8 h-2.6 v9 h2.6 M1429.5,862.8 h2.6 v9 h-2.6" fill="none" stroke="#2a2a2a" stroke-width="1.6"/>
<path d="M1423.8,867.3 h1.6 M1427.3,867.3 h1.6" stroke="#2a2a2a" stroke-width="1.6"/>
<rect x="1449.3" y="852.0" width="44.0" height="29.5" fill="url(#btn)"/>
<circle cx="1471.3" cy="867.3" r="9.6" fill="url(#cir)"/>
<path d="M1471.3,867.3 c-1.6,-2.6 -5.6,-2.6 -5.6,0 c0,2.6 4,2.6 5.6,0 c1.6,-2.6 5.6,-2.6 5.6,0 c0,2.6 -4,2.6 -5.6,0 z" fill="none" stroke="#2a2a2a" stroke-width="1.5"/>
<rect x="1494.3" y="852.0" width="43.7" height="29.5" fill="url(#btn)"/>
<circle cx="1516.2" cy="867.3" r="9.6" fill="url(#cir)"/>
<path d="M1511.8,866.7 a4.6,4.6 0 0 1 8,-2.6 M1520.6,867.9 a4.6,4.6 0 0 1 -8,2.6" fill="none" stroke="#2a2a2a" stroke-width="1.9"/>
<polygon points="1517.8,864.1 1522.0,861.7 1521.6,866.5" fill="#2a2a2a"/>
<polygon points="1514.6,870.5 1510.4,872.9 1510.8,868.1" fill="#2a2a2a"/>
<rect x="1539.0" y="852.0" width="48.0" height="29.5" fill="#3c3c3c"/>
<circle cx="1563.2" cy="867.5" r="10" fill="#303030"/>
<path d="M1312.8,913.0 v-27.0 a3,3 0 0 1 3,-3 h130.0 a3,3 0 0 1 3,3 v27.0 z" fill="url(#bn)"/>
<path d="M1449.8,913.0 v-27.0 a3,3 0 0 1 3,-3 h131.2 a3,3 0 0 1 3,3 v27.0 z" fill="url(#bn)"/>
<circle cx="1344.1" cy="897.8" r="9.6" fill="url(#cir)"/>
<circle cx="1557" cy="897.8" r="9.6" fill="url(#cir)"/>
<path d="M1343,893.4 l-4,4.6 l4,4.6 M1348.4,893.4 l-4,4.6 l4,4.6" fill="none" stroke="#3a3a3a" stroke-width="1.6"/>
<path d="M1553,893.4 l4,4.6 l-4,4.6 M1558.4,893.4 l4,4.6 l-4,4.6" fill="none" stroke="#3a3a3a" stroke-width="1.6"/>
<text x="1370.5" y="906.2" font-size="21.0" fill="#a8a8a8" textLength="50.5" lengthAdjust="spacingAndGlyphs">Back</text>
<text x="1370.5" y="905.3" font-size="21.0" fill="#2a2a2a" textLength="50.5" lengthAdjust="spacingAndGlyphs" stroke="#2a2a2a" stroke-width="0.35">Back</text>
<text x="1477.3" y="906.2" font-size="21.0" fill="#a8a8a8" textLength="52.0" lengthAdjust="spacingAndGlyphs">Next</text>
<text x="1477.3" y="905.3" font-size="21.0" fill="#2a2a2a" textLength="52.0" lengthAdjust="spacingAndGlyphs" stroke="#2a2a2a" stroke-width="0.35">Next</text>
</svg>
</body></html>
